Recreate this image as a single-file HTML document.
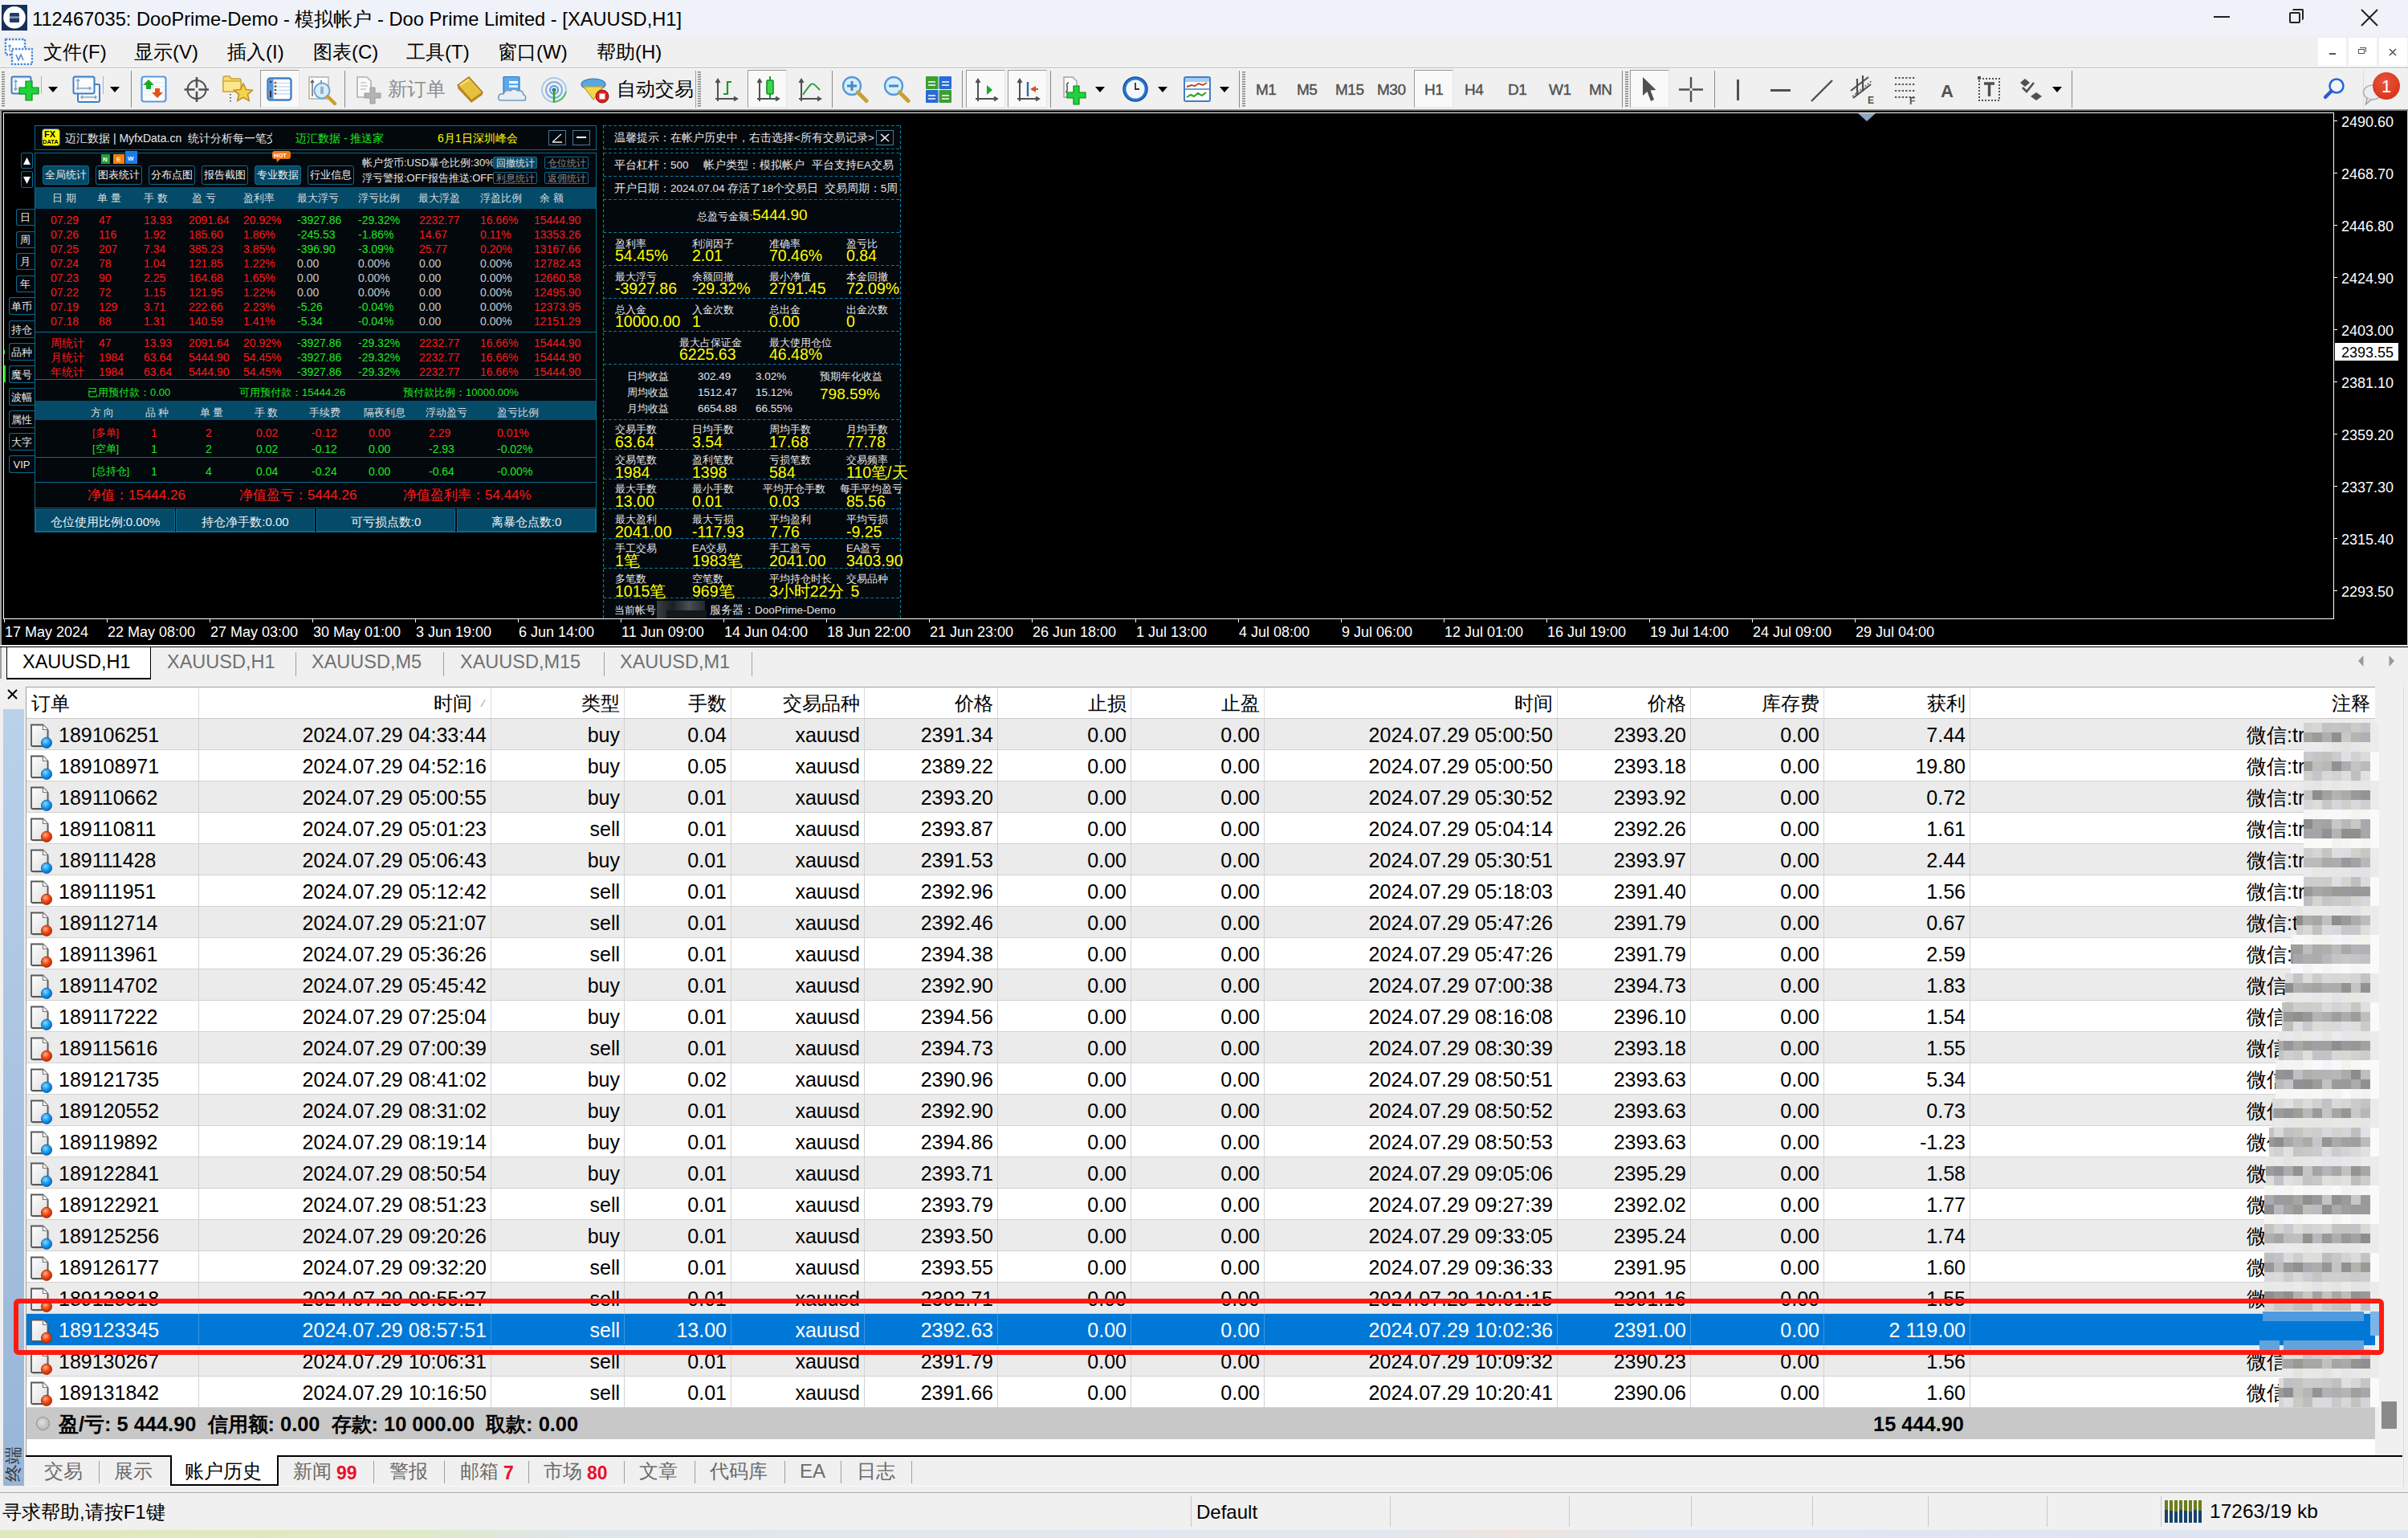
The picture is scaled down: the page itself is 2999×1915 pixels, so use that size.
<!DOCTYPE html><html><head><meta charset="utf-8"><style>
html,body{margin:0;padding:0;}
body{width:2999px;height:1915px;overflow:hidden;position:relative;background:#f0f0f0;font-family:"Liberation Sans",sans-serif;}
.t{position:absolute;white-space:pre;line-height:0;height:0;}
.t .b{display:inline-block;height:0;vertical-align:baseline;}
div{box-sizing:border-box;}
</style></head><body>
<div style="position:absolute;left:0px;top:0px;width:2999px;height:44px;background:#eff2f8"></div>
<svg style="position:absolute;left:2px;top:6px" width="32" height="32"><defs><filter id="bl"><feGaussianBlur stdDeviation="0.7"/></filter></defs><rect width="32" height="32" fill="#17305a"/><g filter="url(#bl)"><circle cx="16" cy="15.8" r="13.8" fill="#fff"/><rect x="10" y="10" width="12" height="12" rx="1.5" fill="#1f3d6c"/><rect x="10" y="14.3" width="12" height="2.6" fill="#8795ad"/></g></svg>
<div class="t " style="left:40px;top:23.7px;font-size:23.7px;color:#000;font-weight:400;"><span class="b"></span>112467035: DooPrime-Demo - 模拟帐户 - Doo Prime Limited - [XAUUSD,H1]</div>
<div style="position:absolute;left:2757px;top:20px;width:20px;height:2px;background:#222"></div>
<div style="position:absolute;left:2851px;top:15px;width:14px;height:14px;border:2px solid #222;border-radius:2px"></div>
<div style="position:absolute;left:2855px;top:11px;width:14px;height:14px;border-top:2px solid #222;border-right:2px solid #222;border-radius:2px"></div>
<svg style="position:absolute;left:2940px;top:11px" width="22" height="22"><path d="M1 1L21 21M21 1L1 21" stroke="#222" stroke-width="2"/></svg>
<div style="position:absolute;left:0px;top:44px;width:2999px;height:40px;background:#f0f0f0"></div>
<div style="position:absolute;left:0px;top:84px;width:2999px;height:1px;background:#bcbcbc"></div>
<svg style="position:absolute;left:5px;top:47px" width="36" height="34"><rect x="2" y="2" width="24" height="19" fill="#fff" stroke="#4a86e0" stroke-width="2.4" stroke-dasharray="2.4 1.6"/><path d="M7 9V17M5 11L7 9L9 11" stroke="#7aa0c8" stroke-width="1.4" fill="none"/><rect x="10" y="14" width="25" height="19" fill="#fff" stroke="#4a86e0" stroke-width="2.4" stroke-dasharray="2.4 1.6"/><path d="M15 21L18 28L21 21L24 28" stroke="#5a8ad8" stroke-width="1.6" fill="none"/></svg>
<div class="t " style="left:54px;top:64.6px;font-size:24px;color:#000;font-weight:400;"><span class="b"></span>文件(F)</div>
<div class="t " style="left:167px;top:64.6px;font-size:24px;color:#000;font-weight:400;"><span class="b"></span>显示(V)</div>
<div class="t " style="left:283px;top:64.6px;font-size:24px;color:#000;font-weight:400;"><span class="b"></span>插入(I)</div>
<div class="t " style="left:390px;top:64.6px;font-size:24px;color:#000;font-weight:400;"><span class="b"></span>图表(C)</div>
<div class="t " style="left:506px;top:64.6px;font-size:24px;color:#000;font-weight:400;"><span class="b"></span>工具(T)</div>
<div class="t " style="left:620px;top:64.6px;font-size:24px;color:#000;font-weight:400;"><span class="b"></span>窗口(W)</div>
<div class="t " style="left:743px;top:64.6px;font-size:24px;color:#000;font-weight:400;"><span class="b"></span>帮助(H)</div>
<div style="position:absolute;left:2887px;top:47px;width:35px;height:35px;background:#fff"></div>
<div style="position:absolute;left:2925px;top:47px;width:35px;height:35px;background:#fff"></div>
<div style="position:absolute;left:2963px;top:47px;width:35px;height:35px;background:#fff"></div>
<div style="position:absolute;left:2901px;top:66px;width:8px;height:2px;background:#555"></div>
<div style="position:absolute;left:2937px;top:61px;width:8px;height:6px;border:1px solid #555"></div>
<div style="position:absolute;left:2939px;top:59px;width:8px;height:6px;border-top:1px solid #555;border-right:1px solid #555"></div>
<svg style="position:absolute;left:2975px;top:60px" width="10" height="10"><path d="M1 1L9 9M9 1L1 9" stroke="#555" stroke-width="1.6"/></svg>
<div style="position:absolute;left:0px;top:85px;width:2999px;height:51px;background:#f0f0f0"></div>
<div style="position:absolute;left:0px;top:136px;width:2999px;height:2px;background:linear-gradient(#a8a8a8,#5a5a5a)"></div>
<div style="position:absolute;left:0px;top:85px;width:2999px;height:1px;background:#fff"></div>
<svg style="position:absolute;left:2px;top:89px" width="4" height="45" viewBox="0 0 4 45"><rect x="0" y="0" width="4" height="1.6" fill="#8a8a8a"/><rect x="0" y="3" width="4" height="1.6" fill="#8a8a8a"/><rect x="0" y="6" width="4" height="1.6" fill="#8a8a8a"/><rect x="0" y="9" width="4" height="1.6" fill="#8a8a8a"/><rect x="0" y="12" width="4" height="1.6" fill="#8a8a8a"/><rect x="0" y="15" width="4" height="1.6" fill="#8a8a8a"/><rect x="0" y="18" width="4" height="1.6" fill="#8a8a8a"/><rect x="0" y="21" width="4" height="1.6" fill="#8a8a8a"/><rect x="0" y="24" width="4" height="1.6" fill="#8a8a8a"/><rect x="0" y="27" width="4" height="1.6" fill="#8a8a8a"/><rect x="0" y="30" width="4" height="1.6" fill="#8a8a8a"/><rect x="0" y="33" width="4" height="1.6" fill="#8a8a8a"/><rect x="0" y="36" width="4" height="1.6" fill="#8a8a8a"/><rect x="0" y="39" width="4" height="1.6" fill="#8a8a8a"/><rect x="0" y="42" width="4" height="1.6" fill="#8a8a8a"/></svg>
<svg style="position:absolute;left:13px;top:94px" width="36" height="34" viewBox="0 0 36 34"><defs><linearGradient id="wg" x1="0" y1="0" x2="0" y2="1"><stop offset="0" stop-color="#cfe2f6"/><stop offset="0.2" stop-color="#fff"/><stop offset="1" stop-color="#f0f4f8"/></linearGradient></defs><rect x="1.5" y="1.5" width="24" height="21" rx="2" fill="url(#wg)" stroke="#3f7fc4" stroke-width="2"/><path d="M6.5 6V18M4.5 8L6.5 6L8.5 8M4.5 16L6.5 18L8.5 16" stroke="#8aa6c0" stroke-width="1.6" fill="none"/><path d="M19 7H27V15H35V23H27V31H19V23H11V15H19Z" fill="#1ed43a" stroke="#0b8a1c" stroke-width="1.2"/></svg>
<div style="position:absolute;left:51px;top:95px;width:1px;height:22px;background:#8ab8ee"></div>
<svg style="position:absolute;left:60px;top:108px" width="12" height="7" viewBox="0 0 12 7"><path d="M0 0H12L6 7Z" fill="#000"/></svg>
<svg style="position:absolute;left:90px;top:94px" width="36" height="35" viewBox="0 0 36 35"><rect x="7" y="11" width="27" height="22" rx="2" fill="#f6f8fb" stroke="#3f7fc4" stroke-width="2"/><rect x="1.5" y="1.5" width="26" height="21" rx="2" fill="url(#wg)" stroke="#3f7fc4" stroke-width="2"/><path d="M7 5V18M5 7L7 5L9 7M5 16H23M21 14L23 16L21 18" stroke="#8aa6c0" stroke-width="1.6" fill="none"/><path d="M11 27H30M13 25L11 27L13 29M28 25L30 27L28 29" stroke="#8aa6c0" stroke-width="1.6" fill="none"/></svg>
<div style="position:absolute;left:128px;top:95px;width:1px;height:22px;background:#8ab8ee"></div>
<svg style="position:absolute;left:137px;top:108px" width="12" height="7" viewBox="0 0 12 7"><path d="M0 0H12L6 7Z" fill="#000"/></svg>
<div style="position:absolute;left:163px;top:88px;width:1px;height:46px;background:#8a8a8a"></div>
<svg style="position:absolute;left:175px;top:94px" width="33" height="34" viewBox="0 0 33 34"><rect x="1.5" y="1.5" width="30" height="31" rx="3" fill="#fbfcfe" stroke="#5b9ae0" stroke-width="2.2"/><path d="M4 9H29M4 14H29M4 19H29M4 24H29" stroke="#e4e8ec" stroke-width="1"/><path d="M10 5L17 12H13V17H7V12H3Z" fill="#1aa82a"/><path d="M21 28L28 21H24V16H18V21H14Z" fill="#e2541c"/></svg>
<svg style="position:absolute;left:228px;top:95px" width="34" height="34" viewBox="0 0 34 34"><circle cx="17" cy="16.5" r="11.5" fill="none" stroke="#505050" stroke-width="2"/><path d="M17 1V32M1.5 16.5H32" stroke="#505050" stroke-width="2.6"/><circle cx="17" cy="16.5" r="2.5" fill="#f0f0f0"/></svg>
<svg style="position:absolute;left:276px;top:93px" width="40" height="36" viewBox="0 0 40 36"><path d="M2 4Q2 2 4 2H10L12 5H22Q24 5 24 7V21H2Z" fill="#f7dc6f" stroke="#c9a032" stroke-width="1.4"/><rect x="2" y="8" width="22" height="13" fill="#fce78e" stroke="#c9a032" stroke-width="1.2"/><path d="M27 11L30.5 18.5L38.5 19.3L32.5 24.6L34.3 32.5L27 28.4L19.7 32.5L21.5 24.6L15.5 19.3L23.5 18.5Z" fill="#f3d34a" stroke="#c08a20" stroke-width="1.5"/><path d="M11 24V34" stroke="#444" stroke-width="1.6" stroke-dasharray="1.6 2.4"/></svg>
<div style="position:absolute;left:324px;top:87px;width:49px;height:47px;background:#f9f9f9;border-top:1px solid #9a9a9a;border-left:1px solid #9a9a9a;border-right:1px solid #e6e6e6;border-bottom:1px solid #e6e6e6"></div>
<svg style="position:absolute;left:332px;top:96px" width="32" height="30" viewBox="0 0 32 30"><rect x="1.5" y="1.5" width="29" height="27" rx="3" fill="#fff" stroke="#3f7fc4" stroke-width="2.4"/><rect x="2.5" y="2.5" width="6" height="25" fill="#5d95d6"/><path d="M9 7.5H29M9 12H29M9 16.5H29M9 21H29" stroke="#c9dcf4" stroke-width="1.6"/><circle cx="11" cy="7" r="1.3" fill="#e23"/><circle cx="11" cy="11.5" r="1.3" fill="#363"/><circle cx="11" cy="16" r="1.3" fill="#363"/><circle cx="11" cy="20.5" r="1.3" fill="#e23"/><circle cx="5" cy="6" r="1" fill="#111"/><rect x="4" y="17" width="2" height="8" fill="#333"/></svg>
<svg style="position:absolute;left:383px;top:94px" width="38" height="37" viewBox="0 0 38 37"><rect x="2" y="2" width="24" height="27" fill="#fff" stroke="#b8b0a0" stroke-width="1.5"/><path d="M6 6V26M4 9L6 6L8 9M17 6V22" stroke="#606060" stroke-width="1.4" fill="none"/><circle cx="18" cy="19" r="9.5" fill="#d2ecfa" fill-opacity="0.9" stroke="#6aa6e0" stroke-width="2"/><path d="M25 26L34 35" stroke="#c8a030" stroke-width="4.5" stroke-linecap="round"/><rect x="16" y="14" width="4" height="9" fill="#9ab0c8"/></svg>
<div style="position:absolute;left:429px;top:88px;width:1px;height:46px;background:#8a8a8a"></div>
<svg style="position:absolute;left:442px;top:94px" width="36" height="37" viewBox="0 0 36 37"><path d="M3 2H15L20 7V27H3Z" fill="#fafafa" stroke="#b0b0b0" stroke-width="1.6"/><path d="M7 9H14M7 13H16M7 17H14" stroke="#c8c8c8" stroke-width="1.5"/><path d="M19 15H25V22H32V28H25V35H19V28H12V22H19Z" fill="#b4b4b4" stroke="#9a9a9a" stroke-width="1"/></svg>
<div class="t " style="left:483px;top:110.6px;font-size:24px;color:#8c8c8c;font-weight:400;"><span class="b"></span>新订单</div>
<svg style="position:absolute;left:568px;top:94px" width="36" height="34" viewBox="0 0 36 34"><path d="M2 12L16 2L33 21L19 31Z" fill="#e8c040" stroke="#a87818" stroke-width="1.4"/><path d="M2 12L2 16L19 34L33 24L33 21L19 31Z" fill="#b88a28"/><path d="M5 12L16 5" stroke="#fbe58a" stroke-width="2"/></svg>
<svg style="position:absolute;left:620px;top:94px" width="36" height="34" viewBox="0 0 36 34"><rect x="7" y="1.5" width="20" height="22" rx="1" fill="#5aa9ee" stroke="#2c7cc8" stroke-width="1.2"/><rect x="14" y="7" width="11" height="3" fill="#fff"/><rect x="14" y="12" width="11" height="3" fill="#e0f0ff"/><path d="M4 31Q0 31 1 26Q2 22 7 23Q9 17 16 19Q19 15 25 19Q31 18 32 24Q36 25 34 31Z" fill="#e9eef5" stroke="#7a9ac0" stroke-width="1.6"/></svg>
<svg style="position:absolute;left:672px;top:94px" width="36" height="36" viewBox="0 0 36 36"><circle cx="18" cy="18" r="15" fill="none" stroke="#a8c8e8" stroke-width="2"/><circle cx="18" cy="18" r="10" fill="none" stroke="#7fb0e0" stroke-width="2"/><circle cx="18" cy="18" r="5" fill="none" stroke="#5a98d8" stroke-width="2"/><circle cx="18" cy="18" r="2.5" fill="#2a6ad0"/><path d="M18 18V34" stroke="#30a030" stroke-width="2.5"/><path d="M18 33Q30 31 33 20" stroke="#58c058" stroke-width="2" fill="none"/></svg>
<svg style="position:absolute;left:722px;top:94px" width="38" height="36" viewBox="0 0 38 36"><ellipse cx="17" cy="11" rx="15" ry="7" fill="#58a8e0" stroke="#3078b0" stroke-width="1.2"/><path d="M5 14L17 30L29 14Z" fill="#f4d64a" stroke="#c0a030" stroke-width="1.2"/><circle cx="28" cy="26" r="8" fill="#d82020" stroke="#a01010" stroke-width="1"/><rect x="24.5" y="22.5" width="7" height="7" fill="#fff"/></svg>
<div class="t " style="left:768px;top:110.6px;font-size:24px;color:#000;font-weight:400;"><span class="b"></span>自动交易</div>
<svg style="position:absolute;left:869px;top:89px" width="4" height="45" viewBox="0 0 4 45"><rect x="0" y="0" width="4" height="1.6" fill="#8a8a8a"/><rect x="0" y="3" width="4" height="1.6" fill="#8a8a8a"/><rect x="0" y="6" width="4" height="1.6" fill="#8a8a8a"/><rect x="0" y="9" width="4" height="1.6" fill="#8a8a8a"/><rect x="0" y="12" width="4" height="1.6" fill="#8a8a8a"/><rect x="0" y="15" width="4" height="1.6" fill="#8a8a8a"/><rect x="0" y="18" width="4" height="1.6" fill="#8a8a8a"/><rect x="0" y="21" width="4" height="1.6" fill="#8a8a8a"/><rect x="0" y="24" width="4" height="1.6" fill="#8a8a8a"/><rect x="0" y="27" width="4" height="1.6" fill="#8a8a8a"/><rect x="0" y="30" width="4" height="1.6" fill="#8a8a8a"/><rect x="0" y="33" width="4" height="1.6" fill="#8a8a8a"/><rect x="0" y="36" width="4" height="1.6" fill="#8a8a8a"/><rect x="0" y="39" width="4" height="1.6" fill="#8a8a8a"/><rect x="0" y="42" width="4" height="1.6" fill="#8a8a8a"/></svg>
<div style="position:absolute;left:866px;top:88px;width:1px;height:46px;background:#a0a0a0"></div>
<svg style="position:absolute;left:889px;top:97px" width="32" height="32" viewBox="0 0 32 32"><path d="M5 3V29M2 26H29M2.5 6L5 2L7.5 6M25 23.5L29 26L25 28.5" stroke="#505050" stroke-width="2" fill="none"/><path d="M12 20H17V5H22" stroke="#1a9a2a" stroke-width="2.2" fill="none"/></svg>
<div style="position:absolute;left:931px;top:87px;width:49px;height:47px;background:#f9f9f9;border-top:1px solid #9a9a9a;border-left:1px solid #9a9a9a;border-right:1px solid #e6e6e6;border-bottom:1px solid #e6e6e6"></div>
<svg style="position:absolute;left:941px;top:94px" width="32" height="35" viewBox="0 0 32 35"><path d="M5 6V32M2 29H29M2.5 9L5 5L7.5 9M25 26.5L29 29L25 31.5" stroke="#505050" stroke-width="2" fill="none"/><path d="M18 1V28" stroke="#1a9a2a" stroke-width="2"/><rect x="14" y="6" width="8" height="17" rx="1" fill="#38d848" stroke="#1a8a2a" stroke-width="1.6"/></svg>
<svg style="position:absolute;left:993px;top:97px" width="32" height="32" viewBox="0 0 32 32"><path d="M5 3V29M2 26H29M2.5 6L5 2L7.5 6M25 23.5L29 26L25 28.5" stroke="#505050" stroke-width="2" fill="none"/><path d="M7 21Q13 12 17 8Q20 6 24 11L28 15" stroke="#2a9a3a" stroke-width="1.8" fill="none"/></svg>
<div style="position:absolute;left:1036px;top:88px;width:1px;height:46px;background:#8a8a8a"></div>
<svg style="position:absolute;left:1048px;top:94px" width="35" height="35" viewBox="0 0 35 35"><circle cx="13" cy="13" r="11" fill="#d6effc" stroke="#5a9ad8" stroke-width="2.4"/><path d="M20.5 21L31 31.5" stroke="#c8a030" stroke-width="5" stroke-linecap="round"/><path d="M7 13H19" stroke="#4a86c0" stroke-width="3"/><path d="M13 7V19" stroke="#4a86c0" stroke-width="3"/></svg>
<svg style="position:absolute;left:1100px;top:94px" width="35" height="35" viewBox="0 0 35 35"><circle cx="13" cy="13" r="11" fill="#d6effc" stroke="#5a9ad8" stroke-width="2.4"/><path d="M20.5 21L31 31.5" stroke="#c8a030" stroke-width="5" stroke-linecap="round"/><path d="M7 13H19" stroke="#4a86c0" stroke-width="3"/></svg>
<svg style="position:absolute;left:1152px;top:94px" width="34" height="35" viewBox="0 0 34 35"><rect x="1" y="1" width="15.5" height="16" rx="1" fill="#3aa030"/><rect x="17.5" y="1" width="15.5" height="16" rx="1" fill="#2a6ad8"/><rect x="1" y="18" width="15.5" height="16" rx="1" fill="#2a6ad8"/><rect x="17.5" y="18" width="15.5" height="16" rx="1" fill="#3aa030"/><path d="M4 8H13M4 12H13M21 8H30M21 12H30M4 25H13M4 29H13M21 25H30M21 29H30" stroke="#fff" stroke-width="1.6"/></svg>
<div style="position:absolute;left:1198px;top:88px;width:1px;height:46px;background:#8a8a8a"></div>
<div style="position:absolute;left:1203px;top:87px;width:49px;height:47px;background:#f9f9f9;border-top:1px solid #9a9a9a;border-left:1px solid #9a9a9a;border-right:1px solid #e6e6e6;border-bottom:1px solid #e6e6e6"></div>
<svg style="position:absolute;left:1213px;top:97px" width="32" height="32" viewBox="0 0 32 32"><path d="M5 3V29M2 26H29M2.5 6L5 2L7.5 6M25 23.5L29 26L25 28.5" stroke="#505050" stroke-width="2" fill="none"/><path d="M16 9L23 15L16 21Z" fill="#1aa82a"/></svg>
<div style="position:absolute;left:1255px;top:87px;width:49px;height:47px;background:#f9f9f9;border-top:1px solid #9a9a9a;border-left:1px solid #9a9a9a;border-right:1px solid #e6e6e6;border-bottom:1px solid #e6e6e6"></div>
<svg style="position:absolute;left:1265px;top:97px" width="32" height="32" viewBox="0 0 32 32"><path d="M5 3V29M2 26H29M2.5 6L5 2L7.5 6M25 23.5L29 26L25 28.5" stroke="#505050" stroke-width="2" fill="none"/><path d="M15 5V23" stroke="#2a6aa8" stroke-width="2.4"/><path d="M18 14L25 10V18Z" fill="#e05020"/><path d="M21 14H28" stroke="#e05020" stroke-width="2"/></svg>
<div style="position:absolute;left:1308px;top:88px;width:1px;height:46px;background:#8a8a8a"></div>
<svg style="position:absolute;left:1322px;top:94px" width="36" height="38" viewBox="0 0 36 38"><path d="M3 2H14L19 7V27H3Z" fill="#fafafa" stroke="#a0a0a0" stroke-width="1.4"/><path d="M9 9Q6 9 7 14Q8 20 5 21" stroke="#404040" stroke-width="1.4" fill="none"/><path d="M15 13H22V21H30V28H22V36H15V28H7V21H15Z" fill="#1ed43a" stroke="#0b8a1c" stroke-width="1.2"/></svg>
<svg style="position:absolute;left:1364px;top:108px" width="12" height="7" viewBox="0 0 12 7"><path d="M0 0H12L6 7Z" fill="#000"/></svg>
<svg style="position:absolute;left:1397px;top:94px" width="34" height="34" viewBox="0 0 34 34"><circle cx="17" cy="17" r="15" fill="#2a78d0" stroke="#1a50a0" stroke-width="1.5"/><circle cx="17" cy="17" r="11.5" fill="#f4f8fc"/><path d="M17 9V17H22" stroke="#303030" stroke-width="1.8" fill="none"/></svg>
<svg style="position:absolute;left:1442px;top:108px" width="12" height="7" viewBox="0 0 12 7"><path d="M0 0H12L6 7Z" fill="#000"/></svg>
<svg style="position:absolute;left:1474px;top:95px" width="34" height="32" viewBox="0 0 34 32"><rect x="1" y="1" width="32" height="30" rx="2" fill="#fff" stroke="#3f7fc4" stroke-width="2"/><rect x="2" y="2" width="30" height="5" fill="#a8ccef"/><path d="M1 16H33" stroke="#3f7fc4" stroke-width="1.5"/><path d="M4 13L10 11L14 12L19 9L24 11L29 8" stroke="#b84a20" stroke-width="2" fill="none"/><path d="M4 26L9 23L13 25L18 21L23 24L28 20" stroke="#2aa02a" stroke-width="2" fill="none"/></svg>
<svg style="position:absolute;left:1519px;top:108px" width="12" height="7" viewBox="0 0 12 7"><path d="M0 0H12L6 7Z" fill="#000"/></svg>
<div style="position:absolute;left:1543px;top:88px;width:1px;height:46px;background:#8a8a8a"></div>
<svg style="position:absolute;left:1547px;top:89px" width="4" height="45" viewBox="0 0 4 45"><rect x="0" y="0" width="4" height="1.6" fill="#8a8a8a"/><rect x="0" y="3" width="4" height="1.6" fill="#8a8a8a"/><rect x="0" y="6" width="4" height="1.6" fill="#8a8a8a"/><rect x="0" y="9" width="4" height="1.6" fill="#8a8a8a"/><rect x="0" y="12" width="4" height="1.6" fill="#8a8a8a"/><rect x="0" y="15" width="4" height="1.6" fill="#8a8a8a"/><rect x="0" y="18" width="4" height="1.6" fill="#8a8a8a"/><rect x="0" y="21" width="4" height="1.6" fill="#8a8a8a"/><rect x="0" y="24" width="4" height="1.6" fill="#8a8a8a"/><rect x="0" y="27" width="4" height="1.6" fill="#8a8a8a"/><rect x="0" y="30" width="4" height="1.6" fill="#8a8a8a"/><rect x="0" y="33" width="4" height="1.6" fill="#8a8a8a"/><rect x="0" y="36" width="4" height="1.6" fill="#8a8a8a"/><rect x="0" y="39" width="4" height="1.6" fill="#8a8a8a"/><rect x="0" y="42" width="4" height="1.6" fill="#8a8a8a"/></svg>
<div class="t " style="left:1564px;top:112.35px;font-size:19px;color:#505050;font-weight:400;letter-spacing:-0.5px;-webkit-text-stroke:0.4px #505050"><span class="b"></span>M1</div>
<div class="t " style="left:1615px;top:112.35px;font-size:19px;color:#505050;font-weight:400;letter-spacing:-0.5px;-webkit-text-stroke:0.4px #505050"><span class="b"></span>M5</div>
<div class="t " style="left:1663px;top:112.35px;font-size:19px;color:#505050;font-weight:400;letter-spacing:-0.5px;-webkit-text-stroke:0.4px #505050"><span class="b"></span>M15</div>
<div class="t " style="left:1715px;top:112.35px;font-size:19px;color:#505050;font-weight:400;letter-spacing:-0.5px;-webkit-text-stroke:0.4px #505050"><span class="b"></span>M30</div>
<div style="position:absolute;left:1761px;top:87px;width:49px;height:47px;background:#f9f9f9;border-top:1px solid #9a9a9a;border-left:1px solid #9a9a9a;border-right:1px solid #e6e6e6;border-bottom:1px solid #e6e6e6"></div>
<div class="t " style="left:1774px;top:112.35px;font-size:19px;color:#505050;font-weight:400;letter-spacing:-0.5px;-webkit-text-stroke:0.4px #505050"><span class="b"></span>H1</div>
<div class="t " style="left:1824px;top:112.35px;font-size:19px;color:#505050;font-weight:400;letter-spacing:-0.5px;-webkit-text-stroke:0.4px #505050"><span class="b"></span>H4</div>
<div class="t " style="left:1878px;top:112.35px;font-size:19px;color:#505050;font-weight:400;letter-spacing:-0.5px;-webkit-text-stroke:0.4px #505050"><span class="b"></span>D1</div>
<div class="t " style="left:1929px;top:112.35px;font-size:19px;color:#505050;font-weight:400;letter-spacing:-0.5px;-webkit-text-stroke:0.4px #505050"><span class="b"></span>W1</div>
<div class="t " style="left:1979px;top:112.35px;font-size:19px;color:#505050;font-weight:400;letter-spacing:-0.5px;-webkit-text-stroke:0.4px #505050"><span class="b"></span>MN</div>
<div style="position:absolute;left:2020px;top:88px;width:1px;height:46px;background:#8a8a8a"></div>
<svg style="position:absolute;left:2024px;top:89px" width="4" height="45" viewBox="0 0 4 45"><rect x="0" y="0" width="4" height="1.6" fill="#8a8a8a"/><rect x="0" y="3" width="4" height="1.6" fill="#8a8a8a"/><rect x="0" y="6" width="4" height="1.6" fill="#8a8a8a"/><rect x="0" y="9" width="4" height="1.6" fill="#8a8a8a"/><rect x="0" y="12" width="4" height="1.6" fill="#8a8a8a"/><rect x="0" y="15" width="4" height="1.6" fill="#8a8a8a"/><rect x="0" y="18" width="4" height="1.6" fill="#8a8a8a"/><rect x="0" y="21" width="4" height="1.6" fill="#8a8a8a"/><rect x="0" y="24" width="4" height="1.6" fill="#8a8a8a"/><rect x="0" y="27" width="4" height="1.6" fill="#8a8a8a"/><rect x="0" y="30" width="4" height="1.6" fill="#8a8a8a"/><rect x="0" y="33" width="4" height="1.6" fill="#8a8a8a"/><rect x="0" y="36" width="4" height="1.6" fill="#8a8a8a"/><rect x="0" y="39" width="4" height="1.6" fill="#8a8a8a"/><rect x="0" y="42" width="4" height="1.6" fill="#8a8a8a"/></svg>
<div style="position:absolute;left:2030px;top:87px;width:49px;height:47px;background:#f9f9f9;border-top:1px solid #9a9a9a;border-left:1px solid #9a9a9a;border-right:1px solid #e6e6e6;border-bottom:1px solid #e6e6e6"></div>
<svg style="position:absolute;left:2044px;top:95px" width="20" height="33" viewBox="0 0 20 33"><path d="M2 1L2 24L7.5 19L12 31L16 29L11.5 17.5L18.5 17Z" fill="#505050"/></svg>
<svg style="position:absolute;left:2090px;top:95px" width="32" height="33" viewBox="0 0 32 33"><path d="M16 1V32M1 16.5H31" stroke="#505050" stroke-width="2.4"/><rect x="14.5" y="15" width="3" height="3" fill="#f0f0f0"/></svg>
<div style="position:absolute;left:2135px;top:88px;width:1px;height:46px;background:#8a8a8a"></div>
<div style="position:absolute;left:2163px;top:99px;width:3px;height:26px;background:#505050"></div>
<div style="position:absolute;left:2205px;top:111px;width:25px;height:3px;background:#505050"></div>
<svg style="position:absolute;left:2255px;top:99px" width="28" height="28" viewBox="0 0 28 28"><path d="M1 27L27 1" stroke="#505050" stroke-width="2.4"/></svg>
<svg style="position:absolute;left:2304px;top:93px" width="34" height="38" viewBox="0 0 34 38"><path d="M1 20L23 3M4 29L26 12M9 5V26M16 1V21" stroke="#505050" stroke-width="2.2"/><path d="M3 27L28 7" stroke="#505050" stroke-width="1.4" stroke-dasharray="2 2"/><text x="22" y="36" font-family="Liberation Sans" font-weight="700" font-size="12" fill="#505050">E</text></svg>
<svg style="position:absolute;left:2358px;top:95px" width="32" height="36" viewBox="0 0 32 36"><path d="M2 2H28" stroke="#505050" stroke-width="2.2" stroke-dasharray="2.2 2.2"/><path d="M2 10H28" stroke="#505050" stroke-width="2.2" stroke-dasharray="2.2 2.2"/><path d="M2 18H28" stroke="#505050" stroke-width="2.2" stroke-dasharray="2.2 2.2"/><path d="M2 26H28" stroke="#505050" stroke-width="2.2" stroke-dasharray="2.2 2.2"/><text x="20" y="35" font-family="Liberation Sans" font-weight="700" font-size="12" fill="#505050">F</text></svg>
<div class="t " style="left:2417px;top:114.3px;font-size:22px;color:#505050;font-weight:700;"><span class="b"></span>A</div>
<svg style="position:absolute;left:2463px;top:95px" width="30" height="32" viewBox="0 0 30 32"><rect x="2" y="3" width="25" height="27" fill="none" stroke="#505050" stroke-width="2" stroke-dasharray="2 2"/><rect x="0" y="0" width="4" height="4" fill="#505050"/><path d="M8 9H21M14.5 9V25" stroke="#505050" stroke-width="3.4"/></svg>
<svg style="position:absolute;left:2515px;top:97px" width="30" height="30" viewBox="0 0 30 30"><path d="M7 1L13 6L7 11L1 6Z" fill="#505050"/><path d="M21 18L28 23L21 28L14 23Z" fill="#505050"/><path d="M4 12L9 17L18 6" stroke="#505050" stroke-width="2.6" fill="none"/></svg>
<svg style="position:absolute;left:2556px;top:108px" width="12" height="7" viewBox="0 0 12 7"><path d="M0 0H12L6 7Z" fill="#000"/></svg>
<div style="position:absolute;left:2580px;top:88px;width:1px;height:46px;background:#8a8a8a"></div>
<svg style="position:absolute;left:2888px;top:94px" width="34" height="34" viewBox="0 0 34 34"><circle cx="22" cy="13" r="8.5" fill="#f4f6fc" stroke="#2a66d8" stroke-width="2.6"/><path d="M15.5 19.5L8 27" stroke="#2a5ad0" stroke-width="4.4" stroke-linecap="round"/></svg>
<div style="position:absolute;left:2943px;top:86px;width:1px;height:50px;background:#dcdcdc"></div>
<svg style="position:absolute;left:2942px;top:100px" width="30" height="34" viewBox="0 0 30 34"><ellipse cx="13" cy="15" rx="11.5" ry="9" fill="#eceef4" stroke="#b0b0b0" stroke-width="1.6"/><path d="M6 22L4.5 30L12 23.5" fill="#d8dbe6" stroke="#a0a0a0" stroke-width="1.4"/></svg>
<div style="position:absolute;left:2955px;top:90px;width:34px;height:34px;border-radius:50%;background:radial-gradient(circle at 45% 35%,#e8553a,#d42a14)"></div>
<div class="t " style="left:2966px;top:108.3px;font-size:22px;color:#fff;font-weight:400;"><span class="b"></span>1</div>
<div style="position:absolute;left:0px;top:138px;width:2999px;height:665px;background:#000"></div>
<div style="position:absolute;left:0px;top:138px;width:2px;height:665px;background:#a0a0a0"></div>
<div style="position:absolute;left:2998px;top:138px;width:1px;height:665px;background:#d0d0d0"></div>
<div style="position:absolute;left:4px;top:140px;width:2903px;height:631px;border:1px solid #fff"></div>
<svg style="position:absolute;left:2314px;top:141px" width="22" height="10"><path d="M0 0L22 0L11 10Z" fill="#8ea6bf"/></svg>
<div style="position:absolute;left:2906px;top:150px;width:5px;height:1px;background:#fff"></div>
<div class="t " style="left:2916px;top:151.7px;font-size:18px;color:#fff;font-weight:400;"><span class="b"></span>2490.60</div>
<div style="position:absolute;left:2906px;top:215px;width:5px;height:1px;background:#fff"></div>
<div class="t " style="left:2916px;top:216.7px;font-size:18px;color:#fff;font-weight:400;"><span class="b"></span>2468.70</div>
<div style="position:absolute;left:2906px;top:280px;width:5px;height:1px;background:#fff"></div>
<div class="t " style="left:2916px;top:281.7px;font-size:18px;color:#fff;font-weight:400;"><span class="b"></span>2446.80</div>
<div style="position:absolute;left:2906px;top:345px;width:5px;height:1px;background:#fff"></div>
<div class="t " style="left:2916px;top:346.7px;font-size:18px;color:#fff;font-weight:400;"><span class="b"></span>2424.90</div>
<div style="position:absolute;left:2906px;top:410px;width:5px;height:1px;background:#fff"></div>
<div class="t " style="left:2916px;top:411.7px;font-size:18px;color:#fff;font-weight:400;"><span class="b"></span>2403.00</div>
<div style="position:absolute;left:2906px;top:475px;width:5px;height:1px;background:#fff"></div>
<div class="t " style="left:2916px;top:476.7px;font-size:18px;color:#fff;font-weight:400;"><span class="b"></span>2381.10</div>
<div style="position:absolute;left:2906px;top:540px;width:5px;height:1px;background:#fff"></div>
<div class="t " style="left:2916px;top:541.7px;font-size:18px;color:#fff;font-weight:400;"><span class="b"></span>2359.20</div>
<div style="position:absolute;left:2906px;top:605px;width:5px;height:1px;background:#fff"></div>
<div class="t " style="left:2916px;top:606.7px;font-size:18px;color:#fff;font-weight:400;"><span class="b"></span>2337.30</div>
<div style="position:absolute;left:2906px;top:670px;width:5px;height:1px;background:#fff"></div>
<div class="t " style="left:2916px;top:671.7px;font-size:18px;color:#fff;font-weight:400;"><span class="b"></span>2315.40</div>
<div style="position:absolute;left:2906px;top:735px;width:5px;height:1px;background:#fff"></div>
<div class="t " style="left:2916px;top:736.7px;font-size:18px;color:#fff;font-weight:400;"><span class="b"></span>2293.50</div>
<div style="position:absolute;left:2908px;top:427px;width:79px;height:22px;background:#fff"></div>
<div class="t " style="left:2916px;top:438.7px;font-size:18px;color:#000;font-weight:400;"><span class="b"></span>2393.55</div>
<div style="position:absolute;left:43px;top:156px;width:700px;height:31px;background:#03080d;border:1px solid #0a6c90"></div>
<div style="position:absolute;left:52px;top:160px;width:23px;height:22px;background:#ffff00;border-radius:4px;border:1px solid #3a5bb0"></div>
<div class="t " style="left:55px;top:167.15px;font-size:11px;color:#000;font-weight:700;"><span class="b"></span>FX</div>
<div class="t " style="left:53px;top:177.38px;font-size:7.5px;color:#000;font-weight:700;"><span class="b"></span>DATA</div>
<div class="t " style="left:81px;top:172.1px;font-size:14px;color:#e6e6e6;font-weight:400;"><span class="b"></span>迈汇数据 | MyfxData.cn  统计分析每一笔交易</div>
<div style="position:absolute;left:339px;top:158px;width:22px;height:26px;background:#03080d"></div>
<div class="t " style="left:368px;top:172.1px;font-size:14px;color:#1ee81e;font-weight:400;"><span class="b"></span>迈汇数据 - 推送家</div>
<div class="t " style="left:545px;top:172.1px;font-size:14px;color:#ffff00;font-weight:400;"><span class="b"></span>6月1日深圳峰会</div>
<div style="position:absolute;left:683px;top:162px;width:22px;height:19px;border:1px solid #4a7a9a"></div>
<svg style="position:absolute;left:686px;top:165px" width="16" height="14"><path d="M2 12L13 2M2 12H14" stroke="#eee" stroke-width="1.3" fill="none"/></svg>
<div style="position:absolute;left:713px;top:162px;width:22px;height:19px;border:1px solid #4a7a9a"></div>
<div style="position:absolute;left:718px;top:170px;width:12px;height:2px;background:#fff"></div>
<div style="position:absolute;left:43px;top:190px;width:700px;height:473px;background:#03080d;border:1px solid #0a6c90"></div>
<div style="position:absolute;left:26px;top:190px;width:15px;height:20px;background:#03080d;border:1px solid #0a6c90;border-radius:2px"></div>
<div style="position:absolute;left:26px;top:213px;width:15px;height:21px;background:#03080d;border:1px solid #0a6c90;border-radius:2px"></div>
<svg style="position:absolute;left:28px;top:194px" width="11" height="36"><path d="M1 11L5.5 2L10 11Z" fill="#fff"/><path d="M1 26L5.5 35L10 26Z" fill="#fff"/></svg>
<div style="position:absolute;left:53px;top:206px;width:58px;height:24px;background:#044a69;border:1px solid #0a6c90;border-radius:3px"></div>
<div class="t " style="left:82px;transform:translateX(-50%);top:218.45px;font-size:13px;color:#f0f0f0;font-weight:400;"><span class="b"></span>全局统计</div>
<div style="position:absolute;left:119px;top:206px;width:58px;height:24px;background:#03080d;border:1px solid #0a6c90;border-radius:3px"></div>
<div class="t " style="left:148px;transform:translateX(-50%);top:218.45px;font-size:13px;color:#f0f0f0;font-weight:400;"><span class="b"></span>图表统计</div>
<div style="position:absolute;left:185px;top:206px;width:58px;height:24px;background:#03080d;border:1px solid #0a6c90;border-radius:3px"></div>
<div class="t " style="left:214px;transform:translateX(-50%);top:218.45px;font-size:13px;color:#f0f0f0;font-weight:400;"><span class="b"></span>分布点图</div>
<div style="position:absolute;left:251px;top:206px;width:58px;height:24px;background:#03080d;border:1px solid #0a6c90;border-radius:3px"></div>
<div class="t " style="left:280px;transform:translateX(-50%);top:218.45px;font-size:13px;color:#f0f0f0;font-weight:400;"><span class="b"></span>报告截图</div>
<div style="position:absolute;left:317px;top:206px;width:58px;height:24px;background:#044a69;border:1px solid #0a6c90;border-radius:3px"></div>
<div class="t " style="left:346px;transform:translateX(-50%);top:218.45px;font-size:13px;color:#f0f0f0;font-weight:400;"><span class="b"></span>专业数据</div>
<div style="position:absolute;left:383px;top:206px;width:58px;height:24px;background:#03080d;border:1px solid #0a6c90;border-radius:3px"></div>
<div class="t " style="left:412px;transform:translateX(-50%);top:218.45px;font-size:13px;color:#f0f0f0;font-weight:400;"><span class="b"></span>行业信息</div>
<div style="position:absolute;left:126px;top:192px;width:11px;height:12px;background:#22a03a"></div>
<div class="t " style="left:128px;top:199.2px;font-size:8px;color:#fff;font-weight:700;"><span class="b"></span>N</div>
<div style="position:absolute;left:141px;top:192px;width:14px;height:12px;background:#f08010"></div>
<div class="t " style="left:145px;top:199.2px;font-size:8px;color:#fff;font-weight:700;"><span class="b"></span>E</div>
<div style="position:absolute;left:156px;top:188px;width:15px;height:16px;background:#1a7cf0"></div>
<div class="t " style="left:159px;top:198.2px;font-size:8px;color:#fff;font-weight:700;"><span class="b"></span>W</div>
<div style="position:absolute;left:339px;top:188px;width:23px;height:10px;background:#f07a10;border-radius:3px"></div>
<svg style="position:absolute;left:344px;top:197px" width="6" height="5"><path d="M0 0H6L1 5Z" fill="#f07a10"/></svg>
<div class="t " style="left:341px;top:193.88px;font-size:7.5px;color:#fff;font-weight:700;"><span class="b"></span>HOT</div>
<div class="t " style="left:451px;top:203.45px;font-size:13px;color:#e6e6e6;font-weight:400;"><span class="b"></span>帐户货币:USD暴仓比例:30%</div>
<div class="t " style="left:451px;top:222.45px;font-size:13px;color:#e6e6e6;font-weight:400;"><span class="b"></span>浮亏警报:OFF报告推送:OFF</div>
<div style="position:absolute;left:614px;top:195px;width:55px;height:15px;border:1px solid #0a6c90;border-radius:2px;background:#044a69"></div>
<div class="t " style="left:641.5px;transform:translateX(-50%);top:202.8px;font-size:12px;color:#e6e6e6;font-weight:400;"><span class="b"></span>回撤统计</div>
<div style="position:absolute;left:678px;top:195px;width:55px;height:15px;border:1px solid #0a6c90;border-radius:2px;"></div>
<div class="t " style="left:705.5px;transform:translateX(-50%);top:202.8px;font-size:12px;color:#8a8a8a;font-weight:400;"><span class="b"></span>仓位统计</div>
<div style="position:absolute;left:614px;top:214px;width:55px;height:15px;border:1px solid #0a6c90;border-radius:2px;"></div>
<div class="t " style="left:641.5px;transform:translateX(-50%);top:221.8px;font-size:12px;color:#8a8a8a;font-weight:400;"><span class="b"></span>利息统计</div>
<div style="position:absolute;left:678px;top:214px;width:55px;height:15px;border:1px solid #0a6c90;border-radius:2px;"></div>
<div class="t " style="left:705.5px;transform:translateX(-50%);top:221.8px;font-size:12px;color:#8a8a8a;font-weight:400;"><span class="b"></span>返佣统计</div>
<div style="position:absolute;left:44px;top:233px;width:698px;height:27px;background:#044a69"></div>
<div class="t " style="left:65px;top:247.45px;font-size:13px;color:#dcdcdc;font-weight:400;"><span class="b"></span>日 期</div>
<div class="t " style="left:121px;top:247.45px;font-size:13px;color:#dcdcdc;font-weight:400;"><span class="b"></span>单 量</div>
<div class="t " style="left:179px;top:247.45px;font-size:13px;color:#dcdcdc;font-weight:400;"><span class="b"></span>手 数</div>
<div class="t " style="left:239px;top:247.45px;font-size:13px;color:#dcdcdc;font-weight:400;"><span class="b"></span>盈 亏</div>
<div class="t " style="left:303px;top:247.45px;font-size:13px;color:#dcdcdc;font-weight:400;"><span class="b"></span>盈利率</div>
<div class="t " style="left:370px;top:247.45px;font-size:13px;color:#dcdcdc;font-weight:400;"><span class="b"></span>最大浮亏</div>
<div class="t " style="left:446px;top:247.45px;font-size:13px;color:#dcdcdc;font-weight:400;"><span class="b"></span>浮亏比例</div>
<div class="t " style="left:521px;top:247.45px;font-size:13px;color:#dcdcdc;font-weight:400;"><span class="b"></span>最大浮盈</div>
<div class="t " style="left:598px;top:247.45px;font-size:13px;color:#dcdcdc;font-weight:400;"><span class="b"></span>浮盈比例</div>
<div class="t " style="left:672px;top:247.45px;font-size:13px;color:#dcdcdc;font-weight:400;"><span class="b"></span>余 额</div>
<div class="t " style="left:63px;top:274.1px;font-size:14px;color:#ff1818;font-weight:400;"><span class="b"></span>07.29</div>
<div class="t " style="left:123px;top:274.1px;font-size:14px;color:#ff1818;font-weight:400;"><span class="b"></span>47</div>
<div class="t " style="left:179px;top:274.1px;font-size:14px;color:#ff1818;font-weight:400;"><span class="b"></span>13.93</div>
<div class="t " style="left:235px;top:274.1px;font-size:14px;color:#ff1818;font-weight:400;"><span class="b"></span>2091.64</div>
<div class="t " style="left:303px;top:274.1px;font-size:14px;color:#ff1818;font-weight:400;"><span class="b"></span>20.92%</div>
<div class="t " style="left:370px;top:274.1px;font-size:14px;color:#1ee81e;font-weight:400;"><span class="b"></span>-3927.86</div>
<div class="t " style="left:446px;top:274.1px;font-size:14px;color:#1ee81e;font-weight:400;"><span class="b"></span>-29.32%</div>
<div class="t " style="left:522px;top:274.1px;font-size:14px;color:#ff1818;font-weight:400;"><span class="b"></span>2232.77</div>
<div class="t " style="left:598px;top:274.1px;font-size:14px;color:#ff1818;font-weight:400;"><span class="b"></span>16.66%</div>
<div class="t " style="left:665px;top:274.1px;font-size:14px;color:#ff1818;font-weight:400;"><span class="b"></span>15444.90</div>
<div class="t " style="left:63px;top:292.1px;font-size:14px;color:#ff1818;font-weight:400;"><span class="b"></span>07.26</div>
<div class="t " style="left:123px;top:292.1px;font-size:14px;color:#ff1818;font-weight:400;"><span class="b"></span>116</div>
<div class="t " style="left:179px;top:292.1px;font-size:14px;color:#ff1818;font-weight:400;"><span class="b"></span>1.92</div>
<div class="t " style="left:235px;top:292.1px;font-size:14px;color:#ff1818;font-weight:400;"><span class="b"></span>185.60</div>
<div class="t " style="left:303px;top:292.1px;font-size:14px;color:#ff1818;font-weight:400;"><span class="b"></span>1.86%</div>
<div class="t " style="left:370px;top:292.1px;font-size:14px;color:#1ee81e;font-weight:400;"><span class="b"></span>-245.53</div>
<div class="t " style="left:446px;top:292.1px;font-size:14px;color:#1ee81e;font-weight:400;"><span class="b"></span>-1.86%</div>
<div class="t " style="left:522px;top:292.1px;font-size:14px;color:#ff1818;font-weight:400;"><span class="b"></span>14.67</div>
<div class="t " style="left:598px;top:292.1px;font-size:14px;color:#ff1818;font-weight:400;"><span class="b"></span>0.11%</div>
<div class="t " style="left:665px;top:292.1px;font-size:14px;color:#ff1818;font-weight:400;"><span class="b"></span>13353.26</div>
<div class="t " style="left:63px;top:310.1px;font-size:14px;color:#ff1818;font-weight:400;"><span class="b"></span>07.25</div>
<div class="t " style="left:123px;top:310.1px;font-size:14px;color:#ff1818;font-weight:400;"><span class="b"></span>207</div>
<div class="t " style="left:179px;top:310.1px;font-size:14px;color:#ff1818;font-weight:400;"><span class="b"></span>7.34</div>
<div class="t " style="left:235px;top:310.1px;font-size:14px;color:#ff1818;font-weight:400;"><span class="b"></span>385.23</div>
<div class="t " style="left:303px;top:310.1px;font-size:14px;color:#ff1818;font-weight:400;"><span class="b"></span>3.85%</div>
<div class="t " style="left:370px;top:310.1px;font-size:14px;color:#1ee81e;font-weight:400;"><span class="b"></span>-396.90</div>
<div class="t " style="left:446px;top:310.1px;font-size:14px;color:#1ee81e;font-weight:400;"><span class="b"></span>-3.09%</div>
<div class="t " style="left:522px;top:310.1px;font-size:14px;color:#ff1818;font-weight:400;"><span class="b"></span>25.77</div>
<div class="t " style="left:598px;top:310.1px;font-size:14px;color:#ff1818;font-weight:400;"><span class="b"></span>0.20%</div>
<div class="t " style="left:665px;top:310.1px;font-size:14px;color:#ff1818;font-weight:400;"><span class="b"></span>13167.66</div>
<div class="t " style="left:63px;top:328.1px;font-size:14px;color:#ff1818;font-weight:400;"><span class="b"></span>07.24</div>
<div class="t " style="left:123px;top:328.1px;font-size:14px;color:#ff1818;font-weight:400;"><span class="b"></span>78</div>
<div class="t " style="left:179px;top:328.1px;font-size:14px;color:#ff1818;font-weight:400;"><span class="b"></span>1.04</div>
<div class="t " style="left:235px;top:328.1px;font-size:14px;color:#ff1818;font-weight:400;"><span class="b"></span>121.85</div>
<div class="t " style="left:303px;top:328.1px;font-size:14px;color:#ff1818;font-weight:400;"><span class="b"></span>1.22%</div>
<div class="t " style="left:370px;top:328.1px;font-size:14px;color:#c8c8c8;font-weight:400;"><span class="b"></span>0.00</div>
<div class="t " style="left:446px;top:328.1px;font-size:14px;color:#c8c8c8;font-weight:400;"><span class="b"></span>0.00%</div>
<div class="t " style="left:522px;top:328.1px;font-size:14px;color:#c8c8c8;font-weight:400;"><span class="b"></span>0.00</div>
<div class="t " style="left:598px;top:328.1px;font-size:14px;color:#c8c8c8;font-weight:400;"><span class="b"></span>0.00%</div>
<div class="t " style="left:665px;top:328.1px;font-size:14px;color:#ff1818;font-weight:400;"><span class="b"></span>12782.43</div>
<div class="t " style="left:63px;top:346.1px;font-size:14px;color:#ff1818;font-weight:400;"><span class="b"></span>07.23</div>
<div class="t " style="left:123px;top:346.1px;font-size:14px;color:#ff1818;font-weight:400;"><span class="b"></span>90</div>
<div class="t " style="left:179px;top:346.1px;font-size:14px;color:#ff1818;font-weight:400;"><span class="b"></span>2.25</div>
<div class="t " style="left:235px;top:346.1px;font-size:14px;color:#ff1818;font-weight:400;"><span class="b"></span>164.68</div>
<div class="t " style="left:303px;top:346.1px;font-size:14px;color:#ff1818;font-weight:400;"><span class="b"></span>1.65%</div>
<div class="t " style="left:370px;top:346.1px;font-size:14px;color:#c8c8c8;font-weight:400;"><span class="b"></span>0.00</div>
<div class="t " style="left:446px;top:346.1px;font-size:14px;color:#c8c8c8;font-weight:400;"><span class="b"></span>0.00%</div>
<div class="t " style="left:522px;top:346.1px;font-size:14px;color:#c8c8c8;font-weight:400;"><span class="b"></span>0.00</div>
<div class="t " style="left:598px;top:346.1px;font-size:14px;color:#c8c8c8;font-weight:400;"><span class="b"></span>0.00%</div>
<div class="t " style="left:665px;top:346.1px;font-size:14px;color:#ff1818;font-weight:400;"><span class="b"></span>12660.58</div>
<div class="t " style="left:63px;top:364.1px;font-size:14px;color:#ff1818;font-weight:400;"><span class="b"></span>07.22</div>
<div class="t " style="left:123px;top:364.1px;font-size:14px;color:#ff1818;font-weight:400;"><span class="b"></span>72</div>
<div class="t " style="left:179px;top:364.1px;font-size:14px;color:#ff1818;font-weight:400;"><span class="b"></span>1.15</div>
<div class="t " style="left:235px;top:364.1px;font-size:14px;color:#ff1818;font-weight:400;"><span class="b"></span>121.95</div>
<div class="t " style="left:303px;top:364.1px;font-size:14px;color:#ff1818;font-weight:400;"><span class="b"></span>1.22%</div>
<div class="t " style="left:370px;top:364.1px;font-size:14px;color:#c8c8c8;font-weight:400;"><span class="b"></span>0.00</div>
<div class="t " style="left:446px;top:364.1px;font-size:14px;color:#c8c8c8;font-weight:400;"><span class="b"></span>0.00%</div>
<div class="t " style="left:522px;top:364.1px;font-size:14px;color:#c8c8c8;font-weight:400;"><span class="b"></span>0.00</div>
<div class="t " style="left:598px;top:364.1px;font-size:14px;color:#c8c8c8;font-weight:400;"><span class="b"></span>0.00%</div>
<div class="t " style="left:665px;top:364.1px;font-size:14px;color:#ff1818;font-weight:400;"><span class="b"></span>12495.90</div>
<div class="t " style="left:63px;top:382.1px;font-size:14px;color:#ff1818;font-weight:400;"><span class="b"></span>07.19</div>
<div class="t " style="left:123px;top:382.1px;font-size:14px;color:#ff1818;font-weight:400;"><span class="b"></span>129</div>
<div class="t " style="left:179px;top:382.1px;font-size:14px;color:#ff1818;font-weight:400;"><span class="b"></span>3.71</div>
<div class="t " style="left:235px;top:382.1px;font-size:14px;color:#ff1818;font-weight:400;"><span class="b"></span>222.66</div>
<div class="t " style="left:303px;top:382.1px;font-size:14px;color:#ff1818;font-weight:400;"><span class="b"></span>2.23%</div>
<div class="t " style="left:370px;top:382.1px;font-size:14px;color:#1ee81e;font-weight:400;"><span class="b"></span>-5.26</div>
<div class="t " style="left:446px;top:382.1px;font-size:14px;color:#1ee81e;font-weight:400;"><span class="b"></span>-0.04%</div>
<div class="t " style="left:522px;top:382.1px;font-size:14px;color:#c8c8c8;font-weight:400;"><span class="b"></span>0.00</div>
<div class="t " style="left:598px;top:382.1px;font-size:14px;color:#c8c8c8;font-weight:400;"><span class="b"></span>0.00%</div>
<div class="t " style="left:665px;top:382.1px;font-size:14px;color:#ff1818;font-weight:400;"><span class="b"></span>12373.95</div>
<div class="t " style="left:63px;top:400.1px;font-size:14px;color:#ff1818;font-weight:400;"><span class="b"></span>07.18</div>
<div class="t " style="left:123px;top:400.1px;font-size:14px;color:#ff1818;font-weight:400;"><span class="b"></span>88</div>
<div class="t " style="left:179px;top:400.1px;font-size:14px;color:#ff1818;font-weight:400;"><span class="b"></span>1.31</div>
<div class="t " style="left:235px;top:400.1px;font-size:14px;color:#ff1818;font-weight:400;"><span class="b"></span>140.59</div>
<div class="t " style="left:303px;top:400.1px;font-size:14px;color:#ff1818;font-weight:400;"><span class="b"></span>1.41%</div>
<div class="t " style="left:370px;top:400.1px;font-size:14px;color:#1ee81e;font-weight:400;"><span class="b"></span>-5.34</div>
<div class="t " style="left:446px;top:400.1px;font-size:14px;color:#1ee81e;font-weight:400;"><span class="b"></span>-0.04%</div>
<div class="t " style="left:522px;top:400.1px;font-size:14px;color:#c8c8c8;font-weight:400;"><span class="b"></span>0.00</div>
<div class="t " style="left:598px;top:400.1px;font-size:14px;color:#c8c8c8;font-weight:400;"><span class="b"></span>0.00%</div>
<div class="t " style="left:665px;top:400.1px;font-size:14px;color:#ff1818;font-weight:400;"><span class="b"></span>12151.29</div>
<div style="position:absolute;left:44px;top:413px;width:698px;height:1px;background:#0a6c90"></div>
<div class="t " style="left:63px;top:427.1px;font-size:14px;color:#ff1818;font-weight:400;"><span class="b"></span>周统计</div>
<div class="t " style="left:123px;top:427.1px;font-size:14px;color:#ff1818;font-weight:400;"><span class="b"></span>47</div>
<div class="t " style="left:179px;top:427.1px;font-size:14px;color:#ff1818;font-weight:400;"><span class="b"></span>13.93</div>
<div class="t " style="left:235px;top:427.1px;font-size:14px;color:#ff1818;font-weight:400;"><span class="b"></span>2091.64</div>
<div class="t " style="left:303px;top:427.1px;font-size:14px;color:#ff1818;font-weight:400;"><span class="b"></span>20.92%</div>
<div class="t " style="left:370px;top:427.1px;font-size:14px;color:#1ee81e;font-weight:400;"><span class="b"></span>-3927.86</div>
<div class="t " style="left:446px;top:427.1px;font-size:14px;color:#1ee81e;font-weight:400;"><span class="b"></span>-29.32%</div>
<div class="t " style="left:522px;top:427.1px;font-size:14px;color:#ff1818;font-weight:400;"><span class="b"></span>2232.77</div>
<div class="t " style="left:598px;top:427.1px;font-size:14px;color:#ff1818;font-weight:400;"><span class="b"></span>16.66%</div>
<div class="t " style="left:665px;top:427.1px;font-size:14px;color:#ff1818;font-weight:400;"><span class="b"></span>15444.90</div>
<div class="t " style="left:63px;top:445.1px;font-size:14px;color:#ff1818;font-weight:400;"><span class="b"></span>月统计</div>
<div class="t " style="left:123px;top:445.1px;font-size:14px;color:#ff1818;font-weight:400;"><span class="b"></span>1984</div>
<div class="t " style="left:179px;top:445.1px;font-size:14px;color:#ff1818;font-weight:400;"><span class="b"></span>63.64</div>
<div class="t " style="left:235px;top:445.1px;font-size:14px;color:#ff1818;font-weight:400;"><span class="b"></span>5444.90</div>
<div class="t " style="left:303px;top:445.1px;font-size:14px;color:#ff1818;font-weight:400;"><span class="b"></span>54.45%</div>
<div class="t " style="left:370px;top:445.1px;font-size:14px;color:#1ee81e;font-weight:400;"><span class="b"></span>-3927.86</div>
<div class="t " style="left:446px;top:445.1px;font-size:14px;color:#1ee81e;font-weight:400;"><span class="b"></span>-29.32%</div>
<div class="t " style="left:522px;top:445.1px;font-size:14px;color:#ff1818;font-weight:400;"><span class="b"></span>2232.77</div>
<div class="t " style="left:598px;top:445.1px;font-size:14px;color:#ff1818;font-weight:400;"><span class="b"></span>16.66%</div>
<div class="t " style="left:665px;top:445.1px;font-size:14px;color:#ff1818;font-weight:400;"><span class="b"></span>15444.90</div>
<div class="t " style="left:63px;top:463.1px;font-size:14px;color:#ff1818;font-weight:400;"><span class="b"></span>年统计</div>
<div class="t " style="left:123px;top:463.1px;font-size:14px;color:#ff1818;font-weight:400;"><span class="b"></span>1984</div>
<div class="t " style="left:179px;top:463.1px;font-size:14px;color:#ff1818;font-weight:400;"><span class="b"></span>63.64</div>
<div class="t " style="left:235px;top:463.1px;font-size:14px;color:#ff1818;font-weight:400;"><span class="b"></span>5444.90</div>
<div class="t " style="left:303px;top:463.1px;font-size:14px;color:#ff1818;font-weight:400;"><span class="b"></span>54.45%</div>
<div class="t " style="left:370px;top:463.1px;font-size:14px;color:#1ee81e;font-weight:400;"><span class="b"></span>-3927.86</div>
<div class="t " style="left:446px;top:463.1px;font-size:14px;color:#1ee81e;font-weight:400;"><span class="b"></span>-29.32%</div>
<div class="t " style="left:522px;top:463.1px;font-size:14px;color:#ff1818;font-weight:400;"><span class="b"></span>2232.77</div>
<div class="t " style="left:598px;top:463.1px;font-size:14px;color:#ff1818;font-weight:400;"><span class="b"></span>16.66%</div>
<div class="t " style="left:665px;top:463.1px;font-size:14px;color:#ff1818;font-weight:400;"><span class="b"></span>15444.90</div>
<div style="position:absolute;left:44px;top:472px;width:698px;height:1px;background:#0a6c90"></div>
<div class="t " style="left:109px;top:489.45px;font-size:13px;color:#1ee81e;font-weight:400;"><span class="b"></span>已用预付款：0.00</div>
<div class="t " style="left:298px;top:489.45px;font-size:13px;color:#1ee81e;font-weight:400;"><span class="b"></span>可用预付款：15444.26</div>
<div class="t " style="left:502px;top:489.45px;font-size:13px;color:#1ee81e;font-weight:400;"><span class="b"></span>预付款比例：10000.00%</div>
<div style="position:absolute;left:44px;top:499px;width:698px;height:24px;background:#044a69"></div>
<div class="t " style="left:113px;top:513.62px;font-size:12.5px;color:#dcdcdc;font-weight:400;"><span class="b"></span>方 向</div>
<div class="t " style="left:181px;top:513.62px;font-size:12.5px;color:#dcdcdc;font-weight:400;"><span class="b"></span>品 种</div>
<div class="t " style="left:249px;top:513.62px;font-size:12.5px;color:#dcdcdc;font-weight:400;"><span class="b"></span>单 量</div>
<div class="t " style="left:317px;top:513.62px;font-size:12.5px;color:#dcdcdc;font-weight:400;"><span class="b"></span>手 数</div>
<div class="t " style="left:385px;top:513.62px;font-size:12.5px;color:#dcdcdc;font-weight:400;"><span class="b"></span>手续费</div>
<div class="t " style="left:453px;top:513.62px;font-size:12.5px;color:#dcdcdc;font-weight:400;"><span class="b"></span>隔夜利息</div>
<div class="t " style="left:530px;top:513.62px;font-size:12.5px;color:#dcdcdc;font-weight:400;"><span class="b"></span>浮动盈亏</div>
<div class="t " style="left:619px;top:513.62px;font-size:12.5px;color:#dcdcdc;font-weight:400;"><span class="b"></span>盈亏比例</div>
<div class="t " style="left:115px;top:539.45px;font-size:13px;color:#ff1818;font-weight:400;"><span class="b"></span>[多单]</div>
<div class="t " style="left:188px;top:539.1px;font-size:14px;color:#ff1818;font-weight:400;"><span class="b"></span>1</div>
<div class="t " style="left:256px;top:539.1px;font-size:14px;color:#ff1818;font-weight:400;"><span class="b"></span>2</div>
<div class="t " style="left:319px;top:539.1px;font-size:14px;color:#ff1818;font-weight:400;"><span class="b"></span>0.02</div>
<div class="t " style="left:388px;top:539.1px;font-size:14px;color:#ff1818;font-weight:400;"><span class="b"></span>-0.12</div>
<div class="t " style="left:459px;top:539.1px;font-size:14px;color:#ff1818;font-weight:400;"><span class="b"></span>0.00</div>
<div class="t " style="left:534px;top:539.1px;font-size:14px;color:#ff1818;font-weight:400;"><span class="b"></span>2.29</div>
<div class="t " style="left:619px;top:539.1px;font-size:14px;color:#ff1818;font-weight:400;"><span class="b"></span>0.01%</div>
<div class="t " style="left:115px;top:559.45px;font-size:13px;color:#1ee81e;font-weight:400;"><span class="b"></span>[空单]</div>
<div class="t " style="left:188px;top:559.1px;font-size:14px;color:#1ee81e;font-weight:400;"><span class="b"></span>1</div>
<div class="t " style="left:256px;top:559.1px;font-size:14px;color:#1ee81e;font-weight:400;"><span class="b"></span>2</div>
<div class="t " style="left:319px;top:559.1px;font-size:14px;color:#1ee81e;font-weight:400;"><span class="b"></span>0.02</div>
<div class="t " style="left:388px;top:559.1px;font-size:14px;color:#1ee81e;font-weight:400;"><span class="b"></span>-0.12</div>
<div class="t " style="left:459px;top:559.1px;font-size:14px;color:#1ee81e;font-weight:400;"><span class="b"></span>0.00</div>
<div class="t " style="left:534px;top:559.1px;font-size:14px;color:#1ee81e;font-weight:400;"><span class="b"></span>-2.93</div>
<div class="t " style="left:619px;top:559.1px;font-size:14px;color:#1ee81e;font-weight:400;"><span class="b"></span>-0.02%</div>
<div class="t " style="left:115px;top:587.45px;font-size:13px;color:#1ee81e;font-weight:400;"><span class="b"></span>[总持仓]</div>
<div class="t " style="left:188px;top:587.1px;font-size:14px;color:#1ee81e;font-weight:400;"><span class="b"></span>1</div>
<div class="t " style="left:256px;top:587.1px;font-size:14px;color:#1ee81e;font-weight:400;"><span class="b"></span>4</div>
<div class="t " style="left:319px;top:587.1px;font-size:14px;color:#1ee81e;font-weight:400;"><span class="b"></span>0.04</div>
<div class="t " style="left:388px;top:587.1px;font-size:14px;color:#1ee81e;font-weight:400;"><span class="b"></span>-0.24</div>
<div class="t " style="left:459px;top:587.1px;font-size:14px;color:#1ee81e;font-weight:400;"><span class="b"></span>0.00</div>
<div class="t " style="left:534px;top:587.1px;font-size:14px;color:#1ee81e;font-weight:400;"><span class="b"></span>-0.64</div>
<div class="t " style="left:619px;top:587.1px;font-size:14px;color:#1ee81e;font-weight:400;"><span class="b"></span>-0.00%</div>
<div style="position:absolute;left:44px;top:569px;width:698px;height:1px;background:#0a6c90"></div>
<div style="position:absolute;left:44px;top:600px;width:698px;height:1px;background:#0a6c90"></div>
<div class="t " style="left:109px;top:617.05px;font-size:17px;color:#ff1818;font-weight:400;"><span class="b"></span>净值：15444.26</div>
<div class="t " style="left:298px;top:617.05px;font-size:17px;color:#ff1818;font-weight:400;"><span class="b"></span>净值盈亏：5444.26</div>
<div class="t " style="left:502px;top:617.05px;font-size:17px;color:#ff1818;font-weight:400;"><span class="b"></span>净值盈利率：54.44%</div>
<div style="position:absolute;left:44px;top:632px;width:698px;height:1px;background:#0a6c90"></div>
<div style="position:absolute;left:44px;top:634px;width:174px;height:28px;background:#044a69;border:1px solid #0a6c90"></div>
<div class="t " style="left:131.0px;transform:translateX(-50%);top:649.75px;font-size:15px;color:#f0f0f0;font-weight:400;"><span class="b"></span>仓位使用比例:0.00%</div>
<div style="position:absolute;left:219px;top:634px;width:173px;height:28px;background:#044a69;border:1px solid #0a6c90"></div>
<div class="t " style="left:305.5px;transform:translateX(-50%);top:649.75px;font-size:15px;color:#f0f0f0;font-weight:400;"><span class="b"></span>持仓净手数:0.00</div>
<div style="position:absolute;left:394px;top:634px;width:173px;height:28px;background:#044a69;border:1px solid #0a6c90"></div>
<div class="t " style="left:480.5px;transform:translateX(-50%);top:649.75px;font-size:15px;color:#f0f0f0;font-weight:400;"><span class="b"></span>可亏损点数:0</div>
<div style="position:absolute;left:569px;top:634px;width:173px;height:28px;background:#044a69;border:1px solid #0a6c90"></div>
<div class="t " style="left:655.5px;transform:translateX(-50%);top:649.75px;font-size:15px;color:#f0f0f0;font-weight:400;"><span class="b"></span>离暴仓点数:0</div>
<div style="position:absolute;left:20px;top:260px;width:23px;height:21px;background:#03080d;border:1px solid #0a6c90;border-right:none;border-radius:3px 0 0 3px"></div>
<div class="t " style="left:31.5px;transform:translateX(-50%);top:271.45px;font-size:13px;color:#e6e6e6;font-weight:400;"><span class="b"></span>日</div>
<div style="position:absolute;left:20px;top:288px;width:23px;height:21px;background:#03080d;border:1px solid #0a6c90;border-right:none;border-radius:3px 0 0 3px"></div>
<div class="t " style="left:31.5px;transform:translateX(-50%);top:299.45px;font-size:13px;color:#e6e6e6;font-weight:400;"><span class="b"></span>周</div>
<div style="position:absolute;left:20px;top:315px;width:23px;height:21px;background:#03080d;border:1px solid #0a6c90;border-right:none;border-radius:3px 0 0 3px"></div>
<div class="t " style="left:31.5px;transform:translateX(-50%);top:326.45px;font-size:13px;color:#e6e6e6;font-weight:400;"><span class="b"></span>月</div>
<div style="position:absolute;left:20px;top:343px;width:23px;height:21px;background:#03080d;border:1px solid #0a6c90;border-right:none;border-radius:3px 0 0 3px"></div>
<div class="t " style="left:31.5px;transform:translateX(-50%);top:354.45px;font-size:13px;color:#e6e6e6;font-weight:400;"><span class="b"></span>年</div>
<div style="position:absolute;left:11px;top:370px;width:32px;height:22px;background:#03080d;border:1px solid #0a6c90;border-right:none;border-radius:3px 0 0 3px"></div>
<div class="t " style="left:27px;transform:translateX(-50%);top:382.45px;font-size:13px;color:#e6e6e6;font-weight:400;"><span class="b"></span>单币</div>
<div style="position:absolute;left:11px;top:399px;width:32px;height:22px;background:#03080d;border:1px solid #0a6c90;border-right:none;border-radius:3px 0 0 3px"></div>
<div class="t " style="left:27px;transform:translateX(-50%);top:411.45px;font-size:13px;color:#e6e6e6;font-weight:400;"><span class="b"></span>持仓</div>
<div style="position:absolute;left:11px;top:427px;width:32px;height:22px;background:#03080d;border:1px solid #0a6c90;border-right:none;border-radius:3px 0 0 3px"></div>
<div class="t " style="left:27px;transform:translateX(-50%);top:439.45px;font-size:13px;color:#e6e6e6;font-weight:400;"><span class="b"></span>品种</div>
<div style="position:absolute;left:11px;top:455px;width:32px;height:22px;background:#03080d;border:1px solid #0a6c90;border-right:none;border-radius:3px 0 0 3px"></div>
<div class="t " style="left:27px;transform:translateX(-50%);top:467.45px;font-size:13px;color:#e6e6e6;font-weight:400;"><span class="b"></span>魔号</div>
<div style="position:absolute;left:11px;top:483px;width:32px;height:22px;background:#03080d;border:1px solid #0a6c90;border-right:none;border-radius:3px 0 0 3px"></div>
<div class="t " style="left:27px;transform:translateX(-50%);top:495.45px;font-size:13px;color:#e6e6e6;font-weight:400;"><span class="b"></span>波幅</div>
<div style="position:absolute;left:11px;top:511px;width:32px;height:22px;background:#03080d;border:1px solid #0a6c90;border-right:none;border-radius:3px 0 0 3px"></div>
<div class="t " style="left:27px;transform:translateX(-50%);top:523.45px;font-size:13px;color:#e6e6e6;font-weight:400;"><span class="b"></span>属性</div>
<div style="position:absolute;left:11px;top:539px;width:32px;height:22px;background:#03080d;border:1px solid #0a6c90;border-right:none;border-radius:3px 0 0 3px"></div>
<div class="t " style="left:27px;transform:translateX(-50%);top:551.45px;font-size:13px;color:#e6e6e6;font-weight:400;"><span class="b"></span>大字</div>
<div style="position:absolute;left:11px;top:567px;width:32px;height:22px;background:#03080d;border:1px solid #0a6c90;border-right:none;border-radius:3px 0 0 3px"></div>
<div class="t " style="left:27px;transform:translateX(-50%);top:579.45px;font-size:13px;color:#e6e6e6;font-weight:400;"><span class="b"></span>VIP</div>
<div style="position:absolute;left:751px;top:156px;width:370px;height:30px;background:#03080d"></div>
<div style="position:absolute;left:751px;top:190px;width:370px;height:600px;background:#03080d"></div>
<svg style="position:absolute;left:0;top:0" width="1200" height="800"><g stroke="#0a7ea6" stroke-width="1.2" stroke-dasharray="3.8 2.6" fill="none"><path d="M751.5 156.5H1121.5"/><path d="M751.5 185.5H1121.5"/><path d="M751.5 156V186"/><path d="M1121.5 156V186"/><path d="M751.5 190.5H1121.5"/><path d="M751.5 219.5H1121.5"/><path d="M751.5 248.5H1121.5"/><path d="M751.5 289.5H1121.5"/><path d="M751.5 330.5H1121.5"/><path d="M751.5 371.5H1121.5"/><path d="M751.5 412.5H1121.5"/><path d="M751.5 453.5H1121.5"/><path d="M751.5 522.5H1121.5"/><path d="M751.5 559.5H1121.5"/><path d="M751.5 596.5H1121.5"/><path d="M751.5 633.5H1121.5"/><path d="M751.5 670.5H1121.5"/><path d="M751.5 707.5H1121.5"/><path d="M751.5 744.5H1121.5"/><path d="M751.5 190V800"/><path d="M1121.5 190V800"/></g></svg>
<div class="t " style="left:765px;top:172.28px;font-size:13.5px;color:#e6e6e6;font-weight:400;"><span class="b"></span>温馨提示：在帐户历史中，右击选择&lt;所有交易记录&gt;</div>
<div style="position:absolute;left:1091px;top:162px;width:22px;height:19px;border:1px solid #4a7a9a"></div>
<svg style="position:absolute;left:1096px;top:166px" width="12" height="11"><path d="M1 1L11 10M11 1L1 10" stroke="#fff" stroke-width="1.4"/></svg>
<div class="t " style="left:765px;top:206.28px;font-size:13.5px;color:#e6e6e6;font-weight:400;"><span class="b"></span>平台杠杆：500</div>
<div class="t " style="left:876px;top:206.28px;font-size:13.5px;color:#e6e6e6;font-weight:400;"><span class="b"></span>帐户类型：模拟帐户</div>
<div class="t " style="left:1011px;top:206.28px;font-size:13.5px;color:#e6e6e6;font-weight:400;"><span class="b"></span>平台支持EA交易</div>
<div class="t " style="left:765px;top:235.28px;font-size:13.5px;color:#e6e6e6;font-weight:400;"><span class="b"></span>开户日期：2024.07.04 存活了18个交易日  交易周期：5周</div>
<div class="t " style="right:2062px;top:270.45px;font-size:13px;color:#e6e6e6;font-weight:400;"><span class="b"></span>总盈亏金额:</div>
<div class="t " style="left:937px;top:268.35px;font-size:19px;color:#ffff00;font-weight:400;"><span class="b"></span>5444.90</div>
<div class="t " style="left:766px;top:304.45px;font-size:13px;color:#e6e6e6;font-weight:400;"><span class="b"></span>盈利率</div>
<div class="t " style="left:766px;top:318.18px;font-size:19.5px;color:#ffff00;font-weight:400;"><span class="b"></span>54.45%</div>
<div class="t " style="left:862px;top:304.45px;font-size:13px;color:#e6e6e6;font-weight:400;"><span class="b"></span>利润因子</div>
<div class="t " style="left:862px;top:318.18px;font-size:19.5px;color:#ffff00;font-weight:400;"><span class="b"></span>2.01</div>
<div class="t " style="left:958px;top:304.45px;font-size:13px;color:#e6e6e6;font-weight:400;"><span class="b"></span>准确率</div>
<div class="t " style="left:958px;top:318.18px;font-size:19.5px;color:#ffff00;font-weight:400;"><span class="b"></span>70.46%</div>
<div class="t " style="left:1054px;top:304.45px;font-size:13px;color:#e6e6e6;font-weight:400;"><span class="b"></span>盈亏比</div>
<div class="t " style="left:1054px;top:318.18px;font-size:19.5px;color:#ffff00;font-weight:400;"><span class="b"></span>0.84</div>
<div class="t " style="left:766px;top:345.45px;font-size:13px;color:#e6e6e6;font-weight:400;"><span class="b"></span>最大浮亏</div>
<div class="t " style="left:766px;top:359.18px;font-size:19.5px;color:#ffff00;font-weight:400;"><span class="b"></span>-3927.86</div>
<div class="t " style="left:862px;top:345.45px;font-size:13px;color:#e6e6e6;font-weight:400;"><span class="b"></span>余额回撤</div>
<div class="t " style="left:862px;top:359.18px;font-size:19.5px;color:#ffff00;font-weight:400;"><span class="b"></span>-29.32%</div>
<div class="t " style="left:958px;top:345.45px;font-size:13px;color:#e6e6e6;font-weight:400;"><span class="b"></span>最小净值</div>
<div class="t " style="left:958px;top:359.18px;font-size:19.5px;color:#ffff00;font-weight:400;"><span class="b"></span>2791.45</div>
<div class="t " style="left:1054px;top:345.45px;font-size:13px;color:#e6e6e6;font-weight:400;"><span class="b"></span>本金回撤</div>
<div class="t " style="left:1054px;top:359.18px;font-size:19.5px;color:#ffff00;font-weight:400;"><span class="b"></span>72.09%</div>
<div class="t " style="left:766px;top:386.45px;font-size:13px;color:#e6e6e6;font-weight:400;"><span class="b"></span>总入金</div>
<div class="t " style="left:766px;top:400.18px;font-size:19.5px;color:#ffff00;font-weight:400;"><span class="b"></span>10000.00</div>
<div class="t " style="left:862px;top:386.45px;font-size:13px;color:#e6e6e6;font-weight:400;"><span class="b"></span>入金次数</div>
<div class="t " style="left:862px;top:400.18px;font-size:19.5px;color:#ffff00;font-weight:400;"><span class="b"></span>1</div>
<div class="t " style="left:958px;top:386.45px;font-size:13px;color:#e6e6e6;font-weight:400;"><span class="b"></span>总出金</div>
<div class="t " style="left:958px;top:400.18px;font-size:19.5px;color:#ffff00;font-weight:400;"><span class="b"></span>0.00</div>
<div class="t " style="left:1054px;top:386.45px;font-size:13px;color:#e6e6e6;font-weight:400;"><span class="b"></span>出金次数</div>
<div class="t " style="left:1054px;top:400.18px;font-size:19.5px;color:#ffff00;font-weight:400;"><span class="b"></span>0</div>
<div class="t " style="left:846px;top:427.45px;font-size:13px;color:#e6e6e6;font-weight:400;"><span class="b"></span>最大占保证金</div>
<div class="t " style="left:846px;top:441.18px;font-size:19.5px;color:#ffff00;font-weight:400;"><span class="b"></span>6225.63</div>
<div class="t " style="left:958px;top:427.45px;font-size:13px;color:#e6e6e6;font-weight:400;"><span class="b"></span>最大使用仓位</div>
<div class="t " style="left:958px;top:441.18px;font-size:19.5px;color:#ffff00;font-weight:400;"><span class="b"></span>46.48%</div>
<div class="t " style="left:781px;top:469.45px;font-size:13px;color:#e6e6e6;font-weight:400;"><span class="b"></span>日均收益</div>
<div class="t " style="left:869px;top:469.27px;font-size:13.5px;color:#e6e6e6;font-weight:400;"><span class="b"></span>302.49</div>
<div class="t " style="left:941px;top:469.27px;font-size:13.5px;color:#e6e6e6;font-weight:400;"><span class="b"></span>3.02%</div>
<div class="t " style="left:781px;top:489.45px;font-size:13px;color:#e6e6e6;font-weight:400;"><span class="b"></span>周均收益</div>
<div class="t " style="left:869px;top:489.27px;font-size:13.5px;color:#e6e6e6;font-weight:400;"><span class="b"></span>1512.47</div>
<div class="t " style="left:941px;top:489.27px;font-size:13.5px;color:#e6e6e6;font-weight:400;"><span class="b"></span>15.12%</div>
<div class="t " style="left:781px;top:509.45px;font-size:13px;color:#e6e6e6;font-weight:400;"><span class="b"></span>月均收益</div>
<div class="t " style="left:869px;top:509.27px;font-size:13.5px;color:#e6e6e6;font-weight:400;"><span class="b"></span>6654.88</div>
<div class="t " style="left:941px;top:509.27px;font-size:13.5px;color:#e6e6e6;font-weight:400;"><span class="b"></span>66.55%</div>
<div class="t " style="left:1021px;top:469.45px;font-size:13px;color:#e6e6e6;font-weight:400;"><span class="b"></span>预期年化收益</div>
<div class="t " style="left:1021px;top:491.35px;font-size:19px;color:#ffff00;font-weight:400;"><span class="b"></span>798.59%</div>
<div class="t " style="left:766px;top:535.45px;font-size:13px;color:#e6e6e6;font-weight:400;"><span class="b"></span>交易手数</div>
<div class="t " style="left:766px;top:550.17px;font-size:19.5px;color:#ffff00;font-weight:400;"><span class="b"></span>63.64</div>
<div class="t " style="left:862px;top:535.45px;font-size:13px;color:#e6e6e6;font-weight:400;"><span class="b"></span>日均手数</div>
<div class="t " style="left:862px;top:550.17px;font-size:19.5px;color:#ffff00;font-weight:400;"><span class="b"></span>3.54</div>
<div class="t " style="left:958px;top:535.45px;font-size:13px;color:#e6e6e6;font-weight:400;"><span class="b"></span>周均手数</div>
<div class="t " style="left:958px;top:550.17px;font-size:19.5px;color:#ffff00;font-weight:400;"><span class="b"></span>17.68</div>
<div class="t " style="left:1054px;top:535.45px;font-size:13px;color:#e6e6e6;font-weight:400;"><span class="b"></span>月均手数</div>
<div class="t " style="left:1054px;top:550.17px;font-size:19.5px;color:#ffff00;font-weight:400;"><span class="b"></span>77.78</div>
<div class="t " style="left:766px;top:573.45px;font-size:13px;color:#e6e6e6;font-weight:400;"><span class="b"></span>交易笔数</div>
<div class="t " style="left:766px;top:588.17px;font-size:19.5px;color:#ffff00;font-weight:400;"><span class="b"></span>1984</div>
<div class="t " style="left:862px;top:573.45px;font-size:13px;color:#e6e6e6;font-weight:400;"><span class="b"></span>盈利笔数</div>
<div class="t " style="left:862px;top:588.17px;font-size:19.5px;color:#ffff00;font-weight:400;"><span class="b"></span>1398</div>
<div class="t " style="left:958px;top:573.45px;font-size:13px;color:#e6e6e6;font-weight:400;"><span class="b"></span>亏损笔数</div>
<div class="t " style="left:958px;top:588.17px;font-size:19.5px;color:#ffff00;font-weight:400;"><span class="b"></span>584</div>
<div class="t " style="left:1054px;top:573.45px;font-size:13px;color:#e6e6e6;font-weight:400;"><span class="b"></span>交易频率</div>
<div class="t " style="left:1054px;top:588.17px;font-size:19.5px;color:#ffff00;font-weight:400;"><span class="b"></span>110笔/天</div>
<div class="t " style="left:766px;top:609.45px;font-size:13px;color:#e6e6e6;font-weight:400;"><span class="b"></span>最大手数</div>
<div class="t " style="left:766px;top:624.17px;font-size:19.5px;color:#ffff00;font-weight:400;"><span class="b"></span>13.00</div>
<div class="t " style="left:862px;top:609.45px;font-size:13px;color:#e6e6e6;font-weight:400;"><span class="b"></span>最小手数</div>
<div class="t " style="left:862px;top:624.17px;font-size:19.5px;color:#ffff00;font-weight:400;"><span class="b"></span>0.01</div>
<div class="t " style="left:950px;top:609.45px;font-size:13px;color:#e6e6e6;font-weight:400;"><span class="b"></span>平均开仓手数</div>
<div class="t " style="left:958px;top:624.17px;font-size:19.5px;color:#ffff00;font-weight:400;"><span class="b"></span>0.03</div>
<div class="t " style="left:1046px;top:609.45px;font-size:13px;color:#e6e6e6;font-weight:400;"><span class="b"></span>每手平均盈亏</div>
<div class="t " style="left:1054px;top:624.17px;font-size:19.5px;color:#ffff00;font-weight:400;"><span class="b"></span>85.56</div>
<div class="t " style="left:766px;top:647.45px;font-size:13px;color:#e6e6e6;font-weight:400;"><span class="b"></span>最大盈利</div>
<div class="t " style="left:766px;top:662.17px;font-size:19.5px;color:#ffff00;font-weight:400;"><span class="b"></span>2041.00</div>
<div class="t " style="left:862px;top:647.45px;font-size:13px;color:#e6e6e6;font-weight:400;"><span class="b"></span>最大亏损</div>
<div class="t " style="left:862px;top:662.17px;font-size:19.5px;color:#ffff00;font-weight:400;"><span class="b"></span>-117.93</div>
<div class="t " style="left:958px;top:647.45px;font-size:13px;color:#e6e6e6;font-weight:400;"><span class="b"></span>平均盈利</div>
<div class="t " style="left:958px;top:662.17px;font-size:19.5px;color:#ffff00;font-weight:400;"><span class="b"></span>7.76</div>
<div class="t " style="left:1054px;top:647.45px;font-size:13px;color:#e6e6e6;font-weight:400;"><span class="b"></span>平均亏损</div>
<div class="t " style="left:1054px;top:662.17px;font-size:19.5px;color:#ffff00;font-weight:400;"><span class="b"></span>-9.25</div>
<div class="t " style="left:766px;top:683.45px;font-size:13px;color:#e6e6e6;font-weight:400;"><span class="b"></span>手工交易</div>
<div class="t " style="left:766px;top:698.17px;font-size:19.5px;color:#ffff00;font-weight:400;"><span class="b"></span>1笔</div>
<div class="t " style="left:862px;top:683.45px;font-size:13px;color:#e6e6e6;font-weight:400;"><span class="b"></span>EA交易</div>
<div class="t " style="left:862px;top:698.17px;font-size:19.5px;color:#ffff00;font-weight:400;"><span class="b"></span>1983笔</div>
<div class="t " style="left:958px;top:683.45px;font-size:13px;color:#e6e6e6;font-weight:400;"><span class="b"></span>手工盈亏</div>
<div class="t " style="left:958px;top:698.17px;font-size:19.5px;color:#ffff00;font-weight:400;"><span class="b"></span>2041.00</div>
<div class="t " style="left:1054px;top:683.45px;font-size:13px;color:#e6e6e6;font-weight:400;"><span class="b"></span>EA盈亏</div>
<div class="t " style="left:1054px;top:698.17px;font-size:19.5px;color:#ffff00;font-weight:400;"><span class="b"></span>3403.90</div>
<div class="t " style="left:766px;top:721.45px;font-size:13px;color:#e6e6e6;font-weight:400;"><span class="b"></span>多笔数</div>
<div class="t " style="left:766px;top:736.17px;font-size:19.5px;color:#ffff00;font-weight:400;"><span class="b"></span>1015笔</div>
<div class="t " style="left:862px;top:721.45px;font-size:13px;color:#e6e6e6;font-weight:400;"><span class="b"></span>空笔数</div>
<div class="t " style="left:862px;top:736.17px;font-size:19.5px;color:#ffff00;font-weight:400;"><span class="b"></span>969笔</div>
<div class="t " style="left:958px;top:721.45px;font-size:13px;color:#e6e6e6;font-weight:400;"><span class="b"></span>平均持仓时长</div>
<div class="t " style="left:958px;top:736.17px;font-size:19.5px;color:#ffff00;font-weight:400;"><span class="b"></span>3小时22分</div>
<div class="t " style="left:1054px;top:721.45px;font-size:13px;color:#e6e6e6;font-weight:400;"><span class="b"></span>交易品种</div>
<div class="t " style="left:1054px;top:736.17px;font-size:19.5px;color:#ffff00;font-weight:400;"><span class="b"></span> 5</div>
<div class="t " style="left:765px;top:760.45px;font-size:13px;color:#e6e6e6;font-weight:400;"><span class="b"></span>当前帐号</div>
<div style="position:absolute;left:818px;top:748px;width:60px;height:22px;background:linear-gradient(90deg,#3a3f44,#1a1f24,#4a4f55,#22272c)"></div>
<div style="position:absolute;left:830px;top:760px;width:50px;height:12px;background:#15191d"></div>
<div class="t " style="left:884px;top:760.27px;font-size:13.5px;color:#e6e6e6;font-weight:400;"><span class="b"></span>服务器：DooPrime-Demo</div>
<div style="position:absolute;left:5px;top:455px;width:1.5px;height:21px;background:#20e020"></div>
<div style="position:absolute;left:5px;top:436px;width:1px;height:5px;background:#20e020"></div>
<div style="position:absolute;left:2px;top:771px;width:2905px;height:32px;background:#000"></div>
<div style="position:absolute;left:4px;top:770px;width:2903px;height:1px;background:#fff"></div>
<div style="position:absolute;left:5px;top:771px;width:1px;height:4px;background:#fff"></div>
<div class="t " style="left:6px;top:786.7px;font-size:18px;color:#fff;font-weight:400;"><span class="b"></span>17 May 2024</div>
<div style="position:absolute;left:133px;top:771px;width:1px;height:4px;background:#fff"></div>
<div class="t " style="left:134px;top:786.7px;font-size:18px;color:#fff;font-weight:400;"><span class="b"></span>22 May 08:00</div>
<div style="position:absolute;left:261px;top:771px;width:1px;height:4px;background:#fff"></div>
<div class="t " style="left:262px;top:786.7px;font-size:18px;color:#fff;font-weight:400;"><span class="b"></span>27 May 03:00</div>
<div style="position:absolute;left:389px;top:771px;width:1px;height:4px;background:#fff"></div>
<div class="t " style="left:390px;top:786.7px;font-size:18px;color:#fff;font-weight:400;"><span class="b"></span>30 May 01:00</div>
<div style="position:absolute;left:517px;top:771px;width:1px;height:4px;background:#fff"></div>
<div class="t " style="left:518px;top:786.7px;font-size:18px;color:#fff;font-weight:400;"><span class="b"></span>3 Jun 19:00</div>
<div style="position:absolute;left:645px;top:771px;width:1px;height:4px;background:#fff"></div>
<div class="t " style="left:646px;top:786.7px;font-size:18px;color:#fff;font-weight:400;"><span class="b"></span>6 Jun 14:00</div>
<div style="position:absolute;left:773px;top:771px;width:1px;height:4px;background:#fff"></div>
<div class="t " style="left:774px;top:786.7px;font-size:18px;color:#fff;font-weight:400;"><span class="b"></span>11 Jun 09:00</div>
<div style="position:absolute;left:901px;top:771px;width:1px;height:4px;background:#fff"></div>
<div class="t " style="left:902px;top:786.7px;font-size:18px;color:#fff;font-weight:400;"><span class="b"></span>14 Jun 04:00</div>
<div style="position:absolute;left:1029px;top:771px;width:1px;height:4px;background:#fff"></div>
<div class="t " style="left:1030px;top:786.7px;font-size:18px;color:#fff;font-weight:400;"><span class="b"></span>18 Jun 22:00</div>
<div style="position:absolute;left:1157px;top:771px;width:1px;height:4px;background:#fff"></div>
<div class="t " style="left:1158px;top:786.7px;font-size:18px;color:#fff;font-weight:400;"><span class="b"></span>21 Jun 23:00</div>
<div style="position:absolute;left:1285px;top:771px;width:1px;height:4px;background:#fff"></div>
<div class="t " style="left:1286px;top:786.7px;font-size:18px;color:#fff;font-weight:400;"><span class="b"></span>26 Jun 18:00</div>
<div style="position:absolute;left:1414px;top:771px;width:1px;height:4px;background:#fff"></div>
<div class="t " style="left:1415px;top:786.7px;font-size:18px;color:#fff;font-weight:400;"><span class="b"></span>1 Jul 13:00</div>
<div style="position:absolute;left:1542px;top:771px;width:1px;height:4px;background:#fff"></div>
<div class="t " style="left:1543px;top:786.7px;font-size:18px;color:#fff;font-weight:400;"><span class="b"></span>4 Jul 08:00</div>
<div style="position:absolute;left:1670px;top:771px;width:1px;height:4px;background:#fff"></div>
<div class="t " style="left:1671px;top:786.7px;font-size:18px;color:#fff;font-weight:400;"><span class="b"></span>9 Jul 06:00</div>
<div style="position:absolute;left:1798px;top:771px;width:1px;height:4px;background:#fff"></div>
<div class="t " style="left:1799px;top:786.7px;font-size:18px;color:#fff;font-weight:400;"><span class="b"></span>12 Jul 01:00</div>
<div style="position:absolute;left:1926px;top:771px;width:1px;height:4px;background:#fff"></div>
<div class="t " style="left:1927px;top:786.7px;font-size:18px;color:#fff;font-weight:400;"><span class="b"></span>16 Jul 19:00</div>
<div style="position:absolute;left:2054px;top:771px;width:1px;height:4px;background:#fff"></div>
<div class="t " style="left:2055px;top:786.7px;font-size:18px;color:#fff;font-weight:400;"><span class="b"></span>19 Jul 14:00</div>
<div style="position:absolute;left:2182px;top:771px;width:1px;height:4px;background:#fff"></div>
<div class="t " style="left:2183px;top:786.7px;font-size:18px;color:#fff;font-weight:400;"><span class="b"></span>24 Jul 09:00</div>
<div style="position:absolute;left:2310px;top:771px;width:1px;height:4px;background:#fff"></div>
<div class="t " style="left:2311px;top:786.7px;font-size:18px;color:#fff;font-weight:400;"><span class="b"></span>29 Jul 04:00</div>
<div style="position:absolute;left:0px;top:803px;width:2999px;height:43px;background:#f0f0f0"></div>
<div style="position:absolute;left:0px;top:805px;width:2px;height:40px;background:#a0a0a0"></div>
<div style="position:absolute;left:0px;top:805px;width:2999px;height:1px;background:#000"></div>
<div style="position:absolute;left:8px;top:805px;width:180px;height:41px;background:#fff;border:1px solid #000;border-bottom:2px solid #000"></div>
<div class="t " style="left:28px;top:823.77px;font-size:23.5px;color:#000;font-weight:400;"><span class="b"></span>XAUUSD,H1</div>
<div class="t " style="left:208px;top:823.77px;font-size:23.5px;color:#707070;font-weight:400;"><span class="b"></span>XAUUSD,H1</div>
<div style="position:absolute;left:368px;top:812px;width:1px;height:30px;background:#a0a0a0"></div>
<div class="t " style="left:388px;top:823.77px;font-size:23.5px;color:#707070;font-weight:400;"><span class="b"></span>XAUUSD,M5</div>
<div style="position:absolute;left:552px;top:812px;width:1px;height:30px;background:#a0a0a0"></div>
<div class="t " style="left:573px;top:823.77px;font-size:23.5px;color:#707070;font-weight:400;"><span class="b"></span>XAUUSD,M15</div>
<div style="position:absolute;left:752px;top:812px;width:1px;height:30px;background:#a0a0a0"></div>
<div class="t " style="left:772px;top:823.77px;font-size:23.5px;color:#707070;font-weight:400;"><span class="b"></span>XAUUSD,M1</div>
<div style="position:absolute;left:936px;top:812px;width:1px;height:30px;background:#a0a0a0"></div>
<svg style="position:absolute;left:2930px;top:815px" width="60" height="16"><path d="M13.5 1L7 8L13.5 15Z" fill="#9a9a9a"/><path d="M45.5 1L52 8L45.5 15Z" fill="#9a9a9a"/></svg>
<div style="position:absolute;left:0px;top:846px;width:2999px;height:1012px;background:#f0f0f0"></div>
<svg style="position:absolute;left:9px;top:858px" width="13" height="13"><path d="M1 1L12 12M12 1L1 12" stroke="#000" stroke-width="2"/></svg>
<div style="position:absolute;left:4px;top:883px;width:26px;height:967px;background:linear-gradient(#bad1ea,#97b5d8)"></div>
<div style="position:absolute;left:-6px;top:1811px;width:46px;height:24px;font-size:22px;line-height:24px;color:#3a3a3a;transform:rotate(-90deg);text-align:center;white-space:nowrap">终端</div>
<div style="position:absolute;left:32px;top:855px;width:2926px;height:957px;background:#fff;border-top:1px solid #a0a0a0;border-left:1px solid #a0a0a0"></div>
<div style="position:absolute;left:2958px;top:856px;width:36px;height:995px;background:#f0f0f0;border-right:1px solid #dcdcdc"></div>
<div style="position:absolute;left:2966px;top:1745px;width:19px;height:34px;background:#8a8a8a"></div>
<div class="t " style="left:39px;top:875.6px;font-size:24px;color:#000;font-weight:400;"><span class="b"></span>订单</div>
<div style="position:absolute;left:247px;top:856px;width:1px;height:39px;background:#dcdcdc"></div>
<div class="t " style="right:2411px;top:875.6px;font-size:24px;color:#000;font-weight:400;"><span class="b"></span>时间</div>
<div style="position:absolute;left:611px;top:856px;width:1px;height:39px;background:#dcdcdc"></div>
<div class="t " style="right:2227px;top:875.6px;font-size:24px;color:#000;font-weight:400;"><span class="b"></span>类型</div>
<div style="position:absolute;left:777px;top:856px;width:1px;height:39px;background:#dcdcdc"></div>
<div class="t " style="right:2094px;top:875.6px;font-size:24px;color:#000;font-weight:400;"><span class="b"></span>手数</div>
<div style="position:absolute;left:910px;top:856px;width:1px;height:39px;background:#dcdcdc"></div>
<div class="t " style="right:1928px;top:875.6px;font-size:24px;color:#000;font-weight:400;"><span class="b"></span>交易品种</div>
<div style="position:absolute;left:1076px;top:856px;width:1px;height:39px;background:#dcdcdc"></div>
<div class="t " style="right:1762px;top:875.6px;font-size:24px;color:#000;font-weight:400;"><span class="b"></span>价格</div>
<div style="position:absolute;left:1242px;top:856px;width:1px;height:39px;background:#dcdcdc"></div>
<div class="t " style="right:1596px;top:875.6px;font-size:24px;color:#000;font-weight:400;"><span class="b"></span>止损</div>
<div style="position:absolute;left:1408px;top:856px;width:1px;height:39px;background:#dcdcdc"></div>
<div class="t " style="right:1430px;top:875.6px;font-size:24px;color:#000;font-weight:400;"><span class="b"></span>止盈</div>
<div style="position:absolute;left:1574px;top:856px;width:1px;height:39px;background:#dcdcdc"></div>
<div class="t " style="right:1065px;top:875.6px;font-size:24px;color:#000;font-weight:400;"><span class="b"></span>时间</div>
<div style="position:absolute;left:1939px;top:856px;width:1px;height:39px;background:#dcdcdc"></div>
<div class="t " style="right:899px;top:875.6px;font-size:24px;color:#000;font-weight:400;"><span class="b"></span>价格</div>
<div style="position:absolute;left:2105px;top:856px;width:1px;height:39px;background:#dcdcdc"></div>
<div class="t " style="right:733px;top:875.6px;font-size:24px;color:#000;font-weight:400;"><span class="b"></span>库存费</div>
<div style="position:absolute;left:2271px;top:856px;width:1px;height:39px;background:#dcdcdc"></div>
<div class="t " style="right:551px;top:875.6px;font-size:24px;color:#000;font-weight:400;"><span class="b"></span>获利</div>
<div style="position:absolute;left:2453px;top:856px;width:1px;height:39px;background:#dcdcdc"></div>
<div class="t " style="right:47px;top:875.6px;font-size:24px;color:#000;font-weight:400;"><span class="b"></span>注释</div>
<div class="t " style="right:2396px;top:875.8px;font-size:12px;color:#888;font-weight:400;"><span class="b"></span>⁄</div>
<div style="position:absolute;left:33px;top:894px;width:2925px;height:1px;background:#c8c8c8"></div>
<svg width="0" height="0" style="position:absolute"><defs><linearGradient id="docg" x1="0" y1="0" x2="1" y2="1"><stop offset="0" stop-color="#ffffff"/><stop offset="1" stop-color="#dcdcdc"/></linearGradient><radialGradient id="gb" cx="0.4" cy="0.35" r="0.7"><stop offset="0" stop-color="#8fd4ff"/><stop offset="0.5" stop-color="#1a9ef0"/><stop offset="1" stop-color="#0a5cb0"/></radialGradient><radialGradient id="gs" cx="0.4" cy="0.35" r="0.7"><stop offset="0" stop-color="#ffb08a"/><stop offset="0.5" stop-color="#f04a14"/><stop offset="1" stop-color="#b02a08"/></radialGradient></defs></svg>
<div style="position:absolute;left:33px;top:895px;width:2925px;height:39px;background:#ebebeb"></div>
<div style="position:absolute;left:33px;top:933px;width:2925px;height:1px;background:#d2d2d2"></div>
<div style="position:absolute;left:247px;top:895px;width:1px;height:38px;background:#d2d2d2"></div>
<div style="position:absolute;left:611px;top:895px;width:1px;height:38px;background:#d2d2d2"></div>
<div style="position:absolute;left:777px;top:895px;width:1px;height:38px;background:#d2d2d2"></div>
<div style="position:absolute;left:910px;top:895px;width:1px;height:38px;background:#d2d2d2"></div>
<div style="position:absolute;left:1076px;top:895px;width:1px;height:38px;background:#d2d2d2"></div>
<div style="position:absolute;left:1242px;top:895px;width:1px;height:38px;background:#d2d2d2"></div>
<div style="position:absolute;left:1408px;top:895px;width:1px;height:38px;background:#d2d2d2"></div>
<div style="position:absolute;left:1574px;top:895px;width:1px;height:38px;background:#d2d2d2"></div>
<div style="position:absolute;left:1939px;top:895px;width:1px;height:38px;background:#d2d2d2"></div>
<div style="position:absolute;left:2105px;top:895px;width:1px;height:38px;background:#d2d2d2"></div>
<div style="position:absolute;left:2271px;top:895px;width:1px;height:38px;background:#d2d2d2"></div>
<div style="position:absolute;left:2453px;top:895px;width:1px;height:38px;background:#d2d2d2"></div>
<div class="t " style="left:73px;top:915.25px;font-size:25px;color:#000;font-weight:400;"><span class="b"></span>189106251</div>
<div class="t " style="right:2393px;top:915.25px;font-size:25px;color:#000;font-weight:400;"><span class="b"></span>2024.07.29 04:33:44</div>
<div class="t " style="right:2227px;top:915.25px;font-size:25px;color:#000;font-weight:400;"><span class="b"></span>buy</div>
<div class="t " style="right:2094px;top:915.25px;font-size:25px;color:#000;font-weight:400;"><span class="b"></span>0.04</div>
<div class="t " style="right:1928px;top:915.25px;font-size:25px;color:#000;font-weight:400;"><span class="b"></span>xauusd</div>
<div class="t " style="right:1762px;top:915.25px;font-size:25px;color:#000;font-weight:400;"><span class="b"></span>2391.34</div>
<div class="t " style="right:1596px;top:915.25px;font-size:25px;color:#000;font-weight:400;"><span class="b"></span>0.00</div>
<div class="t " style="right:1430px;top:915.25px;font-size:25px;color:#000;font-weight:400;"><span class="b"></span>0.00</div>
<div class="t " style="right:1065px;top:915.25px;font-size:25px;color:#000;font-weight:400;"><span class="b"></span>2024.07.29 05:00:50</div>
<div class="t " style="right:899px;top:915.25px;font-size:25px;color:#000;font-weight:400;"><span class="b"></span>2393.20</div>
<div class="t " style="right:733px;top:915.25px;font-size:25px;color:#000;font-weight:400;"><span class="b"></span>0.00</div>
<div class="t " style="right:551px;top:915.25px;font-size:25px;color:#000;font-weight:400;"><span class="b"></span>7.44</div>
<svg style="position:absolute;left:36px;top:900px" width="30" height="34"><path d="M3.5 3H18L24 9V28.5Q24 30 22.5 30H5Q3.5 30 3.5 28.5Z" fill="#000" opacity="0.12" transform="translate(1.2,1.2)"/><path d="M3 2.5H17.5L23.5 8.5V27.5Q23.5 29 22 29H4.5Q3 29 3 27.5Z" fill="url(#docg)" stroke="#585858" stroke-width="1.8"/><path d="M17.5 2.5V8.5H23.5" fill="#fff" stroke="#787878" stroke-width="1.2"/><circle cx="22" cy="24.8" r="6.6" fill="url(#gb)" stroke="#1060a8" stroke-width="0.9"/></svg>
<div class="t " style="left:2798px;top:915.25px;font-size:25px;color:#000;font-weight:400;"><span class="b"></span>微信:tr</div>
<div style="position:absolute;left:33px;top:934px;width:2925px;height:39px;background:#ffffff"></div>
<div style="position:absolute;left:33px;top:972px;width:2925px;height:1px;background:#d2d2d2"></div>
<div style="position:absolute;left:247px;top:934px;width:1px;height:38px;background:#d2d2d2"></div>
<div style="position:absolute;left:611px;top:934px;width:1px;height:38px;background:#d2d2d2"></div>
<div style="position:absolute;left:777px;top:934px;width:1px;height:38px;background:#d2d2d2"></div>
<div style="position:absolute;left:910px;top:934px;width:1px;height:38px;background:#d2d2d2"></div>
<div style="position:absolute;left:1076px;top:934px;width:1px;height:38px;background:#d2d2d2"></div>
<div style="position:absolute;left:1242px;top:934px;width:1px;height:38px;background:#d2d2d2"></div>
<div style="position:absolute;left:1408px;top:934px;width:1px;height:38px;background:#d2d2d2"></div>
<div style="position:absolute;left:1574px;top:934px;width:1px;height:38px;background:#d2d2d2"></div>
<div style="position:absolute;left:1939px;top:934px;width:1px;height:38px;background:#d2d2d2"></div>
<div style="position:absolute;left:2105px;top:934px;width:1px;height:38px;background:#d2d2d2"></div>
<div style="position:absolute;left:2271px;top:934px;width:1px;height:38px;background:#d2d2d2"></div>
<div style="position:absolute;left:2453px;top:934px;width:1px;height:38px;background:#d2d2d2"></div>
<div class="t " style="left:73px;top:954.25px;font-size:25px;color:#000;font-weight:400;"><span class="b"></span>189108971</div>
<div class="t " style="right:2393px;top:954.25px;font-size:25px;color:#000;font-weight:400;"><span class="b"></span>2024.07.29 04:52:16</div>
<div class="t " style="right:2227px;top:954.25px;font-size:25px;color:#000;font-weight:400;"><span class="b"></span>buy</div>
<div class="t " style="right:2094px;top:954.25px;font-size:25px;color:#000;font-weight:400;"><span class="b"></span>0.05</div>
<div class="t " style="right:1928px;top:954.25px;font-size:25px;color:#000;font-weight:400;"><span class="b"></span>xauusd</div>
<div class="t " style="right:1762px;top:954.25px;font-size:25px;color:#000;font-weight:400;"><span class="b"></span>2389.22</div>
<div class="t " style="right:1596px;top:954.25px;font-size:25px;color:#000;font-weight:400;"><span class="b"></span>0.00</div>
<div class="t " style="right:1430px;top:954.25px;font-size:25px;color:#000;font-weight:400;"><span class="b"></span>0.00</div>
<div class="t " style="right:1065px;top:954.25px;font-size:25px;color:#000;font-weight:400;"><span class="b"></span>2024.07.29 05:00:50</div>
<div class="t " style="right:899px;top:954.25px;font-size:25px;color:#000;font-weight:400;"><span class="b"></span>2393.18</div>
<div class="t " style="right:733px;top:954.25px;font-size:25px;color:#000;font-weight:400;"><span class="b"></span>0.00</div>
<div class="t " style="right:551px;top:954.25px;font-size:25px;color:#000;font-weight:400;"><span class="b"></span>19.80</div>
<svg style="position:absolute;left:36px;top:939px" width="30" height="34"><path d="M3.5 3H18L24 9V28.5Q24 30 22.5 30H5Q3.5 30 3.5 28.5Z" fill="#000" opacity="0.12" transform="translate(1.2,1.2)"/><path d="M3 2.5H17.5L23.5 8.5V27.5Q23.5 29 22 29H4.5Q3 29 3 27.5Z" fill="url(#docg)" stroke="#585858" stroke-width="1.8"/><path d="M17.5 2.5V8.5H23.5" fill="#fff" stroke="#787878" stroke-width="1.2"/><circle cx="22" cy="24.8" r="6.6" fill="url(#gb)" stroke="#1060a8" stroke-width="0.9"/></svg>
<div class="t " style="left:2798px;top:954.25px;font-size:25px;color:#000;font-weight:400;"><span class="b"></span>微信:tr</div>
<div style="position:absolute;left:33px;top:973px;width:2925px;height:39px;background:#ebebeb"></div>
<div style="position:absolute;left:33px;top:1011px;width:2925px;height:1px;background:#d2d2d2"></div>
<div style="position:absolute;left:247px;top:973px;width:1px;height:38px;background:#d2d2d2"></div>
<div style="position:absolute;left:611px;top:973px;width:1px;height:38px;background:#d2d2d2"></div>
<div style="position:absolute;left:777px;top:973px;width:1px;height:38px;background:#d2d2d2"></div>
<div style="position:absolute;left:910px;top:973px;width:1px;height:38px;background:#d2d2d2"></div>
<div style="position:absolute;left:1076px;top:973px;width:1px;height:38px;background:#d2d2d2"></div>
<div style="position:absolute;left:1242px;top:973px;width:1px;height:38px;background:#d2d2d2"></div>
<div style="position:absolute;left:1408px;top:973px;width:1px;height:38px;background:#d2d2d2"></div>
<div style="position:absolute;left:1574px;top:973px;width:1px;height:38px;background:#d2d2d2"></div>
<div style="position:absolute;left:1939px;top:973px;width:1px;height:38px;background:#d2d2d2"></div>
<div style="position:absolute;left:2105px;top:973px;width:1px;height:38px;background:#d2d2d2"></div>
<div style="position:absolute;left:2271px;top:973px;width:1px;height:38px;background:#d2d2d2"></div>
<div style="position:absolute;left:2453px;top:973px;width:1px;height:38px;background:#d2d2d2"></div>
<div class="t " style="left:73px;top:993.25px;font-size:25px;color:#000;font-weight:400;"><span class="b"></span>189110662</div>
<div class="t " style="right:2393px;top:993.25px;font-size:25px;color:#000;font-weight:400;"><span class="b"></span>2024.07.29 05:00:55</div>
<div class="t " style="right:2227px;top:993.25px;font-size:25px;color:#000;font-weight:400;"><span class="b"></span>buy</div>
<div class="t " style="right:2094px;top:993.25px;font-size:25px;color:#000;font-weight:400;"><span class="b"></span>0.01</div>
<div class="t " style="right:1928px;top:993.25px;font-size:25px;color:#000;font-weight:400;"><span class="b"></span>xauusd</div>
<div class="t " style="right:1762px;top:993.25px;font-size:25px;color:#000;font-weight:400;"><span class="b"></span>2393.20</div>
<div class="t " style="right:1596px;top:993.25px;font-size:25px;color:#000;font-weight:400;"><span class="b"></span>0.00</div>
<div class="t " style="right:1430px;top:993.25px;font-size:25px;color:#000;font-weight:400;"><span class="b"></span>0.00</div>
<div class="t " style="right:1065px;top:993.25px;font-size:25px;color:#000;font-weight:400;"><span class="b"></span>2024.07.29 05:30:52</div>
<div class="t " style="right:899px;top:993.25px;font-size:25px;color:#000;font-weight:400;"><span class="b"></span>2393.92</div>
<div class="t " style="right:733px;top:993.25px;font-size:25px;color:#000;font-weight:400;"><span class="b"></span>0.00</div>
<div class="t " style="right:551px;top:993.25px;font-size:25px;color:#000;font-weight:400;"><span class="b"></span>0.72</div>
<svg style="position:absolute;left:36px;top:978px" width="30" height="34"><path d="M3.5 3H18L24 9V28.5Q24 30 22.5 30H5Q3.5 30 3.5 28.5Z" fill="#000" opacity="0.12" transform="translate(1.2,1.2)"/><path d="M3 2.5H17.5L23.5 8.5V27.5Q23.5 29 22 29H4.5Q3 29 3 27.5Z" fill="url(#docg)" stroke="#585858" stroke-width="1.8"/><path d="M17.5 2.5V8.5H23.5" fill="#fff" stroke="#787878" stroke-width="1.2"/><circle cx="22" cy="24.8" r="6.6" fill="url(#gb)" stroke="#1060a8" stroke-width="0.9"/></svg>
<div class="t " style="left:2798px;top:993.25px;font-size:25px;color:#000;font-weight:400;"><span class="b"></span>微信:tr</div>
<div style="position:absolute;left:33px;top:1012px;width:2925px;height:39px;background:#ffffff"></div>
<div style="position:absolute;left:33px;top:1050px;width:2925px;height:1px;background:#d2d2d2"></div>
<div style="position:absolute;left:247px;top:1012px;width:1px;height:38px;background:#d2d2d2"></div>
<div style="position:absolute;left:611px;top:1012px;width:1px;height:38px;background:#d2d2d2"></div>
<div style="position:absolute;left:777px;top:1012px;width:1px;height:38px;background:#d2d2d2"></div>
<div style="position:absolute;left:910px;top:1012px;width:1px;height:38px;background:#d2d2d2"></div>
<div style="position:absolute;left:1076px;top:1012px;width:1px;height:38px;background:#d2d2d2"></div>
<div style="position:absolute;left:1242px;top:1012px;width:1px;height:38px;background:#d2d2d2"></div>
<div style="position:absolute;left:1408px;top:1012px;width:1px;height:38px;background:#d2d2d2"></div>
<div style="position:absolute;left:1574px;top:1012px;width:1px;height:38px;background:#d2d2d2"></div>
<div style="position:absolute;left:1939px;top:1012px;width:1px;height:38px;background:#d2d2d2"></div>
<div style="position:absolute;left:2105px;top:1012px;width:1px;height:38px;background:#d2d2d2"></div>
<div style="position:absolute;left:2271px;top:1012px;width:1px;height:38px;background:#d2d2d2"></div>
<div style="position:absolute;left:2453px;top:1012px;width:1px;height:38px;background:#d2d2d2"></div>
<div class="t " style="left:73px;top:1032.25px;font-size:25px;color:#000;font-weight:400;"><span class="b"></span>189110811</div>
<div class="t " style="right:2393px;top:1032.25px;font-size:25px;color:#000;font-weight:400;"><span class="b"></span>2024.07.29 05:01:23</div>
<div class="t " style="right:2227px;top:1032.25px;font-size:25px;color:#000;font-weight:400;"><span class="b"></span>sell</div>
<div class="t " style="right:2094px;top:1032.25px;font-size:25px;color:#000;font-weight:400;"><span class="b"></span>0.01</div>
<div class="t " style="right:1928px;top:1032.25px;font-size:25px;color:#000;font-weight:400;"><span class="b"></span>xauusd</div>
<div class="t " style="right:1762px;top:1032.25px;font-size:25px;color:#000;font-weight:400;"><span class="b"></span>2393.87</div>
<div class="t " style="right:1596px;top:1032.25px;font-size:25px;color:#000;font-weight:400;"><span class="b"></span>0.00</div>
<div class="t " style="right:1430px;top:1032.25px;font-size:25px;color:#000;font-weight:400;"><span class="b"></span>0.00</div>
<div class="t " style="right:1065px;top:1032.25px;font-size:25px;color:#000;font-weight:400;"><span class="b"></span>2024.07.29 05:04:14</div>
<div class="t " style="right:899px;top:1032.25px;font-size:25px;color:#000;font-weight:400;"><span class="b"></span>2392.26</div>
<div class="t " style="right:733px;top:1032.25px;font-size:25px;color:#000;font-weight:400;"><span class="b"></span>0.00</div>
<div class="t " style="right:551px;top:1032.25px;font-size:25px;color:#000;font-weight:400;"><span class="b"></span>1.61</div>
<svg style="position:absolute;left:36px;top:1017px" width="30" height="34"><path d="M3.5 3H18L24 9V28.5Q24 30 22.5 30H5Q3.5 30 3.5 28.5Z" fill="#000" opacity="0.12" transform="translate(1.2,1.2)"/><path d="M3 2.5H17.5L23.5 8.5V27.5Q23.5 29 22 29H4.5Q3 29 3 27.5Z" fill="url(#docg)" stroke="#585858" stroke-width="1.8"/><path d="M17.5 2.5V8.5H23.5" fill="#fff" stroke="#787878" stroke-width="1.2"/><circle cx="22" cy="24.8" r="6.6" fill="url(#gs)" stroke="#a02a10" stroke-width="0.9"/></svg>
<div class="t " style="left:2798px;top:1032.25px;font-size:25px;color:#000;font-weight:400;"><span class="b"></span>微信:tr</div>
<div style="position:absolute;left:33px;top:1051px;width:2925px;height:39px;background:#ebebeb"></div>
<div style="position:absolute;left:33px;top:1089px;width:2925px;height:1px;background:#d2d2d2"></div>
<div style="position:absolute;left:247px;top:1051px;width:1px;height:38px;background:#d2d2d2"></div>
<div style="position:absolute;left:611px;top:1051px;width:1px;height:38px;background:#d2d2d2"></div>
<div style="position:absolute;left:777px;top:1051px;width:1px;height:38px;background:#d2d2d2"></div>
<div style="position:absolute;left:910px;top:1051px;width:1px;height:38px;background:#d2d2d2"></div>
<div style="position:absolute;left:1076px;top:1051px;width:1px;height:38px;background:#d2d2d2"></div>
<div style="position:absolute;left:1242px;top:1051px;width:1px;height:38px;background:#d2d2d2"></div>
<div style="position:absolute;left:1408px;top:1051px;width:1px;height:38px;background:#d2d2d2"></div>
<div style="position:absolute;left:1574px;top:1051px;width:1px;height:38px;background:#d2d2d2"></div>
<div style="position:absolute;left:1939px;top:1051px;width:1px;height:38px;background:#d2d2d2"></div>
<div style="position:absolute;left:2105px;top:1051px;width:1px;height:38px;background:#d2d2d2"></div>
<div style="position:absolute;left:2271px;top:1051px;width:1px;height:38px;background:#d2d2d2"></div>
<div style="position:absolute;left:2453px;top:1051px;width:1px;height:38px;background:#d2d2d2"></div>
<div class="t " style="left:73px;top:1071.25px;font-size:25px;color:#000;font-weight:400;"><span class="b"></span>189111428</div>
<div class="t " style="right:2393px;top:1071.25px;font-size:25px;color:#000;font-weight:400;"><span class="b"></span>2024.07.29 05:06:43</div>
<div class="t " style="right:2227px;top:1071.25px;font-size:25px;color:#000;font-weight:400;"><span class="b"></span>buy</div>
<div class="t " style="right:2094px;top:1071.25px;font-size:25px;color:#000;font-weight:400;"><span class="b"></span>0.01</div>
<div class="t " style="right:1928px;top:1071.25px;font-size:25px;color:#000;font-weight:400;"><span class="b"></span>xauusd</div>
<div class="t " style="right:1762px;top:1071.25px;font-size:25px;color:#000;font-weight:400;"><span class="b"></span>2391.53</div>
<div class="t " style="right:1596px;top:1071.25px;font-size:25px;color:#000;font-weight:400;"><span class="b"></span>0.00</div>
<div class="t " style="right:1430px;top:1071.25px;font-size:25px;color:#000;font-weight:400;"><span class="b"></span>0.00</div>
<div class="t " style="right:1065px;top:1071.25px;font-size:25px;color:#000;font-weight:400;"><span class="b"></span>2024.07.29 05:30:51</div>
<div class="t " style="right:899px;top:1071.25px;font-size:25px;color:#000;font-weight:400;"><span class="b"></span>2393.97</div>
<div class="t " style="right:733px;top:1071.25px;font-size:25px;color:#000;font-weight:400;"><span class="b"></span>0.00</div>
<div class="t " style="right:551px;top:1071.25px;font-size:25px;color:#000;font-weight:400;"><span class="b"></span>2.44</div>
<svg style="position:absolute;left:36px;top:1056px" width="30" height="34"><path d="M3.5 3H18L24 9V28.5Q24 30 22.5 30H5Q3.5 30 3.5 28.5Z" fill="#000" opacity="0.12" transform="translate(1.2,1.2)"/><path d="M3 2.5H17.5L23.5 8.5V27.5Q23.5 29 22 29H4.5Q3 29 3 27.5Z" fill="url(#docg)" stroke="#585858" stroke-width="1.8"/><path d="M17.5 2.5V8.5H23.5" fill="#fff" stroke="#787878" stroke-width="1.2"/><circle cx="22" cy="24.8" r="6.6" fill="url(#gb)" stroke="#1060a8" stroke-width="0.9"/></svg>
<div class="t " style="left:2798px;top:1071.25px;font-size:25px;color:#000;font-weight:400;"><span class="b"></span>微信:tr</div>
<div style="position:absolute;left:33px;top:1090px;width:2925px;height:39px;background:#ffffff"></div>
<div style="position:absolute;left:33px;top:1128px;width:2925px;height:1px;background:#d2d2d2"></div>
<div style="position:absolute;left:247px;top:1090px;width:1px;height:38px;background:#d2d2d2"></div>
<div style="position:absolute;left:611px;top:1090px;width:1px;height:38px;background:#d2d2d2"></div>
<div style="position:absolute;left:777px;top:1090px;width:1px;height:38px;background:#d2d2d2"></div>
<div style="position:absolute;left:910px;top:1090px;width:1px;height:38px;background:#d2d2d2"></div>
<div style="position:absolute;left:1076px;top:1090px;width:1px;height:38px;background:#d2d2d2"></div>
<div style="position:absolute;left:1242px;top:1090px;width:1px;height:38px;background:#d2d2d2"></div>
<div style="position:absolute;left:1408px;top:1090px;width:1px;height:38px;background:#d2d2d2"></div>
<div style="position:absolute;left:1574px;top:1090px;width:1px;height:38px;background:#d2d2d2"></div>
<div style="position:absolute;left:1939px;top:1090px;width:1px;height:38px;background:#d2d2d2"></div>
<div style="position:absolute;left:2105px;top:1090px;width:1px;height:38px;background:#d2d2d2"></div>
<div style="position:absolute;left:2271px;top:1090px;width:1px;height:38px;background:#d2d2d2"></div>
<div style="position:absolute;left:2453px;top:1090px;width:1px;height:38px;background:#d2d2d2"></div>
<div class="t " style="left:73px;top:1110.25px;font-size:25px;color:#000;font-weight:400;"><span class="b"></span>189111951</div>
<div class="t " style="right:2393px;top:1110.25px;font-size:25px;color:#000;font-weight:400;"><span class="b"></span>2024.07.29 05:12:42</div>
<div class="t " style="right:2227px;top:1110.25px;font-size:25px;color:#000;font-weight:400;"><span class="b"></span>sell</div>
<div class="t " style="right:2094px;top:1110.25px;font-size:25px;color:#000;font-weight:400;"><span class="b"></span>0.01</div>
<div class="t " style="right:1928px;top:1110.25px;font-size:25px;color:#000;font-weight:400;"><span class="b"></span>xauusd</div>
<div class="t " style="right:1762px;top:1110.25px;font-size:25px;color:#000;font-weight:400;"><span class="b"></span>2392.96</div>
<div class="t " style="right:1596px;top:1110.25px;font-size:25px;color:#000;font-weight:400;"><span class="b"></span>0.00</div>
<div class="t " style="right:1430px;top:1110.25px;font-size:25px;color:#000;font-weight:400;"><span class="b"></span>0.00</div>
<div class="t " style="right:1065px;top:1110.25px;font-size:25px;color:#000;font-weight:400;"><span class="b"></span>2024.07.29 05:18:03</div>
<div class="t " style="right:899px;top:1110.25px;font-size:25px;color:#000;font-weight:400;"><span class="b"></span>2391.40</div>
<div class="t " style="right:733px;top:1110.25px;font-size:25px;color:#000;font-weight:400;"><span class="b"></span>0.00</div>
<div class="t " style="right:551px;top:1110.25px;font-size:25px;color:#000;font-weight:400;"><span class="b"></span>1.56</div>
<svg style="position:absolute;left:36px;top:1095px" width="30" height="34"><path d="M3.5 3H18L24 9V28.5Q24 30 22.5 30H5Q3.5 30 3.5 28.5Z" fill="#000" opacity="0.12" transform="translate(1.2,1.2)"/><path d="M3 2.5H17.5L23.5 8.5V27.5Q23.5 29 22 29H4.5Q3 29 3 27.5Z" fill="url(#docg)" stroke="#585858" stroke-width="1.8"/><path d="M17.5 2.5V8.5H23.5" fill="#fff" stroke="#787878" stroke-width="1.2"/><circle cx="22" cy="24.8" r="6.6" fill="url(#gs)" stroke="#a02a10" stroke-width="0.9"/></svg>
<div class="t " style="left:2798px;top:1110.25px;font-size:25px;color:#000;font-weight:400;"><span class="b"></span>微信:tr</div>
<div style="position:absolute;left:33px;top:1129px;width:2925px;height:39px;background:#ebebeb"></div>
<div style="position:absolute;left:33px;top:1167px;width:2925px;height:1px;background:#d2d2d2"></div>
<div style="position:absolute;left:247px;top:1129px;width:1px;height:38px;background:#d2d2d2"></div>
<div style="position:absolute;left:611px;top:1129px;width:1px;height:38px;background:#d2d2d2"></div>
<div style="position:absolute;left:777px;top:1129px;width:1px;height:38px;background:#d2d2d2"></div>
<div style="position:absolute;left:910px;top:1129px;width:1px;height:38px;background:#d2d2d2"></div>
<div style="position:absolute;left:1076px;top:1129px;width:1px;height:38px;background:#d2d2d2"></div>
<div style="position:absolute;left:1242px;top:1129px;width:1px;height:38px;background:#d2d2d2"></div>
<div style="position:absolute;left:1408px;top:1129px;width:1px;height:38px;background:#d2d2d2"></div>
<div style="position:absolute;left:1574px;top:1129px;width:1px;height:38px;background:#d2d2d2"></div>
<div style="position:absolute;left:1939px;top:1129px;width:1px;height:38px;background:#d2d2d2"></div>
<div style="position:absolute;left:2105px;top:1129px;width:1px;height:38px;background:#d2d2d2"></div>
<div style="position:absolute;left:2271px;top:1129px;width:1px;height:38px;background:#d2d2d2"></div>
<div style="position:absolute;left:2453px;top:1129px;width:1px;height:38px;background:#d2d2d2"></div>
<div class="t " style="left:73px;top:1149.25px;font-size:25px;color:#000;font-weight:400;"><span class="b"></span>189112714</div>
<div class="t " style="right:2393px;top:1149.25px;font-size:25px;color:#000;font-weight:400;"><span class="b"></span>2024.07.29 05:21:07</div>
<div class="t " style="right:2227px;top:1149.25px;font-size:25px;color:#000;font-weight:400;"><span class="b"></span>sell</div>
<div class="t " style="right:2094px;top:1149.25px;font-size:25px;color:#000;font-weight:400;"><span class="b"></span>0.01</div>
<div class="t " style="right:1928px;top:1149.25px;font-size:25px;color:#000;font-weight:400;"><span class="b"></span>xauusd</div>
<div class="t " style="right:1762px;top:1149.25px;font-size:25px;color:#000;font-weight:400;"><span class="b"></span>2392.46</div>
<div class="t " style="right:1596px;top:1149.25px;font-size:25px;color:#000;font-weight:400;"><span class="b"></span>0.00</div>
<div class="t " style="right:1430px;top:1149.25px;font-size:25px;color:#000;font-weight:400;"><span class="b"></span>0.00</div>
<div class="t " style="right:1065px;top:1149.25px;font-size:25px;color:#000;font-weight:400;"><span class="b"></span>2024.07.29 05:47:26</div>
<div class="t " style="right:899px;top:1149.25px;font-size:25px;color:#000;font-weight:400;"><span class="b"></span>2391.79</div>
<div class="t " style="right:733px;top:1149.25px;font-size:25px;color:#000;font-weight:400;"><span class="b"></span>0.00</div>
<div class="t " style="right:551px;top:1149.25px;font-size:25px;color:#000;font-weight:400;"><span class="b"></span>0.67</div>
<svg style="position:absolute;left:36px;top:1134px" width="30" height="34"><path d="M3.5 3H18L24 9V28.5Q24 30 22.5 30H5Q3.5 30 3.5 28.5Z" fill="#000" opacity="0.12" transform="translate(1.2,1.2)"/><path d="M3 2.5H17.5L23.5 8.5V27.5Q23.5 29 22 29H4.5Q3 29 3 27.5Z" fill="url(#docg)" stroke="#585858" stroke-width="1.8"/><path d="M17.5 2.5V8.5H23.5" fill="#fff" stroke="#787878" stroke-width="1.2"/><circle cx="22" cy="24.8" r="6.6" fill="url(#gs)" stroke="#a02a10" stroke-width="0.9"/></svg>
<div class="t " style="left:2798px;top:1149.25px;font-size:25px;color:#000;font-weight:400;"><span class="b"></span>微信:t</div>
<div style="position:absolute;left:33px;top:1168px;width:2925px;height:39px;background:#ffffff"></div>
<div style="position:absolute;left:33px;top:1206px;width:2925px;height:1px;background:#d2d2d2"></div>
<div style="position:absolute;left:247px;top:1168px;width:1px;height:38px;background:#d2d2d2"></div>
<div style="position:absolute;left:611px;top:1168px;width:1px;height:38px;background:#d2d2d2"></div>
<div style="position:absolute;left:777px;top:1168px;width:1px;height:38px;background:#d2d2d2"></div>
<div style="position:absolute;left:910px;top:1168px;width:1px;height:38px;background:#d2d2d2"></div>
<div style="position:absolute;left:1076px;top:1168px;width:1px;height:38px;background:#d2d2d2"></div>
<div style="position:absolute;left:1242px;top:1168px;width:1px;height:38px;background:#d2d2d2"></div>
<div style="position:absolute;left:1408px;top:1168px;width:1px;height:38px;background:#d2d2d2"></div>
<div style="position:absolute;left:1574px;top:1168px;width:1px;height:38px;background:#d2d2d2"></div>
<div style="position:absolute;left:1939px;top:1168px;width:1px;height:38px;background:#d2d2d2"></div>
<div style="position:absolute;left:2105px;top:1168px;width:1px;height:38px;background:#d2d2d2"></div>
<div style="position:absolute;left:2271px;top:1168px;width:1px;height:38px;background:#d2d2d2"></div>
<div style="position:absolute;left:2453px;top:1168px;width:1px;height:38px;background:#d2d2d2"></div>
<div class="t " style="left:73px;top:1188.25px;font-size:25px;color:#000;font-weight:400;"><span class="b"></span>189113961</div>
<div class="t " style="right:2393px;top:1188.25px;font-size:25px;color:#000;font-weight:400;"><span class="b"></span>2024.07.29 05:36:26</div>
<div class="t " style="right:2227px;top:1188.25px;font-size:25px;color:#000;font-weight:400;"><span class="b"></span>sell</div>
<div class="t " style="right:2094px;top:1188.25px;font-size:25px;color:#000;font-weight:400;"><span class="b"></span>0.01</div>
<div class="t " style="right:1928px;top:1188.25px;font-size:25px;color:#000;font-weight:400;"><span class="b"></span>xauusd</div>
<div class="t " style="right:1762px;top:1188.25px;font-size:25px;color:#000;font-weight:400;"><span class="b"></span>2394.38</div>
<div class="t " style="right:1596px;top:1188.25px;font-size:25px;color:#000;font-weight:400;"><span class="b"></span>0.00</div>
<div class="t " style="right:1430px;top:1188.25px;font-size:25px;color:#000;font-weight:400;"><span class="b"></span>0.00</div>
<div class="t " style="right:1065px;top:1188.25px;font-size:25px;color:#000;font-weight:400;"><span class="b"></span>2024.07.29 05:47:26</div>
<div class="t " style="right:899px;top:1188.25px;font-size:25px;color:#000;font-weight:400;"><span class="b"></span>2391.79</div>
<div class="t " style="right:733px;top:1188.25px;font-size:25px;color:#000;font-weight:400;"><span class="b"></span>0.00</div>
<div class="t " style="right:551px;top:1188.25px;font-size:25px;color:#000;font-weight:400;"><span class="b"></span>2.59</div>
<svg style="position:absolute;left:36px;top:1173px" width="30" height="34"><path d="M3.5 3H18L24 9V28.5Q24 30 22.5 30H5Q3.5 30 3.5 28.5Z" fill="#000" opacity="0.12" transform="translate(1.2,1.2)"/><path d="M3 2.5H17.5L23.5 8.5V27.5Q23.5 29 22 29H4.5Q3 29 3 27.5Z" fill="url(#docg)" stroke="#585858" stroke-width="1.8"/><path d="M17.5 2.5V8.5H23.5" fill="#fff" stroke="#787878" stroke-width="1.2"/><circle cx="22" cy="24.8" r="6.6" fill="url(#gs)" stroke="#a02a10" stroke-width="0.9"/></svg>
<div class="t " style="left:2798px;top:1188.25px;font-size:25px;color:#000;font-weight:400;"><span class="b"></span>微信:</div>
<div style="position:absolute;left:33px;top:1207px;width:2925px;height:39px;background:#ebebeb"></div>
<div style="position:absolute;left:33px;top:1245px;width:2925px;height:1px;background:#d2d2d2"></div>
<div style="position:absolute;left:247px;top:1207px;width:1px;height:38px;background:#d2d2d2"></div>
<div style="position:absolute;left:611px;top:1207px;width:1px;height:38px;background:#d2d2d2"></div>
<div style="position:absolute;left:777px;top:1207px;width:1px;height:38px;background:#d2d2d2"></div>
<div style="position:absolute;left:910px;top:1207px;width:1px;height:38px;background:#d2d2d2"></div>
<div style="position:absolute;left:1076px;top:1207px;width:1px;height:38px;background:#d2d2d2"></div>
<div style="position:absolute;left:1242px;top:1207px;width:1px;height:38px;background:#d2d2d2"></div>
<div style="position:absolute;left:1408px;top:1207px;width:1px;height:38px;background:#d2d2d2"></div>
<div style="position:absolute;left:1574px;top:1207px;width:1px;height:38px;background:#d2d2d2"></div>
<div style="position:absolute;left:1939px;top:1207px;width:1px;height:38px;background:#d2d2d2"></div>
<div style="position:absolute;left:2105px;top:1207px;width:1px;height:38px;background:#d2d2d2"></div>
<div style="position:absolute;left:2271px;top:1207px;width:1px;height:38px;background:#d2d2d2"></div>
<div style="position:absolute;left:2453px;top:1207px;width:1px;height:38px;background:#d2d2d2"></div>
<div class="t " style="left:73px;top:1227.25px;font-size:25px;color:#000;font-weight:400;"><span class="b"></span>189114702</div>
<div class="t " style="right:2393px;top:1227.25px;font-size:25px;color:#000;font-weight:400;"><span class="b"></span>2024.07.29 05:45:42</div>
<div class="t " style="right:2227px;top:1227.25px;font-size:25px;color:#000;font-weight:400;"><span class="b"></span>buy</div>
<div class="t " style="right:2094px;top:1227.25px;font-size:25px;color:#000;font-weight:400;"><span class="b"></span>0.01</div>
<div class="t " style="right:1928px;top:1227.25px;font-size:25px;color:#000;font-weight:400;"><span class="b"></span>xauusd</div>
<div class="t " style="right:1762px;top:1227.25px;font-size:25px;color:#000;font-weight:400;"><span class="b"></span>2392.90</div>
<div class="t " style="right:1596px;top:1227.25px;font-size:25px;color:#000;font-weight:400;"><span class="b"></span>0.00</div>
<div class="t " style="right:1430px;top:1227.25px;font-size:25px;color:#000;font-weight:400;"><span class="b"></span>0.00</div>
<div class="t " style="right:1065px;top:1227.25px;font-size:25px;color:#000;font-weight:400;"><span class="b"></span>2024.07.29 07:00:38</div>
<div class="t " style="right:899px;top:1227.25px;font-size:25px;color:#000;font-weight:400;"><span class="b"></span>2394.73</div>
<div class="t " style="right:733px;top:1227.25px;font-size:25px;color:#000;font-weight:400;"><span class="b"></span>0.00</div>
<div class="t " style="right:551px;top:1227.25px;font-size:25px;color:#000;font-weight:400;"><span class="b"></span>1.83</div>
<svg style="position:absolute;left:36px;top:1212px" width="30" height="34"><path d="M3.5 3H18L24 9V28.5Q24 30 22.5 30H5Q3.5 30 3.5 28.5Z" fill="#000" opacity="0.12" transform="translate(1.2,1.2)"/><path d="M3 2.5H17.5L23.5 8.5V27.5Q23.5 29 22 29H4.5Q3 29 3 27.5Z" fill="url(#docg)" stroke="#585858" stroke-width="1.8"/><path d="M17.5 2.5V8.5H23.5" fill="#fff" stroke="#787878" stroke-width="1.2"/><circle cx="22" cy="24.8" r="6.6" fill="url(#gb)" stroke="#1060a8" stroke-width="0.9"/></svg>
<div class="t " style="left:2798px;top:1227.25px;font-size:25px;color:#000;font-weight:400;"><span class="b"></span>微信:</div>
<div style="position:absolute;left:33px;top:1246px;width:2925px;height:39px;background:#ffffff"></div>
<div style="position:absolute;left:33px;top:1284px;width:2925px;height:1px;background:#d2d2d2"></div>
<div style="position:absolute;left:247px;top:1246px;width:1px;height:38px;background:#d2d2d2"></div>
<div style="position:absolute;left:611px;top:1246px;width:1px;height:38px;background:#d2d2d2"></div>
<div style="position:absolute;left:777px;top:1246px;width:1px;height:38px;background:#d2d2d2"></div>
<div style="position:absolute;left:910px;top:1246px;width:1px;height:38px;background:#d2d2d2"></div>
<div style="position:absolute;left:1076px;top:1246px;width:1px;height:38px;background:#d2d2d2"></div>
<div style="position:absolute;left:1242px;top:1246px;width:1px;height:38px;background:#d2d2d2"></div>
<div style="position:absolute;left:1408px;top:1246px;width:1px;height:38px;background:#d2d2d2"></div>
<div style="position:absolute;left:1574px;top:1246px;width:1px;height:38px;background:#d2d2d2"></div>
<div style="position:absolute;left:1939px;top:1246px;width:1px;height:38px;background:#d2d2d2"></div>
<div style="position:absolute;left:2105px;top:1246px;width:1px;height:38px;background:#d2d2d2"></div>
<div style="position:absolute;left:2271px;top:1246px;width:1px;height:38px;background:#d2d2d2"></div>
<div style="position:absolute;left:2453px;top:1246px;width:1px;height:38px;background:#d2d2d2"></div>
<div class="t " style="left:73px;top:1266.25px;font-size:25px;color:#000;font-weight:400;"><span class="b"></span>189117222</div>
<div class="t " style="right:2393px;top:1266.25px;font-size:25px;color:#000;font-weight:400;"><span class="b"></span>2024.07.29 07:25:04</div>
<div class="t " style="right:2227px;top:1266.25px;font-size:25px;color:#000;font-weight:400;"><span class="b"></span>buy</div>
<div class="t " style="right:2094px;top:1266.25px;font-size:25px;color:#000;font-weight:400;"><span class="b"></span>0.01</div>
<div class="t " style="right:1928px;top:1266.25px;font-size:25px;color:#000;font-weight:400;"><span class="b"></span>xauusd</div>
<div class="t " style="right:1762px;top:1266.25px;font-size:25px;color:#000;font-weight:400;"><span class="b"></span>2394.56</div>
<div class="t " style="right:1596px;top:1266.25px;font-size:25px;color:#000;font-weight:400;"><span class="b"></span>0.00</div>
<div class="t " style="right:1430px;top:1266.25px;font-size:25px;color:#000;font-weight:400;"><span class="b"></span>0.00</div>
<div class="t " style="right:1065px;top:1266.25px;font-size:25px;color:#000;font-weight:400;"><span class="b"></span>2024.07.29 08:16:08</div>
<div class="t " style="right:899px;top:1266.25px;font-size:25px;color:#000;font-weight:400;"><span class="b"></span>2396.10</div>
<div class="t " style="right:733px;top:1266.25px;font-size:25px;color:#000;font-weight:400;"><span class="b"></span>0.00</div>
<div class="t " style="right:551px;top:1266.25px;font-size:25px;color:#000;font-weight:400;"><span class="b"></span>1.54</div>
<svg style="position:absolute;left:36px;top:1251px" width="30" height="34"><path d="M3.5 3H18L24 9V28.5Q24 30 22.5 30H5Q3.5 30 3.5 28.5Z" fill="#000" opacity="0.12" transform="translate(1.2,1.2)"/><path d="M3 2.5H17.5L23.5 8.5V27.5Q23.5 29 22 29H4.5Q3 29 3 27.5Z" fill="url(#docg)" stroke="#585858" stroke-width="1.8"/><path d="M17.5 2.5V8.5H23.5" fill="#fff" stroke="#787878" stroke-width="1.2"/><circle cx="22" cy="24.8" r="6.6" fill="url(#gb)" stroke="#1060a8" stroke-width="0.9"/></svg>
<div class="t " style="left:2798px;top:1266.25px;font-size:25px;color:#000;font-weight:400;"><span class="b"></span>微信</div>
<div style="position:absolute;left:33px;top:1285px;width:2925px;height:39px;background:#ebebeb"></div>
<div style="position:absolute;left:33px;top:1323px;width:2925px;height:1px;background:#d2d2d2"></div>
<div style="position:absolute;left:247px;top:1285px;width:1px;height:38px;background:#d2d2d2"></div>
<div style="position:absolute;left:611px;top:1285px;width:1px;height:38px;background:#d2d2d2"></div>
<div style="position:absolute;left:777px;top:1285px;width:1px;height:38px;background:#d2d2d2"></div>
<div style="position:absolute;left:910px;top:1285px;width:1px;height:38px;background:#d2d2d2"></div>
<div style="position:absolute;left:1076px;top:1285px;width:1px;height:38px;background:#d2d2d2"></div>
<div style="position:absolute;left:1242px;top:1285px;width:1px;height:38px;background:#d2d2d2"></div>
<div style="position:absolute;left:1408px;top:1285px;width:1px;height:38px;background:#d2d2d2"></div>
<div style="position:absolute;left:1574px;top:1285px;width:1px;height:38px;background:#d2d2d2"></div>
<div style="position:absolute;left:1939px;top:1285px;width:1px;height:38px;background:#d2d2d2"></div>
<div style="position:absolute;left:2105px;top:1285px;width:1px;height:38px;background:#d2d2d2"></div>
<div style="position:absolute;left:2271px;top:1285px;width:1px;height:38px;background:#d2d2d2"></div>
<div style="position:absolute;left:2453px;top:1285px;width:1px;height:38px;background:#d2d2d2"></div>
<div class="t " style="left:73px;top:1305.25px;font-size:25px;color:#000;font-weight:400;"><span class="b"></span>189115616</div>
<div class="t " style="right:2393px;top:1305.25px;font-size:25px;color:#000;font-weight:400;"><span class="b"></span>2024.07.29 07:00:39</div>
<div class="t " style="right:2227px;top:1305.25px;font-size:25px;color:#000;font-weight:400;"><span class="b"></span>sell</div>
<div class="t " style="right:2094px;top:1305.25px;font-size:25px;color:#000;font-weight:400;"><span class="b"></span>0.01</div>
<div class="t " style="right:1928px;top:1305.25px;font-size:25px;color:#000;font-weight:400;"><span class="b"></span>xauusd</div>
<div class="t " style="right:1762px;top:1305.25px;font-size:25px;color:#000;font-weight:400;"><span class="b"></span>2394.73</div>
<div class="t " style="right:1596px;top:1305.25px;font-size:25px;color:#000;font-weight:400;"><span class="b"></span>0.00</div>
<div class="t " style="right:1430px;top:1305.25px;font-size:25px;color:#000;font-weight:400;"><span class="b"></span>0.00</div>
<div class="t " style="right:1065px;top:1305.25px;font-size:25px;color:#000;font-weight:400;"><span class="b"></span>2024.07.29 08:30:39</div>
<div class="t " style="right:899px;top:1305.25px;font-size:25px;color:#000;font-weight:400;"><span class="b"></span>2393.18</div>
<div class="t " style="right:733px;top:1305.25px;font-size:25px;color:#000;font-weight:400;"><span class="b"></span>0.00</div>
<div class="t " style="right:551px;top:1305.25px;font-size:25px;color:#000;font-weight:400;"><span class="b"></span>1.55</div>
<svg style="position:absolute;left:36px;top:1290px" width="30" height="34"><path d="M3.5 3H18L24 9V28.5Q24 30 22.5 30H5Q3.5 30 3.5 28.5Z" fill="#000" opacity="0.12" transform="translate(1.2,1.2)"/><path d="M3 2.5H17.5L23.5 8.5V27.5Q23.5 29 22 29H4.5Q3 29 3 27.5Z" fill="url(#docg)" stroke="#585858" stroke-width="1.8"/><path d="M17.5 2.5V8.5H23.5" fill="#fff" stroke="#787878" stroke-width="1.2"/><circle cx="22" cy="24.8" r="6.6" fill="url(#gs)" stroke="#a02a10" stroke-width="0.9"/></svg>
<div class="t " style="left:2798px;top:1305.25px;font-size:25px;color:#000;font-weight:400;"><span class="b"></span>微信</div>
<div style="position:absolute;left:33px;top:1324px;width:2925px;height:39px;background:#ffffff"></div>
<div style="position:absolute;left:33px;top:1362px;width:2925px;height:1px;background:#d2d2d2"></div>
<div style="position:absolute;left:247px;top:1324px;width:1px;height:38px;background:#d2d2d2"></div>
<div style="position:absolute;left:611px;top:1324px;width:1px;height:38px;background:#d2d2d2"></div>
<div style="position:absolute;left:777px;top:1324px;width:1px;height:38px;background:#d2d2d2"></div>
<div style="position:absolute;left:910px;top:1324px;width:1px;height:38px;background:#d2d2d2"></div>
<div style="position:absolute;left:1076px;top:1324px;width:1px;height:38px;background:#d2d2d2"></div>
<div style="position:absolute;left:1242px;top:1324px;width:1px;height:38px;background:#d2d2d2"></div>
<div style="position:absolute;left:1408px;top:1324px;width:1px;height:38px;background:#d2d2d2"></div>
<div style="position:absolute;left:1574px;top:1324px;width:1px;height:38px;background:#d2d2d2"></div>
<div style="position:absolute;left:1939px;top:1324px;width:1px;height:38px;background:#d2d2d2"></div>
<div style="position:absolute;left:2105px;top:1324px;width:1px;height:38px;background:#d2d2d2"></div>
<div style="position:absolute;left:2271px;top:1324px;width:1px;height:38px;background:#d2d2d2"></div>
<div style="position:absolute;left:2453px;top:1324px;width:1px;height:38px;background:#d2d2d2"></div>
<div class="t " style="left:73px;top:1344.25px;font-size:25px;color:#000;font-weight:400;"><span class="b"></span>189121735</div>
<div class="t " style="right:2393px;top:1344.25px;font-size:25px;color:#000;font-weight:400;"><span class="b"></span>2024.07.29 08:41:02</div>
<div class="t " style="right:2227px;top:1344.25px;font-size:25px;color:#000;font-weight:400;"><span class="b"></span>buy</div>
<div class="t " style="right:2094px;top:1344.25px;font-size:25px;color:#000;font-weight:400;"><span class="b"></span>0.02</div>
<div class="t " style="right:1928px;top:1344.25px;font-size:25px;color:#000;font-weight:400;"><span class="b"></span>xauusd</div>
<div class="t " style="right:1762px;top:1344.25px;font-size:25px;color:#000;font-weight:400;"><span class="b"></span>2390.96</div>
<div class="t " style="right:1596px;top:1344.25px;font-size:25px;color:#000;font-weight:400;"><span class="b"></span>0.00</div>
<div class="t " style="right:1430px;top:1344.25px;font-size:25px;color:#000;font-weight:400;"><span class="b"></span>0.00</div>
<div class="t " style="right:1065px;top:1344.25px;font-size:25px;color:#000;font-weight:400;"><span class="b"></span>2024.07.29 08:50:51</div>
<div class="t " style="right:899px;top:1344.25px;font-size:25px;color:#000;font-weight:400;"><span class="b"></span>2393.63</div>
<div class="t " style="right:733px;top:1344.25px;font-size:25px;color:#000;font-weight:400;"><span class="b"></span>0.00</div>
<div class="t " style="right:551px;top:1344.25px;font-size:25px;color:#000;font-weight:400;"><span class="b"></span>5.34</div>
<svg style="position:absolute;left:36px;top:1329px" width="30" height="34"><path d="M3.5 3H18L24 9V28.5Q24 30 22.5 30H5Q3.5 30 3.5 28.5Z" fill="#000" opacity="0.12" transform="translate(1.2,1.2)"/><path d="M3 2.5H17.5L23.5 8.5V27.5Q23.5 29 22 29H4.5Q3 29 3 27.5Z" fill="url(#docg)" stroke="#585858" stroke-width="1.8"/><path d="M17.5 2.5V8.5H23.5" fill="#fff" stroke="#787878" stroke-width="1.2"/><circle cx="22" cy="24.8" r="6.6" fill="url(#gb)" stroke="#1060a8" stroke-width="0.9"/></svg>
<div class="t " style="left:2798px;top:1344.25px;font-size:25px;color:#000;font-weight:400;"><span class="b"></span>微信</div>
<div style="position:absolute;left:33px;top:1363px;width:2925px;height:39px;background:#ebebeb"></div>
<div style="position:absolute;left:33px;top:1401px;width:2925px;height:1px;background:#d2d2d2"></div>
<div style="position:absolute;left:247px;top:1363px;width:1px;height:38px;background:#d2d2d2"></div>
<div style="position:absolute;left:611px;top:1363px;width:1px;height:38px;background:#d2d2d2"></div>
<div style="position:absolute;left:777px;top:1363px;width:1px;height:38px;background:#d2d2d2"></div>
<div style="position:absolute;left:910px;top:1363px;width:1px;height:38px;background:#d2d2d2"></div>
<div style="position:absolute;left:1076px;top:1363px;width:1px;height:38px;background:#d2d2d2"></div>
<div style="position:absolute;left:1242px;top:1363px;width:1px;height:38px;background:#d2d2d2"></div>
<div style="position:absolute;left:1408px;top:1363px;width:1px;height:38px;background:#d2d2d2"></div>
<div style="position:absolute;left:1574px;top:1363px;width:1px;height:38px;background:#d2d2d2"></div>
<div style="position:absolute;left:1939px;top:1363px;width:1px;height:38px;background:#d2d2d2"></div>
<div style="position:absolute;left:2105px;top:1363px;width:1px;height:38px;background:#d2d2d2"></div>
<div style="position:absolute;left:2271px;top:1363px;width:1px;height:38px;background:#d2d2d2"></div>
<div style="position:absolute;left:2453px;top:1363px;width:1px;height:38px;background:#d2d2d2"></div>
<div class="t " style="left:73px;top:1383.25px;font-size:25px;color:#000;font-weight:400;"><span class="b"></span>189120552</div>
<div class="t " style="right:2393px;top:1383.25px;font-size:25px;color:#000;font-weight:400;"><span class="b"></span>2024.07.29 08:31:02</div>
<div class="t " style="right:2227px;top:1383.25px;font-size:25px;color:#000;font-weight:400;"><span class="b"></span>buy</div>
<div class="t " style="right:2094px;top:1383.25px;font-size:25px;color:#000;font-weight:400;"><span class="b"></span>0.01</div>
<div class="t " style="right:1928px;top:1383.25px;font-size:25px;color:#000;font-weight:400;"><span class="b"></span>xauusd</div>
<div class="t " style="right:1762px;top:1383.25px;font-size:25px;color:#000;font-weight:400;"><span class="b"></span>2392.90</div>
<div class="t " style="right:1596px;top:1383.25px;font-size:25px;color:#000;font-weight:400;"><span class="b"></span>0.00</div>
<div class="t " style="right:1430px;top:1383.25px;font-size:25px;color:#000;font-weight:400;"><span class="b"></span>0.00</div>
<div class="t " style="right:1065px;top:1383.25px;font-size:25px;color:#000;font-weight:400;"><span class="b"></span>2024.07.29 08:50:52</div>
<div class="t " style="right:899px;top:1383.25px;font-size:25px;color:#000;font-weight:400;"><span class="b"></span>2393.63</div>
<div class="t " style="right:733px;top:1383.25px;font-size:25px;color:#000;font-weight:400;"><span class="b"></span>0.00</div>
<div class="t " style="right:551px;top:1383.25px;font-size:25px;color:#000;font-weight:400;"><span class="b"></span>0.73</div>
<svg style="position:absolute;left:36px;top:1368px" width="30" height="34"><path d="M3.5 3H18L24 9V28.5Q24 30 22.5 30H5Q3.5 30 3.5 28.5Z" fill="#000" opacity="0.12" transform="translate(1.2,1.2)"/><path d="M3 2.5H17.5L23.5 8.5V27.5Q23.5 29 22 29H4.5Q3 29 3 27.5Z" fill="url(#docg)" stroke="#585858" stroke-width="1.8"/><path d="M17.5 2.5V8.5H23.5" fill="#fff" stroke="#787878" stroke-width="1.2"/><circle cx="22" cy="24.8" r="6.6" fill="url(#gb)" stroke="#1060a8" stroke-width="0.9"/></svg>
<div class="t " style="left:2798px;top:1383.25px;font-size:25px;color:#000;font-weight:400;"><span class="b"></span>微信</div>
<div style="position:absolute;left:33px;top:1402px;width:2925px;height:39px;background:#ffffff"></div>
<div style="position:absolute;left:33px;top:1440px;width:2925px;height:1px;background:#d2d2d2"></div>
<div style="position:absolute;left:247px;top:1402px;width:1px;height:38px;background:#d2d2d2"></div>
<div style="position:absolute;left:611px;top:1402px;width:1px;height:38px;background:#d2d2d2"></div>
<div style="position:absolute;left:777px;top:1402px;width:1px;height:38px;background:#d2d2d2"></div>
<div style="position:absolute;left:910px;top:1402px;width:1px;height:38px;background:#d2d2d2"></div>
<div style="position:absolute;left:1076px;top:1402px;width:1px;height:38px;background:#d2d2d2"></div>
<div style="position:absolute;left:1242px;top:1402px;width:1px;height:38px;background:#d2d2d2"></div>
<div style="position:absolute;left:1408px;top:1402px;width:1px;height:38px;background:#d2d2d2"></div>
<div style="position:absolute;left:1574px;top:1402px;width:1px;height:38px;background:#d2d2d2"></div>
<div style="position:absolute;left:1939px;top:1402px;width:1px;height:38px;background:#d2d2d2"></div>
<div style="position:absolute;left:2105px;top:1402px;width:1px;height:38px;background:#d2d2d2"></div>
<div style="position:absolute;left:2271px;top:1402px;width:1px;height:38px;background:#d2d2d2"></div>
<div style="position:absolute;left:2453px;top:1402px;width:1px;height:38px;background:#d2d2d2"></div>
<div class="t " style="left:73px;top:1422.25px;font-size:25px;color:#000;font-weight:400;"><span class="b"></span>189119892</div>
<div class="t " style="right:2393px;top:1422.25px;font-size:25px;color:#000;font-weight:400;"><span class="b"></span>2024.07.29 08:19:14</div>
<div class="t " style="right:2227px;top:1422.25px;font-size:25px;color:#000;font-weight:400;"><span class="b"></span>buy</div>
<div class="t " style="right:2094px;top:1422.25px;font-size:25px;color:#000;font-weight:400;"><span class="b"></span>0.01</div>
<div class="t " style="right:1928px;top:1422.25px;font-size:25px;color:#000;font-weight:400;"><span class="b"></span>xauusd</div>
<div class="t " style="right:1762px;top:1422.25px;font-size:25px;color:#000;font-weight:400;"><span class="b"></span>2394.86</div>
<div class="t " style="right:1596px;top:1422.25px;font-size:25px;color:#000;font-weight:400;"><span class="b"></span>0.00</div>
<div class="t " style="right:1430px;top:1422.25px;font-size:25px;color:#000;font-weight:400;"><span class="b"></span>0.00</div>
<div class="t " style="right:1065px;top:1422.25px;font-size:25px;color:#000;font-weight:400;"><span class="b"></span>2024.07.29 08:50:53</div>
<div class="t " style="right:899px;top:1422.25px;font-size:25px;color:#000;font-weight:400;"><span class="b"></span>2393.63</div>
<div class="t " style="right:733px;top:1422.25px;font-size:25px;color:#000;font-weight:400;"><span class="b"></span>0.00</div>
<div class="t " style="right:551px;top:1422.25px;font-size:25px;color:#000;font-weight:400;"><span class="b"></span>-1.23</div>
<svg style="position:absolute;left:36px;top:1407px" width="30" height="34"><path d="M3.5 3H18L24 9V28.5Q24 30 22.5 30H5Q3.5 30 3.5 28.5Z" fill="#000" opacity="0.12" transform="translate(1.2,1.2)"/><path d="M3 2.5H17.5L23.5 8.5V27.5Q23.5 29 22 29H4.5Q3 29 3 27.5Z" fill="url(#docg)" stroke="#585858" stroke-width="1.8"/><path d="M17.5 2.5V8.5H23.5" fill="#fff" stroke="#787878" stroke-width="1.2"/><circle cx="22" cy="24.8" r="6.6" fill="url(#gb)" stroke="#1060a8" stroke-width="0.9"/></svg>
<div class="t " style="left:2798px;top:1422.25px;font-size:25px;color:#000;font-weight:400;"><span class="b"></span>微信</div>
<div style="position:absolute;left:33px;top:1441px;width:2925px;height:39px;background:#ebebeb"></div>
<div style="position:absolute;left:33px;top:1479px;width:2925px;height:1px;background:#d2d2d2"></div>
<div style="position:absolute;left:247px;top:1441px;width:1px;height:38px;background:#d2d2d2"></div>
<div style="position:absolute;left:611px;top:1441px;width:1px;height:38px;background:#d2d2d2"></div>
<div style="position:absolute;left:777px;top:1441px;width:1px;height:38px;background:#d2d2d2"></div>
<div style="position:absolute;left:910px;top:1441px;width:1px;height:38px;background:#d2d2d2"></div>
<div style="position:absolute;left:1076px;top:1441px;width:1px;height:38px;background:#d2d2d2"></div>
<div style="position:absolute;left:1242px;top:1441px;width:1px;height:38px;background:#d2d2d2"></div>
<div style="position:absolute;left:1408px;top:1441px;width:1px;height:38px;background:#d2d2d2"></div>
<div style="position:absolute;left:1574px;top:1441px;width:1px;height:38px;background:#d2d2d2"></div>
<div style="position:absolute;left:1939px;top:1441px;width:1px;height:38px;background:#d2d2d2"></div>
<div style="position:absolute;left:2105px;top:1441px;width:1px;height:38px;background:#d2d2d2"></div>
<div style="position:absolute;left:2271px;top:1441px;width:1px;height:38px;background:#d2d2d2"></div>
<div style="position:absolute;left:2453px;top:1441px;width:1px;height:38px;background:#d2d2d2"></div>
<div class="t " style="left:73px;top:1461.25px;font-size:25px;color:#000;font-weight:400;"><span class="b"></span>189122841</div>
<div class="t " style="right:2393px;top:1461.25px;font-size:25px;color:#000;font-weight:400;"><span class="b"></span>2024.07.29 08:50:54</div>
<div class="t " style="right:2227px;top:1461.25px;font-size:25px;color:#000;font-weight:400;"><span class="b"></span>buy</div>
<div class="t " style="right:2094px;top:1461.25px;font-size:25px;color:#000;font-weight:400;"><span class="b"></span>0.01</div>
<div class="t " style="right:1928px;top:1461.25px;font-size:25px;color:#000;font-weight:400;"><span class="b"></span>xauusd</div>
<div class="t " style="right:1762px;top:1461.25px;font-size:25px;color:#000;font-weight:400;"><span class="b"></span>2393.71</div>
<div class="t " style="right:1596px;top:1461.25px;font-size:25px;color:#000;font-weight:400;"><span class="b"></span>0.00</div>
<div class="t " style="right:1430px;top:1461.25px;font-size:25px;color:#000;font-weight:400;"><span class="b"></span>0.00</div>
<div class="t " style="right:1065px;top:1461.25px;font-size:25px;color:#000;font-weight:400;"><span class="b"></span>2024.07.29 09:05:06</div>
<div class="t " style="right:899px;top:1461.25px;font-size:25px;color:#000;font-weight:400;"><span class="b"></span>2395.29</div>
<div class="t " style="right:733px;top:1461.25px;font-size:25px;color:#000;font-weight:400;"><span class="b"></span>0.00</div>
<div class="t " style="right:551px;top:1461.25px;font-size:25px;color:#000;font-weight:400;"><span class="b"></span>1.58</div>
<svg style="position:absolute;left:36px;top:1446px" width="30" height="34"><path d="M3.5 3H18L24 9V28.5Q24 30 22.5 30H5Q3.5 30 3.5 28.5Z" fill="#000" opacity="0.12" transform="translate(1.2,1.2)"/><path d="M3 2.5H17.5L23.5 8.5V27.5Q23.5 29 22 29H4.5Q3 29 3 27.5Z" fill="url(#docg)" stroke="#585858" stroke-width="1.8"/><path d="M17.5 2.5V8.5H23.5" fill="#fff" stroke="#787878" stroke-width="1.2"/><circle cx="22" cy="24.8" r="6.6" fill="url(#gb)" stroke="#1060a8" stroke-width="0.9"/></svg>
<div class="t " style="left:2798px;top:1461.25px;font-size:25px;color:#000;font-weight:400;"><span class="b"></span>微信</div>
<div style="position:absolute;left:33px;top:1480px;width:2925px;height:39px;background:#ffffff"></div>
<div style="position:absolute;left:33px;top:1518px;width:2925px;height:1px;background:#d2d2d2"></div>
<div style="position:absolute;left:247px;top:1480px;width:1px;height:38px;background:#d2d2d2"></div>
<div style="position:absolute;left:611px;top:1480px;width:1px;height:38px;background:#d2d2d2"></div>
<div style="position:absolute;left:777px;top:1480px;width:1px;height:38px;background:#d2d2d2"></div>
<div style="position:absolute;left:910px;top:1480px;width:1px;height:38px;background:#d2d2d2"></div>
<div style="position:absolute;left:1076px;top:1480px;width:1px;height:38px;background:#d2d2d2"></div>
<div style="position:absolute;left:1242px;top:1480px;width:1px;height:38px;background:#d2d2d2"></div>
<div style="position:absolute;left:1408px;top:1480px;width:1px;height:38px;background:#d2d2d2"></div>
<div style="position:absolute;left:1574px;top:1480px;width:1px;height:38px;background:#d2d2d2"></div>
<div style="position:absolute;left:1939px;top:1480px;width:1px;height:38px;background:#d2d2d2"></div>
<div style="position:absolute;left:2105px;top:1480px;width:1px;height:38px;background:#d2d2d2"></div>
<div style="position:absolute;left:2271px;top:1480px;width:1px;height:38px;background:#d2d2d2"></div>
<div style="position:absolute;left:2453px;top:1480px;width:1px;height:38px;background:#d2d2d2"></div>
<div class="t " style="left:73px;top:1500.25px;font-size:25px;color:#000;font-weight:400;"><span class="b"></span>189122921</div>
<div class="t " style="right:2393px;top:1500.25px;font-size:25px;color:#000;font-weight:400;"><span class="b"></span>2024.07.29 08:51:23</div>
<div class="t " style="right:2227px;top:1500.25px;font-size:25px;color:#000;font-weight:400;"><span class="b"></span>sell</div>
<div class="t " style="right:2094px;top:1500.25px;font-size:25px;color:#000;font-weight:400;"><span class="b"></span>0.01</div>
<div class="t " style="right:1928px;top:1500.25px;font-size:25px;color:#000;font-weight:400;"><span class="b"></span>xauusd</div>
<div class="t " style="right:1762px;top:1500.25px;font-size:25px;color:#000;font-weight:400;"><span class="b"></span>2393.79</div>
<div class="t " style="right:1596px;top:1500.25px;font-size:25px;color:#000;font-weight:400;"><span class="b"></span>0.00</div>
<div class="t " style="right:1430px;top:1500.25px;font-size:25px;color:#000;font-weight:400;"><span class="b"></span>0.00</div>
<div class="t " style="right:1065px;top:1500.25px;font-size:25px;color:#000;font-weight:400;"><span class="b"></span>2024.07.29 09:27:39</div>
<div class="t " style="right:899px;top:1500.25px;font-size:25px;color:#000;font-weight:400;"><span class="b"></span>2392.02</div>
<div class="t " style="right:733px;top:1500.25px;font-size:25px;color:#000;font-weight:400;"><span class="b"></span>0.00</div>
<div class="t " style="right:551px;top:1500.25px;font-size:25px;color:#000;font-weight:400;"><span class="b"></span>1.77</div>
<svg style="position:absolute;left:36px;top:1485px" width="30" height="34"><path d="M3.5 3H18L24 9V28.5Q24 30 22.5 30H5Q3.5 30 3.5 28.5Z" fill="#000" opacity="0.12" transform="translate(1.2,1.2)"/><path d="M3 2.5H17.5L23.5 8.5V27.5Q23.5 29 22 29H4.5Q3 29 3 27.5Z" fill="url(#docg)" stroke="#585858" stroke-width="1.8"/><path d="M17.5 2.5V8.5H23.5" fill="#fff" stroke="#787878" stroke-width="1.2"/><circle cx="22" cy="24.8" r="6.6" fill="url(#gs)" stroke="#a02a10" stroke-width="0.9"/></svg>
<div class="t " style="left:2798px;top:1500.25px;font-size:25px;color:#000;font-weight:400;"><span class="b"></span>微信</div>
<div style="position:absolute;left:33px;top:1519px;width:2925px;height:39px;background:#ebebeb"></div>
<div style="position:absolute;left:33px;top:1557px;width:2925px;height:1px;background:#d2d2d2"></div>
<div style="position:absolute;left:247px;top:1519px;width:1px;height:38px;background:#d2d2d2"></div>
<div style="position:absolute;left:611px;top:1519px;width:1px;height:38px;background:#d2d2d2"></div>
<div style="position:absolute;left:777px;top:1519px;width:1px;height:38px;background:#d2d2d2"></div>
<div style="position:absolute;left:910px;top:1519px;width:1px;height:38px;background:#d2d2d2"></div>
<div style="position:absolute;left:1076px;top:1519px;width:1px;height:38px;background:#d2d2d2"></div>
<div style="position:absolute;left:1242px;top:1519px;width:1px;height:38px;background:#d2d2d2"></div>
<div style="position:absolute;left:1408px;top:1519px;width:1px;height:38px;background:#d2d2d2"></div>
<div style="position:absolute;left:1574px;top:1519px;width:1px;height:38px;background:#d2d2d2"></div>
<div style="position:absolute;left:1939px;top:1519px;width:1px;height:38px;background:#d2d2d2"></div>
<div style="position:absolute;left:2105px;top:1519px;width:1px;height:38px;background:#d2d2d2"></div>
<div style="position:absolute;left:2271px;top:1519px;width:1px;height:38px;background:#d2d2d2"></div>
<div style="position:absolute;left:2453px;top:1519px;width:1px;height:38px;background:#d2d2d2"></div>
<div class="t " style="left:73px;top:1539.25px;font-size:25px;color:#000;font-weight:400;"><span class="b"></span>189125256</div>
<div class="t " style="right:2393px;top:1539.25px;font-size:25px;color:#000;font-weight:400;"><span class="b"></span>2024.07.29 09:20:26</div>
<div class="t " style="right:2227px;top:1539.25px;font-size:25px;color:#000;font-weight:400;"><span class="b"></span>buy</div>
<div class="t " style="right:2094px;top:1539.25px;font-size:25px;color:#000;font-weight:400;"><span class="b"></span>0.01</div>
<div class="t " style="right:1928px;top:1539.25px;font-size:25px;color:#000;font-weight:400;"><span class="b"></span>xauusd</div>
<div class="t " style="right:1762px;top:1539.25px;font-size:25px;color:#000;font-weight:400;"><span class="b"></span>2393.50</div>
<div class="t " style="right:1596px;top:1539.25px;font-size:25px;color:#000;font-weight:400;"><span class="b"></span>0.00</div>
<div class="t " style="right:1430px;top:1539.25px;font-size:25px;color:#000;font-weight:400;"><span class="b"></span>0.00</div>
<div class="t " style="right:1065px;top:1539.25px;font-size:25px;color:#000;font-weight:400;"><span class="b"></span>2024.07.29 09:33:05</div>
<div class="t " style="right:899px;top:1539.25px;font-size:25px;color:#000;font-weight:400;"><span class="b"></span>2395.24</div>
<div class="t " style="right:733px;top:1539.25px;font-size:25px;color:#000;font-weight:400;"><span class="b"></span>0.00</div>
<div class="t " style="right:551px;top:1539.25px;font-size:25px;color:#000;font-weight:400;"><span class="b"></span>1.74</div>
<svg style="position:absolute;left:36px;top:1524px" width="30" height="34"><path d="M3.5 3H18L24 9V28.5Q24 30 22.5 30H5Q3.5 30 3.5 28.5Z" fill="#000" opacity="0.12" transform="translate(1.2,1.2)"/><path d="M3 2.5H17.5L23.5 8.5V27.5Q23.5 29 22 29H4.5Q3 29 3 27.5Z" fill="url(#docg)" stroke="#585858" stroke-width="1.8"/><path d="M17.5 2.5V8.5H23.5" fill="#fff" stroke="#787878" stroke-width="1.2"/><circle cx="22" cy="24.8" r="6.6" fill="url(#gb)" stroke="#1060a8" stroke-width="0.9"/></svg>
<div class="t " style="left:2798px;top:1539.25px;font-size:25px;color:#000;font-weight:400;"><span class="b"></span>微信</div>
<div style="position:absolute;left:33px;top:1558px;width:2925px;height:39px;background:#ffffff"></div>
<div style="position:absolute;left:33px;top:1596px;width:2925px;height:1px;background:#d2d2d2"></div>
<div style="position:absolute;left:247px;top:1558px;width:1px;height:38px;background:#d2d2d2"></div>
<div style="position:absolute;left:611px;top:1558px;width:1px;height:38px;background:#d2d2d2"></div>
<div style="position:absolute;left:777px;top:1558px;width:1px;height:38px;background:#d2d2d2"></div>
<div style="position:absolute;left:910px;top:1558px;width:1px;height:38px;background:#d2d2d2"></div>
<div style="position:absolute;left:1076px;top:1558px;width:1px;height:38px;background:#d2d2d2"></div>
<div style="position:absolute;left:1242px;top:1558px;width:1px;height:38px;background:#d2d2d2"></div>
<div style="position:absolute;left:1408px;top:1558px;width:1px;height:38px;background:#d2d2d2"></div>
<div style="position:absolute;left:1574px;top:1558px;width:1px;height:38px;background:#d2d2d2"></div>
<div style="position:absolute;left:1939px;top:1558px;width:1px;height:38px;background:#d2d2d2"></div>
<div style="position:absolute;left:2105px;top:1558px;width:1px;height:38px;background:#d2d2d2"></div>
<div style="position:absolute;left:2271px;top:1558px;width:1px;height:38px;background:#d2d2d2"></div>
<div style="position:absolute;left:2453px;top:1558px;width:1px;height:38px;background:#d2d2d2"></div>
<div class="t " style="left:73px;top:1578.25px;font-size:25px;color:#000;font-weight:400;"><span class="b"></span>189126177</div>
<div class="t " style="right:2393px;top:1578.25px;font-size:25px;color:#000;font-weight:400;"><span class="b"></span>2024.07.29 09:32:20</div>
<div class="t " style="right:2227px;top:1578.25px;font-size:25px;color:#000;font-weight:400;"><span class="b"></span>sell</div>
<div class="t " style="right:2094px;top:1578.25px;font-size:25px;color:#000;font-weight:400;"><span class="b"></span>0.01</div>
<div class="t " style="right:1928px;top:1578.25px;font-size:25px;color:#000;font-weight:400;"><span class="b"></span>xauusd</div>
<div class="t " style="right:1762px;top:1578.25px;font-size:25px;color:#000;font-weight:400;"><span class="b"></span>2393.55</div>
<div class="t " style="right:1596px;top:1578.25px;font-size:25px;color:#000;font-weight:400;"><span class="b"></span>0.00</div>
<div class="t " style="right:1430px;top:1578.25px;font-size:25px;color:#000;font-weight:400;"><span class="b"></span>0.00</div>
<div class="t " style="right:1065px;top:1578.25px;font-size:25px;color:#000;font-weight:400;"><span class="b"></span>2024.07.29 09:36:33</div>
<div class="t " style="right:899px;top:1578.25px;font-size:25px;color:#000;font-weight:400;"><span class="b"></span>2391.95</div>
<div class="t " style="right:733px;top:1578.25px;font-size:25px;color:#000;font-weight:400;"><span class="b"></span>0.00</div>
<div class="t " style="right:551px;top:1578.25px;font-size:25px;color:#000;font-weight:400;"><span class="b"></span>1.60</div>
<svg style="position:absolute;left:36px;top:1563px" width="30" height="34"><path d="M3.5 3H18L24 9V28.5Q24 30 22.5 30H5Q3.5 30 3.5 28.5Z" fill="#000" opacity="0.12" transform="translate(1.2,1.2)"/><path d="M3 2.5H17.5L23.5 8.5V27.5Q23.5 29 22 29H4.5Q3 29 3 27.5Z" fill="url(#docg)" stroke="#585858" stroke-width="1.8"/><path d="M17.5 2.5V8.5H23.5" fill="#fff" stroke="#787878" stroke-width="1.2"/><circle cx="22" cy="24.8" r="6.6" fill="url(#gs)" stroke="#a02a10" stroke-width="0.9"/></svg>
<div class="t " style="left:2798px;top:1578.25px;font-size:25px;color:#000;font-weight:400;"><span class="b"></span>微信</div>
<div style="position:absolute;left:33px;top:1597px;width:2925px;height:39px;background:#ebebeb"></div>
<div style="position:absolute;left:33px;top:1635px;width:2925px;height:1px;background:#d2d2d2"></div>
<div style="position:absolute;left:247px;top:1597px;width:1px;height:38px;background:#d2d2d2"></div>
<div style="position:absolute;left:611px;top:1597px;width:1px;height:38px;background:#d2d2d2"></div>
<div style="position:absolute;left:777px;top:1597px;width:1px;height:38px;background:#d2d2d2"></div>
<div style="position:absolute;left:910px;top:1597px;width:1px;height:38px;background:#d2d2d2"></div>
<div style="position:absolute;left:1076px;top:1597px;width:1px;height:38px;background:#d2d2d2"></div>
<div style="position:absolute;left:1242px;top:1597px;width:1px;height:38px;background:#d2d2d2"></div>
<div style="position:absolute;left:1408px;top:1597px;width:1px;height:38px;background:#d2d2d2"></div>
<div style="position:absolute;left:1574px;top:1597px;width:1px;height:38px;background:#d2d2d2"></div>
<div style="position:absolute;left:1939px;top:1597px;width:1px;height:38px;background:#d2d2d2"></div>
<div style="position:absolute;left:2105px;top:1597px;width:1px;height:38px;background:#d2d2d2"></div>
<div style="position:absolute;left:2271px;top:1597px;width:1px;height:38px;background:#d2d2d2"></div>
<div style="position:absolute;left:2453px;top:1597px;width:1px;height:38px;background:#d2d2d2"></div>
<div class="t " style="left:73px;top:1617.25px;font-size:25px;color:#000;font-weight:400;"><span class="b"></span>189128818</div>
<div class="t " style="right:2393px;top:1617.25px;font-size:25px;color:#000;font-weight:400;"><span class="b"></span>2024.07.29 09:55:27</div>
<div class="t " style="right:2227px;top:1617.25px;font-size:25px;color:#000;font-weight:400;"><span class="b"></span>sell</div>
<div class="t " style="right:2094px;top:1617.25px;font-size:25px;color:#000;font-weight:400;"><span class="b"></span>0.01</div>
<div class="t " style="right:1928px;top:1617.25px;font-size:25px;color:#000;font-weight:400;"><span class="b"></span>xauusd</div>
<div class="t " style="right:1762px;top:1617.25px;font-size:25px;color:#000;font-weight:400;"><span class="b"></span>2392.71</div>
<div class="t " style="right:1596px;top:1617.25px;font-size:25px;color:#000;font-weight:400;"><span class="b"></span>0.00</div>
<div class="t " style="right:1430px;top:1617.25px;font-size:25px;color:#000;font-weight:400;"><span class="b"></span>0.00</div>
<div class="t " style="right:1065px;top:1617.25px;font-size:25px;color:#000;font-weight:400;"><span class="b"></span>2024.07.29 10:01:15</div>
<div class="t " style="right:899px;top:1617.25px;font-size:25px;color:#000;font-weight:400;"><span class="b"></span>2391.16</div>
<div class="t " style="right:733px;top:1617.25px;font-size:25px;color:#000;font-weight:400;"><span class="b"></span>0.00</div>
<div class="t " style="right:551px;top:1617.25px;font-size:25px;color:#000;font-weight:400;"><span class="b"></span>1.55</div>
<svg style="position:absolute;left:36px;top:1602px" width="30" height="34"><path d="M3.5 3H18L24 9V28.5Q24 30 22.5 30H5Q3.5 30 3.5 28.5Z" fill="#000" opacity="0.12" transform="translate(1.2,1.2)"/><path d="M3 2.5H17.5L23.5 8.5V27.5Q23.5 29 22 29H4.5Q3 29 3 27.5Z" fill="url(#docg)" stroke="#585858" stroke-width="1.8"/><path d="M17.5 2.5V8.5H23.5" fill="#fff" stroke="#787878" stroke-width="1.2"/><circle cx="22" cy="24.8" r="6.6" fill="url(#gs)" stroke="#a02a10" stroke-width="0.9"/></svg>
<div class="t " style="left:2798px;top:1617.25px;font-size:25px;color:#000;font-weight:400;"><span class="b"></span>微信</div>
<div style="position:absolute;left:33px;top:1636px;width:2925px;height:39px;background:#0078d7"></div>
<div style="position:absolute;left:33px;top:1674px;width:2925px;height:1px;background:#0078d7"></div>
<div style="position:absolute;left:247px;top:1636px;width:1px;height:38px;background:#3f96df"></div>
<div style="position:absolute;left:611px;top:1636px;width:1px;height:38px;background:#3f96df"></div>
<div style="position:absolute;left:777px;top:1636px;width:1px;height:38px;background:#3f96df"></div>
<div style="position:absolute;left:910px;top:1636px;width:1px;height:38px;background:#3f96df"></div>
<div style="position:absolute;left:1076px;top:1636px;width:1px;height:38px;background:#3f96df"></div>
<div style="position:absolute;left:1242px;top:1636px;width:1px;height:38px;background:#3f96df"></div>
<div style="position:absolute;left:1408px;top:1636px;width:1px;height:38px;background:#3f96df"></div>
<div style="position:absolute;left:1574px;top:1636px;width:1px;height:38px;background:#3f96df"></div>
<div style="position:absolute;left:1939px;top:1636px;width:1px;height:38px;background:#3f96df"></div>
<div style="position:absolute;left:2105px;top:1636px;width:1px;height:38px;background:#3f96df"></div>
<div style="position:absolute;left:2271px;top:1636px;width:1px;height:38px;background:#3f96df"></div>
<div style="position:absolute;left:2453px;top:1636px;width:1px;height:38px;background:#3f96df"></div>
<div class="t " style="left:73px;top:1656.25px;font-size:25px;color:#fff;font-weight:400;"><span class="b"></span>189123345</div>
<div class="t " style="right:2393px;top:1656.25px;font-size:25px;color:#fff;font-weight:400;"><span class="b"></span>2024.07.29 08:57:51</div>
<div class="t " style="right:2227px;top:1656.25px;font-size:25px;color:#fff;font-weight:400;"><span class="b"></span>sell</div>
<div class="t " style="right:2094px;top:1656.25px;font-size:25px;color:#fff;font-weight:400;"><span class="b"></span>13.00</div>
<div class="t " style="right:1928px;top:1656.25px;font-size:25px;color:#fff;font-weight:400;"><span class="b"></span>xauusd</div>
<div class="t " style="right:1762px;top:1656.25px;font-size:25px;color:#fff;font-weight:400;"><span class="b"></span>2392.63</div>
<div class="t " style="right:1596px;top:1656.25px;font-size:25px;color:#fff;font-weight:400;"><span class="b"></span>0.00</div>
<div class="t " style="right:1430px;top:1656.25px;font-size:25px;color:#fff;font-weight:400;"><span class="b"></span>0.00</div>
<div class="t " style="right:1065px;top:1656.25px;font-size:25px;color:#fff;font-weight:400;"><span class="b"></span>2024.07.29 10:02:36</div>
<div class="t " style="right:899px;top:1656.25px;font-size:25px;color:#fff;font-weight:400;"><span class="b"></span>2391.00</div>
<div class="t " style="right:733px;top:1656.25px;font-size:25px;color:#fff;font-weight:400;"><span class="b"></span>0.00</div>
<div class="t " style="right:551px;top:1656.25px;font-size:25px;color:#fff;font-weight:400;"><span class="b"></span>2 119.00</div>
<svg style="position:absolute;left:36px;top:1641px" width="30" height="34"><path d="M3.5 3H18L24 9V28.5Q24 30 22.5 30H5Q3.5 30 3.5 28.5Z" fill="#000" opacity="0.12" transform="translate(1.2,1.2)"/><path d="M3 2.5H17.5L23.5 8.5V27.5Q23.5 29 22 29H4.5Q3 29 3 27.5Z" fill="url(#docg)" stroke="#585858" stroke-width="1.8"/><path d="M17.5 2.5V8.5H23.5" fill="#fff" stroke="#787878" stroke-width="1.2"/><circle cx="22" cy="24.8" r="6.6" fill="url(#gs)" stroke="#a02a10" stroke-width="0.9"/></svg>
<div style="position:absolute;left:33px;top:1675px;width:2925px;height:39px;background:#ebebeb"></div>
<div style="position:absolute;left:33px;top:1713px;width:2925px;height:1px;background:#d2d2d2"></div>
<div style="position:absolute;left:247px;top:1675px;width:1px;height:38px;background:#d2d2d2"></div>
<div style="position:absolute;left:611px;top:1675px;width:1px;height:38px;background:#d2d2d2"></div>
<div style="position:absolute;left:777px;top:1675px;width:1px;height:38px;background:#d2d2d2"></div>
<div style="position:absolute;left:910px;top:1675px;width:1px;height:38px;background:#d2d2d2"></div>
<div style="position:absolute;left:1076px;top:1675px;width:1px;height:38px;background:#d2d2d2"></div>
<div style="position:absolute;left:1242px;top:1675px;width:1px;height:38px;background:#d2d2d2"></div>
<div style="position:absolute;left:1408px;top:1675px;width:1px;height:38px;background:#d2d2d2"></div>
<div style="position:absolute;left:1574px;top:1675px;width:1px;height:38px;background:#d2d2d2"></div>
<div style="position:absolute;left:1939px;top:1675px;width:1px;height:38px;background:#d2d2d2"></div>
<div style="position:absolute;left:2105px;top:1675px;width:1px;height:38px;background:#d2d2d2"></div>
<div style="position:absolute;left:2271px;top:1675px;width:1px;height:38px;background:#d2d2d2"></div>
<div style="position:absolute;left:2453px;top:1675px;width:1px;height:38px;background:#d2d2d2"></div>
<div class="t " style="left:73px;top:1695.25px;font-size:25px;color:#000;font-weight:400;"><span class="b"></span>189130267</div>
<div class="t " style="right:2393px;top:1695.25px;font-size:25px;color:#000;font-weight:400;"><span class="b"></span>2024.07.29 10:06:31</div>
<div class="t " style="right:2227px;top:1695.25px;font-size:25px;color:#000;font-weight:400;"><span class="b"></span>sell</div>
<div class="t " style="right:2094px;top:1695.25px;font-size:25px;color:#000;font-weight:400;"><span class="b"></span>0.01</div>
<div class="t " style="right:1928px;top:1695.25px;font-size:25px;color:#000;font-weight:400;"><span class="b"></span>xauusd</div>
<div class="t " style="right:1762px;top:1695.25px;font-size:25px;color:#000;font-weight:400;"><span class="b"></span>2391.79</div>
<div class="t " style="right:1596px;top:1695.25px;font-size:25px;color:#000;font-weight:400;"><span class="b"></span>0.00</div>
<div class="t " style="right:1430px;top:1695.25px;font-size:25px;color:#000;font-weight:400;"><span class="b"></span>0.00</div>
<div class="t " style="right:1065px;top:1695.25px;font-size:25px;color:#000;font-weight:400;"><span class="b"></span>2024.07.29 10:09:32</div>
<div class="t " style="right:899px;top:1695.25px;font-size:25px;color:#000;font-weight:400;"><span class="b"></span>2390.23</div>
<div class="t " style="right:733px;top:1695.25px;font-size:25px;color:#000;font-weight:400;"><span class="b"></span>0.00</div>
<div class="t " style="right:551px;top:1695.25px;font-size:25px;color:#000;font-weight:400;"><span class="b"></span>1.56</div>
<svg style="position:absolute;left:36px;top:1680px" width="30" height="34"><path d="M3.5 3H18L24 9V28.5Q24 30 22.5 30H5Q3.5 30 3.5 28.5Z" fill="#000" opacity="0.12" transform="translate(1.2,1.2)"/><path d="M3 2.5H17.5L23.5 8.5V27.5Q23.5 29 22 29H4.5Q3 29 3 27.5Z" fill="url(#docg)" stroke="#585858" stroke-width="1.8"/><path d="M17.5 2.5V8.5H23.5" fill="#fff" stroke="#787878" stroke-width="1.2"/><circle cx="22" cy="24.8" r="6.6" fill="url(#gs)" stroke="#a02a10" stroke-width="0.9"/></svg>
<div class="t " style="left:2798px;top:1695.25px;font-size:25px;color:#000;font-weight:400;"><span class="b"></span>微信</div>
<div style="position:absolute;left:33px;top:1714px;width:2925px;height:39px;background:#ffffff"></div>
<div style="position:absolute;left:33px;top:1752px;width:2925px;height:1px;background:#d2d2d2"></div>
<div style="position:absolute;left:247px;top:1714px;width:1px;height:38px;background:#d2d2d2"></div>
<div style="position:absolute;left:611px;top:1714px;width:1px;height:38px;background:#d2d2d2"></div>
<div style="position:absolute;left:777px;top:1714px;width:1px;height:38px;background:#d2d2d2"></div>
<div style="position:absolute;left:910px;top:1714px;width:1px;height:38px;background:#d2d2d2"></div>
<div style="position:absolute;left:1076px;top:1714px;width:1px;height:38px;background:#d2d2d2"></div>
<div style="position:absolute;left:1242px;top:1714px;width:1px;height:38px;background:#d2d2d2"></div>
<div style="position:absolute;left:1408px;top:1714px;width:1px;height:38px;background:#d2d2d2"></div>
<div style="position:absolute;left:1574px;top:1714px;width:1px;height:38px;background:#d2d2d2"></div>
<div style="position:absolute;left:1939px;top:1714px;width:1px;height:38px;background:#d2d2d2"></div>
<div style="position:absolute;left:2105px;top:1714px;width:1px;height:38px;background:#d2d2d2"></div>
<div style="position:absolute;left:2271px;top:1714px;width:1px;height:38px;background:#d2d2d2"></div>
<div style="position:absolute;left:2453px;top:1714px;width:1px;height:38px;background:#d2d2d2"></div>
<div class="t " style="left:73px;top:1734.25px;font-size:25px;color:#000;font-weight:400;"><span class="b"></span>189131842</div>
<div class="t " style="right:2393px;top:1734.25px;font-size:25px;color:#000;font-weight:400;"><span class="b"></span>2024.07.29 10:16:50</div>
<div class="t " style="right:2227px;top:1734.25px;font-size:25px;color:#000;font-weight:400;"><span class="b"></span>sell</div>
<div class="t " style="right:2094px;top:1734.25px;font-size:25px;color:#000;font-weight:400;"><span class="b"></span>0.01</div>
<div class="t " style="right:1928px;top:1734.25px;font-size:25px;color:#000;font-weight:400;"><span class="b"></span>xauusd</div>
<div class="t " style="right:1762px;top:1734.25px;font-size:25px;color:#000;font-weight:400;"><span class="b"></span>2391.66</div>
<div class="t " style="right:1596px;top:1734.25px;font-size:25px;color:#000;font-weight:400;"><span class="b"></span>0.00</div>
<div class="t " style="right:1430px;top:1734.25px;font-size:25px;color:#000;font-weight:400;"><span class="b"></span>0.00</div>
<div class="t " style="right:1065px;top:1734.25px;font-size:25px;color:#000;font-weight:400;"><span class="b"></span>2024.07.29 10:20:41</div>
<div class="t " style="right:899px;top:1734.25px;font-size:25px;color:#000;font-weight:400;"><span class="b"></span>2390.06</div>
<div class="t " style="right:733px;top:1734.25px;font-size:25px;color:#000;font-weight:400;"><span class="b"></span>0.00</div>
<div class="t " style="right:551px;top:1734.25px;font-size:25px;color:#000;font-weight:400;"><span class="b"></span>1.60</div>
<svg style="position:absolute;left:36px;top:1719px" width="30" height="34"><path d="M3.5 3H18L24 9V28.5Q24 30 22.5 30H5Q3.5 30 3.5 28.5Z" fill="#000" opacity="0.12" transform="translate(1.2,1.2)"/><path d="M3 2.5H17.5L23.5 8.5V27.5Q23.5 29 22 29H4.5Q3 29 3 27.5Z" fill="url(#docg)" stroke="#585858" stroke-width="1.8"/><path d="M17.5 2.5V8.5H23.5" fill="#fff" stroke="#787878" stroke-width="1.2"/><circle cx="22" cy="24.8" r="6.6" fill="url(#gs)" stroke="#a02a10" stroke-width="0.9"/></svg>
<div class="t " style="left:2798px;top:1734.25px;font-size:25px;color:#000;font-weight:400;"><span class="b"></span>微信</div>
<svg style="position:absolute;left:2800px;top:895px" width="163" height="858" shape-rendering="crispEdges"><rect x="69" y="5" width="11" height="12" fill="#d2d2d0"/><rect x="80" y="5" width="12" height="12" fill="#d7d7d3"/><rect x="92" y="5" width="12" height="12" fill="#c2c2c6"/><rect x="104" y="5" width="12" height="12" fill="#c4c4c5"/><rect x="116" y="5" width="12" height="12" fill="#c1c1c5"/><rect x="128" y="5" width="12" height="12" fill="#cbcbc7"/><rect x="140" y="5" width="12" height="12" fill="#c3c3c5"/><rect x="152" y="5" width="11" height="12" fill="#ebebeb"/><rect x="69" y="17" width="11" height="12" fill="#a6a6a3"/><rect x="80" y="17" width="12" height="12" fill="#9b9b98"/><rect x="92" y="17" width="12" height="12" fill="#afafb1"/><rect x="104" y="17" width="12" height="12" fill="#8f8f8c"/><rect x="116" y="17" width="12" height="12" fill="#c8c8c7"/><rect x="128" y="17" width="12" height="12" fill="#b4b4b0"/><rect x="140" y="17" width="12" height="12" fill="#b0b0b2"/><rect x="152" y="17" width="11" height="12" fill="#ebebeb"/><rect x="69" y="29" width="11" height="12" fill="#ebebea"/><rect x="80" y="29" width="12" height="12" fill="#ebebef"/><rect x="92" y="29" width="12" height="12" fill="#e9e9e9"/><rect x="104" y="29" width="12" height="12" fill="#e5e5e3"/><rect x="116" y="29" width="12" height="12" fill="#e3e3e0"/><rect x="128" y="29" width="12" height="12" fill="#e7e7eb"/><rect x="140" y="29" width="12" height="12" fill="#e9e9e6"/><rect x="152" y="29" width="11" height="12" fill="#ebebeb"/><rect x="69" y="41" width="11" height="12" fill="#cacacb"/><rect x="80" y="41" width="12" height="12" fill="#c4c4c8"/><rect x="92" y="41" width="12" height="12" fill="#c2c2be"/><rect x="104" y="41" width="12" height="12" fill="#cbcbce"/><rect x="116" y="41" width="12" height="12" fill="#e0e0e2"/><rect x="128" y="41" width="12" height="12" fill="#d2d2d5"/><rect x="140" y="41" width="12" height="12" fill="#dbdbdc"/><rect x="152" y="41" width="11" height="12" fill="#fafafa"/><rect x="69" y="53" width="11" height="12" fill="#9f9f9e"/><rect x="80" y="53" width="12" height="12" fill="#bebebc"/><rect x="92" y="53" width="12" height="12" fill="#b8b8b7"/><rect x="104" y="53" width="12" height="12" fill="#919191"/><rect x="116" y="53" width="12" height="12" fill="#adadb0"/><rect x="128" y="53" width="12" height="12" fill="#c4c4c5"/><rect x="140" y="53" width="12" height="12" fill="#bababd"/><rect x="152" y="53" width="11" height="12" fill="#fafafa"/><rect x="69" y="65" width="11" height="12" fill="#d0d0cd"/><rect x="80" y="65" width="12" height="12" fill="#c5c5c9"/><rect x="92" y="65" width="12" height="12" fill="#d8d8d6"/><rect x="104" y="65" width="12" height="12" fill="#d3d3d1"/><rect x="116" y="65" width="12" height="12" fill="#dddddf"/><rect x="128" y="65" width="12" height="12" fill="#c0c0bd"/><rect x="140" y="65" width="12" height="12" fill="#e1e1e2"/><rect x="152" y="65" width="11" height="12" fill="#fafafa"/><rect x="69" y="77" width="11" height="12" fill="#e6e6e7"/><rect x="80" y="77" width="12" height="12" fill="#e4e4e7"/><rect x="92" y="77" width="12" height="12" fill="#eaeae7"/><rect x="104" y="77" width="12" height="12" fill="#e7e7ea"/><rect x="116" y="77" width="12" height="12" fill="#eaeae6"/><rect x="128" y="77" width="12" height="12" fill="#e7e7ea"/><rect x="140" y="77" width="12" height="12" fill="#e7e7e9"/><rect x="152" y="77" width="11" height="12" fill="#ebebeb"/><rect x="69" y="89" width="11" height="12" fill="#c4c4c5"/><rect x="80" y="89" width="12" height="12" fill="#8d8d90"/><rect x="92" y="89" width="12" height="12" fill="#a2a2a0"/><rect x="104" y="89" width="12" height="12" fill="#b3b3b0"/><rect x="116" y="89" width="12" height="12" fill="#ababa7"/><rect x="128" y="89" width="12" height="12" fill="#999999"/><rect x="140" y="89" width="12" height="12" fill="#949493"/><rect x="152" y="89" width="11" height="12" fill="#ebebeb"/><rect x="69" y="101" width="11" height="12" fill="#d7d7d9"/><rect x="80" y="101" width="12" height="12" fill="#ddddda"/><rect x="92" y="101" width="12" height="12" fill="#c8c8cb"/><rect x="104" y="101" width="12" height="12" fill="#d7d7db"/><rect x="116" y="101" width="12" height="12" fill="#cfcfcd"/><rect x="128" y="101" width="12" height="12" fill="#d9d9dd"/><rect x="140" y="101" width="12" height="12" fill="#cfcfd1"/><rect x="152" y="101" width="11" height="12" fill="#ebebeb"/><rect x="69" y="113" width="11" height="12" fill="#f5f5f7"/><rect x="80" y="113" width="12" height="12" fill="#f7f7f5"/><rect x="92" y="113" width="12" height="12" fill="#f9f9f7"/><rect x="104" y="113" width="12" height="12" fill="#f8f8f7"/><rect x="116" y="113" width="12" height="12" fill="#f7f7f3"/><rect x="128" y="113" width="12" height="12" fill="#f3f3f1"/><rect x="140" y="113" width="12" height="12" fill="#f6f6f6"/><rect x="152" y="113" width="11" height="12" fill="#fafafa"/><rect x="69" y="125" width="11" height="12" fill="#8c8c8a"/><rect x="80" y="125" width="12" height="12" fill="#a6a6aa"/><rect x="92" y="125" width="12" height="12" fill="#a3a3a4"/><rect x="104" y="125" width="12" height="12" fill="#c8c8c6"/><rect x="116" y="125" width="12" height="12" fill="#b8b8bc"/><rect x="128" y="125" width="12" height="12" fill="#c8c8c4"/><rect x="140" y="125" width="12" height="12" fill="#a9a9ad"/><rect x="152" y="125" width="11" height="12" fill="#fafafa"/><rect x="69" y="137" width="11" height="12" fill="#a5a5a7"/><rect x="80" y="137" width="12" height="12" fill="#a5a5a7"/><rect x="92" y="137" width="12" height="12" fill="#929295"/><rect x="104" y="137" width="12" height="12" fill="#b4b4b6"/><rect x="116" y="137" width="12" height="12" fill="#8f8f8e"/><rect x="128" y="137" width="12" height="12" fill="#90908f"/><rect x="140" y="137" width="12" height="12" fill="#a8a8a6"/><rect x="152" y="137" width="11" height="12" fill="#fafafa"/><rect x="69" y="149" width="11" height="12" fill="#f9f9fa"/><rect x="80" y="149" width="12" height="12" fill="#fafaf7"/><rect x="92" y="149" width="12" height="12" fill="#fafaf8"/><rect x="104" y="149" width="12" height="12" fill="#f2f2ef"/><rect x="116" y="149" width="12" height="12" fill="#f5f5f1"/><rect x="128" y="149" width="12" height="12" fill="#f9f9f8"/><rect x="140" y="149" width="12" height="12" fill="#f4f4f2"/><rect x="152" y="149" width="11" height="12" fill="#fafafa"/><rect x="69" y="161" width="11" height="12" fill="#cececf"/><rect x="80" y="161" width="12" height="12" fill="#d5d5d8"/><rect x="92" y="161" width="12" height="12" fill="#c5c5c2"/><rect x="104" y="161" width="12" height="12" fill="#dddde0"/><rect x="116" y="161" width="12" height="12" fill="#dcdcdf"/><rect x="128" y="161" width="12" height="12" fill="#d1d1ce"/><rect x="140" y="161" width="12" height="12" fill="#c7c7c4"/><rect x="152" y="161" width="11" height="12" fill="#ebebeb"/><rect x="69" y="173" width="11" height="12" fill="#bbbbbc"/><rect x="80" y="173" width="12" height="12" fill="#bbbbbb"/><rect x="92" y="173" width="12" height="12" fill="#aaaaa8"/><rect x="104" y="173" width="12" height="12" fill="#adada9"/><rect x="116" y="173" width="12" height="12" fill="#99999d"/><rect x="128" y="173" width="12" height="12" fill="#a3a3a1"/><rect x="140" y="173" width="12" height="12" fill="#b8b8bc"/><rect x="152" y="173" width="11" height="12" fill="#ebebeb"/><rect x="69" y="185" width="11" height="12" fill="#ebebef"/><rect x="80" y="185" width="12" height="12" fill="#e7e7e4"/><rect x="92" y="185" width="12" height="12" fill="#e7e7eb"/><rect x="104" y="185" width="12" height="12" fill="#e6e6e4"/><rect x="116" y="185" width="12" height="12" fill="#e6e6e5"/><rect x="128" y="185" width="12" height="12" fill="#e3e3e7"/><rect x="140" y="185" width="12" height="12" fill="#e3e3e4"/><rect x="152" y="185" width="11" height="12" fill="#ebebeb"/><rect x="69" y="197" width="11" height="12" fill="#cccccb"/><rect x="80" y="197" width="12" height="12" fill="#cdcdcf"/><rect x="92" y="197" width="12" height="12" fill="#cccccb"/><rect x="104" y="197" width="12" height="12" fill="#dfdfe2"/><rect x="116" y="197" width="12" height="12" fill="#d4d4d0"/><rect x="128" y="197" width="12" height="12" fill="#bfbfbf"/><rect x="140" y="197" width="12" height="12" fill="#dcdcdc"/><rect x="152" y="197" width="11" height="12" fill="#fafafa"/><rect x="69" y="209" width="11" height="12" fill="#989899"/><rect x="80" y="209" width="12" height="12" fill="#a8a8a9"/><rect x="92" y="209" width="12" height="12" fill="#a3a3a0"/><rect x="104" y="209" width="12" height="12" fill="#9a9a97"/><rect x="116" y="209" width="12" height="12" fill="#9a9a9d"/><rect x="128" y="209" width="12" height="12" fill="#989899"/><rect x="140" y="209" width="12" height="12" fill="#99999c"/><rect x="152" y="209" width="11" height="12" fill="#fafafa"/><rect x="69" y="221" width="11" height="12" fill="#bebec1"/><rect x="80" y="221" width="12" height="12" fill="#d4d4d1"/><rect x="92" y="221" width="12" height="12" fill="#c5c5c7"/><rect x="104" y="221" width="12" height="12" fill="#cacacd"/><rect x="116" y="221" width="12" height="12" fill="#c9c9cb"/><rect x="128" y="221" width="12" height="12" fill="#d3d3d0"/><rect x="140" y="221" width="12" height="12" fill="#d7d7da"/><rect x="152" y="221" width="11" height="12" fill="#fafafa"/><rect x="60" y="233" width="8" height="12" fill="#e5e5e2"/><rect x="68" y="233" width="12" height="12" fill="#e9e9e7"/><rect x="80" y="233" width="12" height="12" fill="#e9e9e5"/><rect x="92" y="233" width="12" height="12" fill="#e9e9ec"/><rect x="104" y="233" width="12" height="12" fill="#e9e9ec"/><rect x="116" y="233" width="12" height="12" fill="#e6e6e4"/><rect x="128" y="233" width="12" height="12" fill="#e3e3e7"/><rect x="140" y="233" width="12" height="12" fill="#e9e9e5"/><rect x="152" y="233" width="11" height="12" fill="#ebebeb"/><rect x="60" y="245" width="8" height="12" fill="#8c8c89"/><rect x="68" y="245" width="12" height="12" fill="#adadab"/><rect x="80" y="245" width="12" height="12" fill="#a7a7a6"/><rect x="92" y="245" width="12" height="12" fill="#c0c0bf"/><rect x="104" y="245" width="12" height="12" fill="#8d8d8d"/><rect x="116" y="245" width="12" height="12" fill="#999999"/><rect x="128" y="245" width="12" height="12" fill="#acacab"/><rect x="140" y="245" width="12" height="12" fill="#bcbcbd"/><rect x="152" y="245" width="11" height="12" fill="#ebebeb"/><rect x="60" y="257" width="8" height="12" fill="#ceced2"/><rect x="68" y="257" width="12" height="12" fill="#d8d8d6"/><rect x="80" y="257" width="12" height="12" fill="#c1c1c2"/><rect x="92" y="257" width="12" height="12" fill="#dbdbdf"/><rect x="104" y="257" width="12" height="12" fill="#d8d8dc"/><rect x="116" y="257" width="12" height="12" fill="#c6c6ca"/><rect x="128" y="257" width="12" height="12" fill="#c7c7cb"/><rect x="140" y="257" width="12" height="12" fill="#dededa"/><rect x="152" y="257" width="11" height="12" fill="#ebebeb"/><rect x="53" y="269" width="3" height="12" fill="#f3f3f1"/><rect x="56" y="269" width="12" height="12" fill="#fafaf8"/><rect x="68" y="269" width="12" height="12" fill="#f8f8f6"/><rect x="80" y="269" width="12" height="12" fill="#f3f3f0"/><rect x="92" y="269" width="12" height="12" fill="#f2f2ee"/><rect x="104" y="269" width="12" height="12" fill="#f5f5f9"/><rect x="116" y="269" width="12" height="12" fill="#f2f2f6"/><rect x="128" y="269" width="12" height="12" fill="#f3f3f0"/><rect x="140" y="269" width="12" height="12" fill="#f2f2ee"/><rect x="152" y="269" width="11" height="12" fill="#fafafa"/><rect x="53" y="281" width="3" height="12" fill="#9b9b9a"/><rect x="56" y="281" width="12" height="12" fill="#9d9d99"/><rect x="68" y="281" width="12" height="12" fill="#bdbdba"/><rect x="80" y="281" width="12" height="12" fill="#acacaf"/><rect x="92" y="281" width="12" height="12" fill="#afafab"/><rect x="104" y="281" width="12" height="12" fill="#bcbcb9"/><rect x="116" y="281" width="12" height="12" fill="#a8a8a9"/><rect x="128" y="281" width="12" height="12" fill="#b3b3b7"/><rect x="140" y="281" width="12" height="12" fill="#b2b2b6"/><rect x="152" y="281" width="11" height="12" fill="#fafafa"/><rect x="53" y="293" width="3" height="12" fill="#989898"/><rect x="56" y="293" width="12" height="12" fill="#a8a8ac"/><rect x="68" y="293" width="12" height="12" fill="#aeaeb1"/><rect x="80" y="293" width="12" height="12" fill="#acacab"/><rect x="92" y="293" width="12" height="12" fill="#b8b8bc"/><rect x="104" y="293" width="12" height="12" fill="#c4c4c4"/><rect x="116" y="293" width="12" height="12" fill="#c7c7cb"/><rect x="128" y="293" width="12" height="12" fill="#c5c5c4"/><rect x="140" y="293" width="12" height="12" fill="#c1c1c4"/><rect x="152" y="293" width="11" height="12" fill="#fafafa"/><rect x="53" y="305" width="3" height="12" fill="#f8f8fa"/><rect x="56" y="305" width="12" height="12" fill="#f9f9fb"/><rect x="68" y="305" width="12" height="12" fill="#f3f3f4"/><rect x="80" y="305" width="12" height="12" fill="#f9f9f8"/><rect x="92" y="305" width="12" height="12" fill="#f4f4f1"/><rect x="104" y="305" width="12" height="12" fill="#f7f7f7"/><rect x="116" y="305" width="12" height="12" fill="#f9f9f7"/><rect x="128" y="305" width="12" height="12" fill="#f5f5f3"/><rect x="140" y="305" width="12" height="12" fill="#f6f6f4"/><rect x="152" y="305" width="11" height="12" fill="#fafafa"/><rect x="46" y="317" width="10" height="12" fill="#dbdbda"/><rect x="56" y="317" width="12" height="12" fill="#c4c4c6"/><rect x="68" y="317" width="12" height="12" fill="#dddddb"/><rect x="80" y="317" width="12" height="12" fill="#ccccca"/><rect x="92" y="317" width="12" height="12" fill="#d9d9dd"/><rect x="104" y="317" width="12" height="12" fill="#d7d7d8"/><rect x="116" y="317" width="12" height="12" fill="#d8d8d7"/><rect x="128" y="317" width="12" height="12" fill="#d4d4d5"/><rect x="140" y="317" width="12" height="12" fill="#c3c3c4"/><rect x="152" y="317" width="11" height="12" fill="#ebebeb"/><rect x="46" y="329" width="10" height="12" fill="#8d8d8e"/><rect x="56" y="329" width="12" height="12" fill="#afafb2"/><rect x="68" y="329" width="12" height="12" fill="#a8a8a4"/><rect x="80" y="329" width="12" height="12" fill="#a4a4a5"/><rect x="92" y="329" width="12" height="12" fill="#adadad"/><rect x="104" y="329" width="12" height="12" fill="#acaca9"/><rect x="116" y="329" width="12" height="12" fill="#939392"/><rect x="128" y="329" width="12" height="12" fill="#c4c4c1"/><rect x="140" y="329" width="12" height="12" fill="#919191"/><rect x="152" y="329" width="11" height="12" fill="#ebebeb"/><rect x="46" y="341" width="10" height="12" fill="#e7e7e3"/><rect x="56" y="341" width="12" height="12" fill="#e9e9e9"/><rect x="68" y="341" width="12" height="12" fill="#e9e9eb"/><rect x="80" y="341" width="12" height="12" fill="#e7e7e9"/><rect x="92" y="341" width="12" height="12" fill="#e9e9ed"/><rect x="104" y="341" width="12" height="12" fill="#e3e3e6"/><rect x="116" y="341" width="12" height="12" fill="#e6e6e3"/><rect x="128" y="341" width="12" height="12" fill="#e7e7e3"/><rect x="140" y="341" width="12" height="12" fill="#e9e9eb"/><rect x="152" y="341" width="11" height="12" fill="#ebebeb"/><rect x="42" y="353" width="2" height="12" fill="#c2c2c2"/><rect x="44" y="353" width="12" height="12" fill="#bfbfbc"/><rect x="56" y="353" width="12" height="12" fill="#cececb"/><rect x="68" y="353" width="12" height="12" fill="#ccccc9"/><rect x="80" y="353" width="12" height="12" fill="#cececb"/><rect x="92" y="353" width="12" height="12" fill="#dbdbd7"/><rect x="104" y="353" width="12" height="12" fill="#d3d3d7"/><rect x="116" y="353" width="12" height="12" fill="#d8d8d8"/><rect x="128" y="353" width="12" height="12" fill="#c6c6c2"/><rect x="140" y="353" width="12" height="12" fill="#dfdfde"/><rect x="152" y="353" width="11" height="12" fill="#fafafa"/><rect x="42" y="365" width="2" height="12" fill="#c8c8c5"/><rect x="44" y="365" width="12" height="12" fill="#969696"/><rect x="56" y="365" width="12" height="12" fill="#8f8f8d"/><rect x="68" y="365" width="12" height="12" fill="#989898"/><rect x="80" y="365" width="12" height="12" fill="#b4b4b4"/><rect x="92" y="365" width="12" height="12" fill="#adadac"/><rect x="104" y="365" width="12" height="12" fill="#9e9ea1"/><rect x="116" y="365" width="12" height="12" fill="#acacaa"/><rect x="128" y="365" width="12" height="12" fill="#9d9d9e"/><rect x="140" y="365" width="12" height="12" fill="#bfbfbb"/><rect x="152" y="365" width="11" height="12" fill="#fafafa"/><rect x="42" y="377" width="2" height="12" fill="#cececa"/><rect x="44" y="377" width="12" height="12" fill="#bebeba"/><rect x="56" y="377" width="12" height="12" fill="#dedee2"/><rect x="68" y="377" width="12" height="12" fill="#cacace"/><rect x="80" y="377" width="12" height="12" fill="#dcdcdb"/><rect x="92" y="377" width="12" height="12" fill="#dadad7"/><rect x="104" y="377" width="12" height="12" fill="#d9d9dc"/><rect x="116" y="377" width="12" height="12" fill="#e0e0e2"/><rect x="128" y="377" width="12" height="12" fill="#dedede"/><rect x="140" y="377" width="12" height="12" fill="#cbcbca"/><rect x="152" y="377" width="11" height="12" fill="#fafafa"/><rect x="38" y="389" width="6" height="12" fill="#e6e6e5"/><rect x="44" y="389" width="12" height="12" fill="#e9e9eb"/><rect x="56" y="389" width="12" height="12" fill="#e6e6e2"/><rect x="68" y="389" width="12" height="12" fill="#e9e9e5"/><rect x="80" y="389" width="12" height="12" fill="#eaeaea"/><rect x="92" y="389" width="12" height="12" fill="#e5e5e3"/><rect x="104" y="389" width="12" height="12" fill="#ebebe8"/><rect x="116" y="389" width="12" height="12" fill="#e5e5e9"/><rect x="128" y="389" width="12" height="12" fill="#e7e7e6"/><rect x="140" y="389" width="12" height="12" fill="#e7e7e3"/><rect x="152" y="389" width="11" height="12" fill="#ebebeb"/><rect x="38" y="401" width="6" height="12" fill="#a9a9a7"/><rect x="44" y="401" width="12" height="12" fill="#969696"/><rect x="56" y="401" width="12" height="12" fill="#a8a8a4"/><rect x="68" y="401" width="12" height="12" fill="#9c9c9d"/><rect x="80" y="401" width="12" height="12" fill="#a1a1a5"/><rect x="92" y="401" width="12" height="12" fill="#a0a09f"/><rect x="104" y="401" width="12" height="12" fill="#8e8e8e"/><rect x="116" y="401" width="12" height="12" fill="#99999a"/><rect x="128" y="401" width="12" height="12" fill="#979793"/><rect x="140" y="401" width="12" height="12" fill="#a1a1a3"/><rect x="152" y="401" width="11" height="12" fill="#ebebeb"/><rect x="38" y="413" width="6" height="12" fill="#c3c3c6"/><rect x="44" y="413" width="12" height="12" fill="#cfcfd3"/><rect x="56" y="413" width="12" height="12" fill="#cacac9"/><rect x="68" y="413" width="12" height="12" fill="#dededa"/><rect x="80" y="413" width="12" height="12" fill="#c3c3c3"/><rect x="92" y="413" width="12" height="12" fill="#c3c3c1"/><rect x="104" y="413" width="12" height="12" fill="#d7d7d3"/><rect x="116" y="413" width="12" height="12" fill="#d7d7d3"/><rect x="128" y="413" width="12" height="12" fill="#d1d1d1"/><rect x="140" y="413" width="12" height="12" fill="#ccccc9"/><rect x="152" y="413" width="11" height="12" fill="#ebebeb"/><rect x="34" y="425" width="10" height="12" fill="#f2f2f0"/><rect x="44" y="425" width="12" height="12" fill="#f4f4f5"/><rect x="56" y="425" width="12" height="12" fill="#f3f3f1"/><rect x="68" y="425" width="12" height="12" fill="#f6f6f4"/><rect x="80" y="425" width="12" height="12" fill="#fafafe"/><rect x="92" y="425" width="12" height="12" fill="#f4f4f8"/><rect x="104" y="425" width="12" height="12" fill="#f8f8fc"/><rect x="116" y="425" width="12" height="12" fill="#f2f2ee"/><rect x="128" y="425" width="12" height="12" fill="#f7f7f4"/><rect x="140" y="425" width="12" height="12" fill="#fafaf6"/><rect x="152" y="425" width="11" height="12" fill="#fafafa"/><rect x="34" y="437" width="10" height="12" fill="#949495"/><rect x="44" y="437" width="12" height="12" fill="#929294"/><rect x="56" y="437" width="12" height="12" fill="#c1c1c4"/><rect x="68" y="437" width="12" height="12" fill="#afafab"/><rect x="80" y="437" width="12" height="12" fill="#b4b4b0"/><rect x="92" y="437" width="12" height="12" fill="#b4b4b8"/><rect x="104" y="437" width="12" height="12" fill="#b7b7b6"/><rect x="116" y="437" width="12" height="12" fill="#ababab"/><rect x="128" y="437" width="12" height="12" fill="#8c8c8f"/><rect x="140" y="437" width="12" height="12" fill="#bfbfbc"/><rect x="152" y="437" width="11" height="12" fill="#fafafa"/><rect x="34" y="449" width="10" height="12" fill="#bbbbbf"/><rect x="44" y="449" width="12" height="12" fill="#c5c5c9"/><rect x="56" y="449" width="12" height="12" fill="#919195"/><rect x="68" y="449" width="12" height="12" fill="#909093"/><rect x="80" y="449" width="12" height="12" fill="#9c9c99"/><rect x="92" y="449" width="12" height="12" fill="#c2c2c2"/><rect x="104" y="449" width="12" height="12" fill="#9b9b9a"/><rect x="116" y="449" width="12" height="12" fill="#9a9a9d"/><rect x="128" y="449" width="12" height="12" fill="#ababad"/><rect x="140" y="449" width="12" height="12" fill="#909093"/><rect x="152" y="449" width="11" height="12" fill="#fafafa"/><rect x="34" y="461" width="10" height="12" fill="#f6f6f2"/><rect x="44" y="461" width="12" height="12" fill="#f7f7f4"/><rect x="56" y="461" width="12" height="12" fill="#f8f8f9"/><rect x="68" y="461" width="12" height="12" fill="#f6f6f6"/><rect x="80" y="461" width="12" height="12" fill="#f8f8f4"/><rect x="92" y="461" width="12" height="12" fill="#f3f3ef"/><rect x="104" y="461" width="12" height="12" fill="#f3f3f3"/><rect x="116" y="461" width="12" height="12" fill="#f9f9f8"/><rect x="128" y="461" width="12" height="12" fill="#f3f3f3"/><rect x="140" y="461" width="12" height="12" fill="#f2f2f2"/><rect x="152" y="461" width="11" height="12" fill="#fafafa"/><rect x="30" y="473" width="2" height="12" fill="#dbdbde"/><rect x="32" y="473" width="12" height="12" fill="#dbdbd8"/><rect x="44" y="473" width="12" height="12" fill="#e1e1e0"/><rect x="56" y="473" width="12" height="12" fill="#d1d1ce"/><rect x="68" y="473" width="12" height="12" fill="#dcdcd8"/><rect x="80" y="473" width="12" height="12" fill="#d0d0d3"/><rect x="92" y="473" width="12" height="12" fill="#c2c2c6"/><rect x="104" y="473" width="12" height="12" fill="#dadada"/><rect x="116" y="473" width="12" height="12" fill="#d6d6d5"/><rect x="128" y="473" width="12" height="12" fill="#cbcbc8"/><rect x="140" y="473" width="12" height="12" fill="#c3c3c1"/><rect x="152" y="473" width="11" height="12" fill="#ebebeb"/><rect x="30" y="485" width="2" height="12" fill="#bbbbbf"/><rect x="32" y="485" width="12" height="12" fill="#9c9c9d"/><rect x="44" y="485" width="12" height="12" fill="#949498"/><rect x="56" y="485" width="12" height="12" fill="#9d9d9a"/><rect x="68" y="485" width="12" height="12" fill="#b9b9ba"/><rect x="80" y="485" width="12" height="12" fill="#9a9a9d"/><rect x="92" y="485" width="12" height="12" fill="#c5c5c8"/><rect x="104" y="485" width="12" height="12" fill="#a5a5a1"/><rect x="116" y="485" width="12" height="12" fill="#969692"/><rect x="128" y="485" width="12" height="12" fill="#c8c8cb"/><rect x="140" y="485" width="12" height="12" fill="#b7b7ba"/><rect x="152" y="485" width="11" height="12" fill="#ebebeb"/><rect x="30" y="497" width="2" height="12" fill="#e5e5e5"/><rect x="32" y="497" width="12" height="12" fill="#e9e9eb"/><rect x="44" y="497" width="12" height="12" fill="#e6e6e8"/><rect x="56" y="497" width="12" height="12" fill="#e6e6e3"/><rect x="68" y="497" width="12" height="12" fill="#e6e6e2"/><rect x="80" y="497" width="12" height="12" fill="#e6e6e7"/><rect x="92" y="497" width="12" height="12" fill="#e5e5e2"/><rect x="104" y="497" width="12" height="12" fill="#e8e8e4"/><rect x="116" y="497" width="12" height="12" fill="#e7e7e7"/><rect x="128" y="497" width="12" height="12" fill="#e6e6e3"/><rect x="140" y="497" width="12" height="12" fill="#e5e5e7"/><rect x="152" y="497" width="11" height="12" fill="#ebebeb"/><rect x="26" y="509" width="6" height="12" fill="#c2c2c3"/><rect x="32" y="509" width="12" height="12" fill="#d9d9d9"/><rect x="44" y="509" width="12" height="12" fill="#c1c1c1"/><rect x="56" y="509" width="12" height="12" fill="#c4c4c0"/><rect x="68" y="509" width="12" height="12" fill="#d0d0ce"/><rect x="80" y="509" width="12" height="12" fill="#cdcdcd"/><rect x="92" y="509" width="12" height="12" fill="#d9d9dd"/><rect x="104" y="509" width="12" height="12" fill="#d2d2d1"/><rect x="116" y="509" width="12" height="12" fill="#d5d5d7"/><rect x="128" y="509" width="12" height="12" fill="#bfbfc1"/><rect x="140" y="509" width="12" height="12" fill="#e1e1e5"/><rect x="152" y="509" width="11" height="12" fill="#fafafa"/><rect x="26" y="521" width="6" height="12" fill="#999996"/><rect x="32" y="521" width="12" height="12" fill="#8f8f91"/><rect x="44" y="521" width="12" height="12" fill="#a8a8a6"/><rect x="56" y="521" width="12" height="12" fill="#b5b5b5"/><rect x="68" y="521" width="12" height="12" fill="#ababa7"/><rect x="80" y="521" width="12" height="12" fill="#c6c6ca"/><rect x="92" y="521" width="12" height="12" fill="#949492"/><rect x="104" y="521" width="12" height="12" fill="#aaaaac"/><rect x="116" y="521" width="12" height="12" fill="#a1a1a1"/><rect x="128" y="521" width="12" height="12" fill="#9f9f9f"/><rect x="140" y="521" width="12" height="12" fill="#bbbbbb"/><rect x="152" y="521" width="11" height="12" fill="#fafafa"/><rect x="26" y="533" width="6" height="12" fill="#d7d7d6"/><rect x="32" y="533" width="12" height="12" fill="#d1d1d4"/><rect x="44" y="533" width="12" height="12" fill="#e1e1e3"/><rect x="56" y="533" width="12" height="12" fill="#c5c5c3"/><rect x="68" y="533" width="12" height="12" fill="#c8c8c5"/><rect x="80" y="533" width="12" height="12" fill="#cbcbcf"/><rect x="92" y="533" width="12" height="12" fill="#dddde1"/><rect x="104" y="533" width="12" height="12" fill="#cccccf"/><rect x="116" y="533" width="12" height="12" fill="#d3d3d6"/><rect x="128" y="533" width="12" height="12" fill="#d9d9d7"/><rect x="140" y="533" width="12" height="12" fill="#e1e1e0"/><rect x="152" y="533" width="11" height="12" fill="#fafafa"/><rect x="22" y="545" width="10" height="12" fill="#e8e8e5"/><rect x="32" y="545" width="12" height="12" fill="#e9e9ea"/><rect x="44" y="545" width="12" height="12" fill="#e3e3e0"/><rect x="56" y="545" width="12" height="12" fill="#e6e6e5"/><rect x="68" y="545" width="12" height="12" fill="#e6e6e6"/><rect x="80" y="545" width="12" height="12" fill="#e8e8e4"/><rect x="92" y="545" width="12" height="12" fill="#e5e5e7"/><rect x="104" y="545" width="12" height="12" fill="#e5e5e9"/><rect x="116" y="545" width="12" height="12" fill="#e8e8ea"/><rect x="128" y="545" width="12" height="12" fill="#e7e7e8"/><rect x="140" y="545" width="12" height="12" fill="#ebebee"/><rect x="152" y="545" width="11" height="12" fill="#ebebeb"/><rect x="22" y="557" width="10" height="12" fill="#9d9d9e"/><rect x="32" y="557" width="12" height="12" fill="#949498"/><rect x="44" y="557" width="12" height="12" fill="#adadac"/><rect x="56" y="557" width="12" height="12" fill="#919191"/><rect x="68" y="557" width="12" height="12" fill="#c5c5c4"/><rect x="80" y="557" width="12" height="12" fill="#a4a4a6"/><rect x="92" y="557" width="12" height="12" fill="#b5b5b8"/><rect x="104" y="557" width="12" height="12" fill="#a7a7a7"/><rect x="116" y="557" width="12" height="12" fill="#c2c2be"/><rect x="128" y="557" width="12" height="12" fill="#949490"/><rect x="140" y="557" width="12" height="12" fill="#a7a7aa"/><rect x="152" y="557" width="11" height="12" fill="#ebebeb"/><rect x="22" y="569" width="10" height="12" fill="#ddddd9"/><rect x="32" y="569" width="12" height="12" fill="#c2c2c4"/><rect x="44" y="569" width="12" height="12" fill="#dfdfe2"/><rect x="56" y="569" width="12" height="12" fill="#dadad9"/><rect x="68" y="569" width="12" height="12" fill="#c4c4c3"/><rect x="80" y="569" width="12" height="12" fill="#c7c7c5"/><rect x="92" y="569" width="12" height="12" fill="#dfdfdc"/><rect x="104" y="569" width="12" height="12" fill="#dbdbd8"/><rect x="116" y="569" width="12" height="12" fill="#e1e1dd"/><rect x="128" y="569" width="12" height="12" fill="#bebebc"/><rect x="140" y="569" width="12" height="12" fill="#ccccc8"/><rect x="152" y="569" width="11" height="12" fill="#ebebeb"/><rect x="20" y="581" width="12" height="12" fill="#f6f6f4"/><rect x="32" y="581" width="12" height="12" fill="#f6f6fa"/><rect x="44" y="581" width="12" height="12" fill="#f4f4f1"/><rect x="56" y="581" width="12" height="12" fill="#f9f9f6"/><rect x="68" y="581" width="12" height="12" fill="#f6f6fa"/><rect x="80" y="581" width="12" height="12" fill="#f7f7f9"/><rect x="92" y="581" width="12" height="12" fill="#f6f6f5"/><rect x="104" y="581" width="12" height="12" fill="#fafaf6"/><rect x="116" y="581" width="12" height="12" fill="#f2f2f2"/><rect x="128" y="581" width="12" height="12" fill="#f3f3f3"/><rect x="140" y="581" width="12" height="12" fill="#f5f5f4"/><rect x="152" y="581" width="11" height="12" fill="#fafafa"/><rect x="20" y="593" width="12" height="12" fill="#aaaaae"/><rect x="32" y="593" width="12" height="12" fill="#9b9b9f"/><rect x="44" y="593" width="12" height="12" fill="#9b9b97"/><rect x="56" y="593" width="12" height="12" fill="#a6a6a6"/><rect x="68" y="593" width="12" height="12" fill="#8f8f8b"/><rect x="80" y="593" width="12" height="12" fill="#98989b"/><rect x="92" y="593" width="12" height="12" fill="#c4c4c6"/><rect x="104" y="593" width="12" height="12" fill="#919191"/><rect x="116" y="593" width="12" height="12" fill="#9a9a9c"/><rect x="128" y="593" width="12" height="12" fill="#c7c7c8"/><rect x="140" y="593" width="12" height="12" fill="#9a9a9d"/><rect x="152" y="593" width="11" height="12" fill="#fafafa"/><rect x="20" y="605" width="12" height="12" fill="#8e8e8f"/><rect x="32" y="605" width="12" height="12" fill="#b9b9bb"/><rect x="44" y="605" width="12" height="12" fill="#a3a3a5"/><rect x="56" y="605" width="12" height="12" fill="#989894"/><rect x="68" y="605" width="12" height="12" fill="#bfbfbf"/><rect x="80" y="605" width="12" height="12" fill="#bbbbbf"/><rect x="92" y="605" width="12" height="12" fill="#90908f"/><rect x="104" y="605" width="12" height="12" fill="#ababaa"/><rect x="116" y="605" width="12" height="12" fill="#9f9f9e"/><rect x="128" y="605" width="12" height="12" fill="#9a9a9d"/><rect x="140" y="605" width="12" height="12" fill="#9a9a9a"/><rect x="152" y="605" width="11" height="12" fill="#fafafa"/><rect x="20" y="617" width="12" height="12" fill="#f6f6f3"/><rect x="32" y="617" width="12" height="12" fill="#f3f3f1"/><rect x="44" y="617" width="12" height="12" fill="#f7f7fa"/><rect x="56" y="617" width="12" height="12" fill="#f4f4f0"/><rect x="68" y="617" width="12" height="12" fill="#f8f8fa"/><rect x="80" y="617" width="12" height="12" fill="#fafaf9"/><rect x="92" y="617" width="12" height="12" fill="#fafaf8"/><rect x="104" y="617" width="12" height="12" fill="#f4f4f0"/><rect x="116" y="617" width="12" height="12" fill="#fafaf8"/><rect x="128" y="617" width="12" height="12" fill="#f4f4f7"/><rect x="140" y="617" width="12" height="12" fill="#f5f5f2"/><rect x="152" y="617" width="11" height="12" fill="#fafafa"/><rect x="20" y="629" width="12" height="12" fill="#c3c3c1"/><rect x="32" y="629" width="12" height="12" fill="#d3d3d2"/><rect x="44" y="629" width="12" height="12" fill="#c9c9cd"/><rect x="56" y="629" width="12" height="12" fill="#dbdbd7"/><rect x="68" y="629" width="12" height="12" fill="#d1d1d3"/><rect x="80" y="629" width="12" height="12" fill="#d5d5d6"/><rect x="92" y="629" width="12" height="12" fill="#dadad8"/><rect x="104" y="629" width="12" height="12" fill="#c4c4c0"/><rect x="116" y="629" width="12" height="12" fill="#c3c3c3"/><rect x="128" y="629" width="12" height="12" fill="#c3c3c4"/><rect x="140" y="629" width="12" height="12" fill="#d8d8d5"/><rect x="152" y="629" width="11" height="12" fill="#ebebeb"/><rect x="20" y="641" width="12" height="12" fill="#afafae"/><rect x="32" y="641" width="12" height="12" fill="#a4a4a5"/><rect x="44" y="641" width="12" height="12" fill="#bdbdbd"/><rect x="56" y="641" width="12" height="12" fill="#c0c0c2"/><rect x="68" y="641" width="12" height="12" fill="#91918d"/><rect x="80" y="641" width="12" height="12" fill="#b9b9bc"/><rect x="92" y="641" width="12" height="12" fill="#989899"/><rect x="104" y="641" width="12" height="12" fill="#aeaeb1"/><rect x="116" y="641" width="12" height="12" fill="#989899"/><rect x="128" y="641" width="12" height="12" fill="#a3a3a6"/><rect x="140" y="641" width="12" height="12" fill="#8d8d8f"/><rect x="152" y="641" width="11" height="12" fill="#ebebeb"/><rect x="20" y="653" width="12" height="12" fill="#e8e8ea"/><rect x="32" y="653" width="12" height="12" fill="#ebebed"/><rect x="44" y="653" width="12" height="12" fill="#ebebee"/><rect x="56" y="653" width="12" height="12" fill="#eaeae6"/><rect x="68" y="653" width="12" height="12" fill="#e7e7e6"/><rect x="80" y="653" width="12" height="12" fill="#eaeaeb"/><rect x="92" y="653" width="12" height="12" fill="#e6e6e6"/><rect x="104" y="653" width="12" height="12" fill="#e6e6e2"/><rect x="116" y="653" width="12" height="12" fill="#e7e7e8"/><rect x="128" y="653" width="12" height="12" fill="#e7e7e7"/><rect x="140" y="653" width="12" height="12" fill="#ebebe8"/><rect x="152" y="653" width="11" height="12" fill="#ebebeb"/><rect x="20" y="665" width="12" height="12" fill="#bfbfbe"/><rect x="32" y="665" width="12" height="12" fill="#c4c4c7"/><rect x="44" y="665" width="12" height="12" fill="#dbdbdd"/><rect x="56" y="665" width="12" height="12" fill="#ceced0"/><rect x="68" y="665" width="12" height="12" fill="#dddddb"/><rect x="80" y="665" width="12" height="12" fill="#dddddb"/><rect x="92" y="665" width="12" height="12" fill="#bebebe"/><rect x="104" y="665" width="12" height="12" fill="#c7c7c6"/><rect x="116" y="665" width="12" height="12" fill="#d2d2d3"/><rect x="128" y="665" width="12" height="12" fill="#dbdbdc"/><rect x="140" y="665" width="12" height="12" fill="#c3c3c7"/><rect x="152" y="665" width="11" height="12" fill="#fafafa"/><rect x="20" y="677" width="12" height="12" fill="#98989a"/><rect x="32" y="677" width="12" height="12" fill="#bcbcba"/><rect x="44" y="677" width="12" height="12" fill="#9b9b9d"/><rect x="56" y="677" width="12" height="12" fill="#90908c"/><rect x="68" y="677" width="12" height="12" fill="#aaaaae"/><rect x="80" y="677" width="12" height="12" fill="#aeaeaf"/><rect x="92" y="677" width="12" height="12" fill="#969698"/><rect x="104" y="677" width="12" height="12" fill="#c4c4c1"/><rect x="116" y="677" width="12" height="12" fill="#909090"/><rect x="128" y="677" width="12" height="12" fill="#b3b3b0"/><rect x="140" y="677" width="12" height="12" fill="#999996"/><rect x="152" y="677" width="11" height="12" fill="#fafafa"/><rect x="20" y="689" width="12" height="12" fill="#d8d8db"/><rect x="32" y="689" width="12" height="12" fill="#dadad8"/><rect x="44" y="689" width="12" height="12" fill="#ccccca"/><rect x="56" y="689" width="12" height="12" fill="#d8d8db"/><rect x="68" y="689" width="12" height="12" fill="#cdcdd1"/><rect x="80" y="689" width="12" height="12" fill="#c5c5c5"/><rect x="92" y="689" width="12" height="12" fill="#d0d0d0"/><rect x="104" y="689" width="12" height="12" fill="#cfcfd0"/><rect x="116" y="689" width="12" height="12" fill="#cecece"/><rect x="128" y="689" width="12" height="12" fill="#cacacd"/><rect x="140" y="689" width="12" height="12" fill="#cdcdcb"/><rect x="152" y="689" width="11" height="12" fill="#fafafa"/><rect x="20" y="701" width="12" height="12" fill="#e8e8e7"/><rect x="32" y="701" width="12" height="12" fill="#e9e9e9"/><rect x="44" y="701" width="12" height="12" fill="#e8e8e9"/><rect x="56" y="701" width="12" height="12" fill="#eaeaec"/><rect x="68" y="701" width="12" height="12" fill="#e7e7e6"/><rect x="80" y="701" width="12" height="12" fill="#e3e3e7"/><rect x="92" y="701" width="12" height="12" fill="#e8e8e5"/><rect x="104" y="701" width="12" height="12" fill="#e4e4e0"/><rect x="116" y="701" width="12" height="12" fill="#eaeae6"/><rect x="128" y="701" width="12" height="12" fill="#e4e4e3"/><rect x="140" y="701" width="12" height="12" fill="#e4e4e5"/><rect x="152" y="701" width="11" height="12" fill="#ebebeb"/><rect x="20" y="713" width="12" height="12" fill="#8e8e8e"/><rect x="32" y="713" width="12" height="12" fill="#9a9a97"/><rect x="44" y="713" width="12" height="12" fill="#8f8f8e"/><rect x="56" y="713" width="12" height="12" fill="#b2b2b1"/><rect x="68" y="713" width="12" height="12" fill="#c7c7c4"/><rect x="80" y="713" width="12" height="12" fill="#a3a3a7"/><rect x="92" y="713" width="12" height="12" fill="#c3c3c1"/><rect x="104" y="713" width="12" height="12" fill="#a8a8a8"/><rect x="116" y="713" width="12" height="12" fill="#bdbdb9"/><rect x="128" y="713" width="12" height="12" fill="#929293"/><rect x="140" y="713" width="12" height="12" fill="#999995"/><rect x="152" y="713" width="11" height="12" fill="#ebebeb"/><rect x="20" y="725" width="12" height="12" fill="#d5d5d6"/><rect x="32" y="725" width="12" height="12" fill="#c7c7c3"/><rect x="44" y="725" width="12" height="12" fill="#cbcbcb"/><rect x="56" y="725" width="12" height="12" fill="#c0c0bf"/><rect x="68" y="725" width="12" height="12" fill="#bebebf"/><rect x="80" y="725" width="12" height="12" fill="#d8d8d9"/><rect x="92" y="725" width="12" height="12" fill="#c9c9c9"/><rect x="104" y="725" width="12" height="12" fill="#c2c2c1"/><rect x="116" y="725" width="12" height="12" fill="#c0c0c3"/><rect x="128" y="725" width="12" height="12" fill="#e1e1e4"/><rect x="140" y="725" width="12" height="12" fill="#c2c2c4"/><rect x="152" y="725" width="11" height="12" fill="#ebebeb"/><rect x="42" y="785" width="2" height="12" fill="#c4c4c6"/><rect x="44" y="785" width="12" height="12" fill="#e1e1df"/><rect x="56" y="785" width="12" height="12" fill="#e0e0dd"/><rect x="68" y="785" width="12" height="12" fill="#c8c8ca"/><rect x="80" y="785" width="12" height="12" fill="#cfcfd1"/><rect x="92" y="785" width="12" height="12" fill="#d0d0d0"/><rect x="104" y="785" width="12" height="12" fill="#d8d8d4"/><rect x="116" y="785" width="12" height="12" fill="#d1d1d2"/><rect x="128" y="785" width="12" height="12" fill="#d8d8da"/><rect x="140" y="785" width="12" height="12" fill="#bfbfc0"/><rect x="152" y="785" width="11" height="12" fill="#ebebeb"/><rect x="42" y="797" width="2" height="12" fill="#b5b5b4"/><rect x="44" y="797" width="12" height="12" fill="#a5a5a7"/><rect x="56" y="797" width="12" height="12" fill="#999995"/><rect x="68" y="797" width="12" height="12" fill="#a7a7a5"/><rect x="80" y="797" width="12" height="12" fill="#a7a7a4"/><rect x="92" y="797" width="12" height="12" fill="#c0c0bd"/><rect x="104" y="797" width="12" height="12" fill="#a5a5a6"/><rect x="116" y="797" width="12" height="12" fill="#a9a9a7"/><rect x="128" y="797" width="12" height="12" fill="#949490"/><rect x="140" y="797" width="12" height="12" fill="#8f8f93"/><rect x="152" y="797" width="11" height="12" fill="#ebebeb"/><rect x="42" y="809" width="2" height="12" fill="#e9e9eb"/><rect x="44" y="809" width="12" height="12" fill="#eaeaeb"/><rect x="56" y="809" width="12" height="12" fill="#e3e3e1"/><rect x="68" y="809" width="12" height="12" fill="#e9e9ea"/><rect x="80" y="809" width="12" height="12" fill="#e7e7e5"/><rect x="92" y="809" width="12" height="12" fill="#e3e3e1"/><rect x="104" y="809" width="12" height="12" fill="#eaeae7"/><rect x="116" y="809" width="12" height="12" fill="#e5e5e8"/><rect x="128" y="809" width="12" height="12" fill="#e8e8e8"/><rect x="140" y="809" width="12" height="12" fill="#e9e9e5"/><rect x="152" y="809" width="11" height="12" fill="#ebebeb"/><rect x="38" y="821" width="6" height="12" fill="#dcdcdd"/><rect x="44" y="821" width="12" height="12" fill="#c1c1c3"/><rect x="56" y="821" width="12" height="12" fill="#c3c3c1"/><rect x="68" y="821" width="12" height="12" fill="#ccccce"/><rect x="80" y="821" width="12" height="12" fill="#cacacd"/><rect x="92" y="821" width="12" height="12" fill="#c9c9c8"/><rect x="104" y="821" width="12" height="12" fill="#c0c0c2"/><rect x="116" y="821" width="12" height="12" fill="#dfdfdd"/><rect x="128" y="821" width="12" height="12" fill="#d6d6d7"/><rect x="140" y="821" width="12" height="12" fill="#c5c5c3"/><rect x="152" y="821" width="11" height="12" fill="#fafafa"/><rect x="38" y="833" width="6" height="12" fill="#9b9b9a"/><rect x="44" y="833" width="12" height="12" fill="#8e8e92"/><rect x="56" y="833" width="12" height="12" fill="#c1c1bd"/><rect x="68" y="833" width="12" height="12" fill="#b6b6b7"/><rect x="80" y="833" width="12" height="12" fill="#939395"/><rect x="92" y="833" width="12" height="12" fill="#b2b2b5"/><rect x="104" y="833" width="12" height="12" fill="#afafaf"/><rect x="116" y="833" width="12" height="12" fill="#b5b5b7"/><rect x="128" y="833" width="12" height="12" fill="#9f9f9e"/><rect x="140" y="833" width="12" height="12" fill="#a7a7a9"/><rect x="152" y="833" width="11" height="12" fill="#fafafa"/><rect x="38" y="845" width="6" height="12" fill="#d5d5d8"/><rect x="44" y="845" width="12" height="12" fill="#dedee1"/><rect x="56" y="845" width="12" height="12" fill="#c9c9c5"/><rect x="68" y="845" width="12" height="12" fill="#bebec1"/><rect x="80" y="845" width="12" height="12" fill="#dbdbda"/><rect x="92" y="845" width="12" height="12" fill="#dadadd"/><rect x="104" y="845" width="12" height="12" fill="#c9c9cc"/><rect x="116" y="845" width="12" height="12" fill="#d7d7d4"/><rect x="128" y="845" width="12" height="12" fill="#c2c2c0"/><rect x="140" y="845" width="12" height="12" fill="#d4d4d6"/><rect x="152" y="845" width="11" height="12" fill="#fafafa"/></svg>
<div style="position:absolute;left:2818px;top:1633px;width:126px;height:12px;background:#4f9be0"></div>
<div style="position:absolute;left:2952px;top:1633px;width:11px;height:30px;background:#7ab4e8"></div>
<div style="position:absolute;left:2814px;top:1669px;width:25px;height:12px;background:#62a3dc"></div>
<div style="position:absolute;left:2844px;top:1669px;width:100px;height:12px;background:#62a3dc"></div>
<div style="position:absolute;left:33px;top:1753px;width:2925px;height:39px;background:#c8c8c8"></div>
<div style="position:absolute;left:45px;top:1764px;width:17px;height:17px;border-radius:50%;background:radial-gradient(circle at 40% 40%,#e0e0e0,#a8a8a8);border:1.5px solid #8a8a8a"></div>
<div class="t " style="left:73px;top:1773.11px;font-size:25.4px;color:#000;font-weight:700;"><span class="b"></span>盈/亏: 5 444.90  信用额: 0.00  存款: 10 000.00  取款: 0.00</div>
<div class="t " style="right:553px;top:1773.11px;font-size:25.4px;color:#000;font-weight:700;"><span class="b"></span>15 444.90</div>
<div style="position:absolute;left:17px;top:1617px;width:2952px;height:70px;border:6px solid #ff1a10;border-radius:6px"></div>
<div style="position:absolute;left:32px;top:1812px;width:2960px;height:2px;background:#000"></div>
<div style="position:absolute;left:33px;top:1814px;width:2959px;height:36px;background:#f0f0f0"></div>
<div style="position:absolute;left:32px;top:1850px;width:2962px;height:1px;background:#fafafa"></div>
<div style="position:absolute;left:2993px;top:855px;width:1px;height:996px;background:#dcdcdc"></div>
<div style="position:absolute;left:212px;top:1812px;width:135px;height:38px;background:#fff;border:2px solid #000;border-top:none"></div>
<div class="t " style="left:55px;top:1831.6px;font-size:24px;color:#6a6a6a;font-weight:400;"><span class="b"></span>交易</div>
<div class="t " style="left:142px;top:1831.6px;font-size:24px;color:#6a6a6a;font-weight:400;"><span class="b"></span>展示</div>
<div class="t " style="left:230px;top:1831.6px;font-size:24px;color:#000;font-weight:400;"><span class="b"></span>账户历史</div>
<div class="t " style="left:365px;top:1831.6px;font-size:24px;color:#6a6a6a;font-weight:400;"><span class="b"></span>新闻</div>
<div class="t " style="left:419px;top:1833.95px;font-size:23px;color:#e8102a;font-weight:700;"><span class="b"></span>99</div>
<div class="t " style="left:485px;top:1831.6px;font-size:24px;color:#6a6a6a;font-weight:400;"><span class="b"></span>警报</div>
<div class="t " style="left:573px;top:1831.6px;font-size:24px;color:#6a6a6a;font-weight:400;"><span class="b"></span>邮箱</div>
<div class="t " style="left:627px;top:1833.95px;font-size:23px;color:#e8102a;font-weight:700;"><span class="b"></span>7</div>
<div class="t " style="left:677px;top:1831.6px;font-size:24px;color:#6a6a6a;font-weight:400;"><span class="b"></span>市场</div>
<div class="t " style="left:731px;top:1833.95px;font-size:23px;color:#e8102a;font-weight:700;"><span class="b"></span>80</div>
<div class="t " style="left:796px;top:1831.6px;font-size:24px;color:#6a6a6a;font-weight:400;"><span class="b"></span>文章</div>
<div class="t " style="left:884px;top:1831.6px;font-size:24px;color:#6a6a6a;font-weight:400;"><span class="b"></span>代码库</div>
<div class="t " style="left:996px;top:1831.6px;font-size:24px;color:#6a6a6a;font-weight:400;"><span class="b"></span>EA</div>
<div class="t " style="left:1067px;top:1831.6px;font-size:24px;color:#6a6a6a;font-weight:400;"><span class="b"></span>日志</div>
<div style="position:absolute;left:123px;top:1819px;width:1px;height:28px;background:#a0a0a0"></div>
<div style="position:absolute;left:465px;top:1819px;width:1px;height:28px;background:#a0a0a0"></div>
<div style="position:absolute;left:553px;top:1819px;width:1px;height:28px;background:#a0a0a0"></div>
<div style="position:absolute;left:658px;top:1819px;width:1px;height:28px;background:#a0a0a0"></div>
<div style="position:absolute;left:777px;top:1819px;width:1px;height:28px;background:#a0a0a0"></div>
<div style="position:absolute;left:865px;top:1819px;width:1px;height:28px;background:#a0a0a0"></div>
<div style="position:absolute;left:977px;top:1819px;width:1px;height:28px;background:#a0a0a0"></div>
<div style="position:absolute;left:1047px;top:1819px;width:1px;height:28px;background:#a0a0a0"></div>
<div style="position:absolute;left:1135px;top:1819px;width:1px;height:28px;background:#a0a0a0"></div>
<div style="position:absolute;left:0px;top:1858px;width:2999px;height:1px;background:#ababab"></div>
<div style="position:absolute;left:0px;top:1859px;width:2999px;height:46px;background:#f0f0f0"></div>
<div class="t " style="left:3px;top:1882.6px;font-size:24px;color:#000;font-weight:400;"><span class="b"></span>寻求帮助,请按F1键</div>
<div style="position:absolute;left:1483px;top:1863px;width:1px;height:38px;background:#c8c8c8"></div>
<div style="position:absolute;left:1731px;top:1863px;width:1px;height:38px;background:#c8c8c8"></div>
<div style="position:absolute;left:1954px;top:1863px;width:1px;height:38px;background:#c8c8c8"></div>
<div style="position:absolute;left:2106px;top:1863px;width:1px;height:38px;background:#c8c8c8"></div>
<div style="position:absolute;left:2257px;top:1863px;width:1px;height:38px;background:#c8c8c8"></div>
<div style="position:absolute;left:2401px;top:1863px;width:1px;height:38px;background:#c8c8c8"></div>
<div style="position:absolute;left:2549px;top:1863px;width:1px;height:38px;background:#c8c8c8"></div>
<div style="position:absolute;left:2691px;top:1863px;width:1px;height:38px;background:#c8c8c8"></div>
<div class="t " style="left:1490px;top:1882.6px;font-size:24px;color:#000;font-weight:400;"><span class="b"></span>Default</div>
<svg style="position:absolute;left:2696px;top:1868px" width="48" height="28"><rect x="0" y="0" width="4" height="28" fill="#6b7d18"/><rect x="0" y="12" width="4" height="16" fill="#17436b"/><rect x="6" y="0" width="4" height="28" fill="#6b7d18"/><rect x="6" y="13" width="4" height="15" fill="#17436b"/><rect x="12" y="0" width="4" height="28" fill="#6b7d18"/><rect x="12" y="14" width="4" height="14" fill="#17436b"/><rect x="18" y="0" width="4" height="28" fill="#6b7d18"/><rect x="18" y="12" width="4" height="16" fill="#17436b"/><rect x="24" y="0" width="4" height="28" fill="#6b7d18"/><rect x="24" y="13" width="4" height="15" fill="#17436b"/><rect x="30" y="0" width="4" height="28" fill="#6b7d18"/><rect x="30" y="14" width="4" height="14" fill="#17436b"/><rect x="36" y="0" width="4" height="28" fill="#6b7d18"/><rect x="36" y="12" width="4" height="16" fill="#17436b"/><rect x="42" y="0" width="4" height="28" fill="#6b7d18"/><rect x="42" y="13" width="4" height="15" fill="#17436b"/></svg>
<div class="t " style="left:2752px;top:1882.42px;font-size:24.5px;color:#000;font-weight:400;"><span class="b"></span>17263/19 kb</div>
<div style="position:absolute;left:0px;top:1905px;width:2999px;height:10px;background:linear-gradient(90deg,#e0e9bc 0%,#dfe9c4 17%,#dde7ee 24%,#e2e6f0 58%,#f0e4dc 63%,#e2e6f0 68%,#dce5f2 100%)"></div>
</body></html>
